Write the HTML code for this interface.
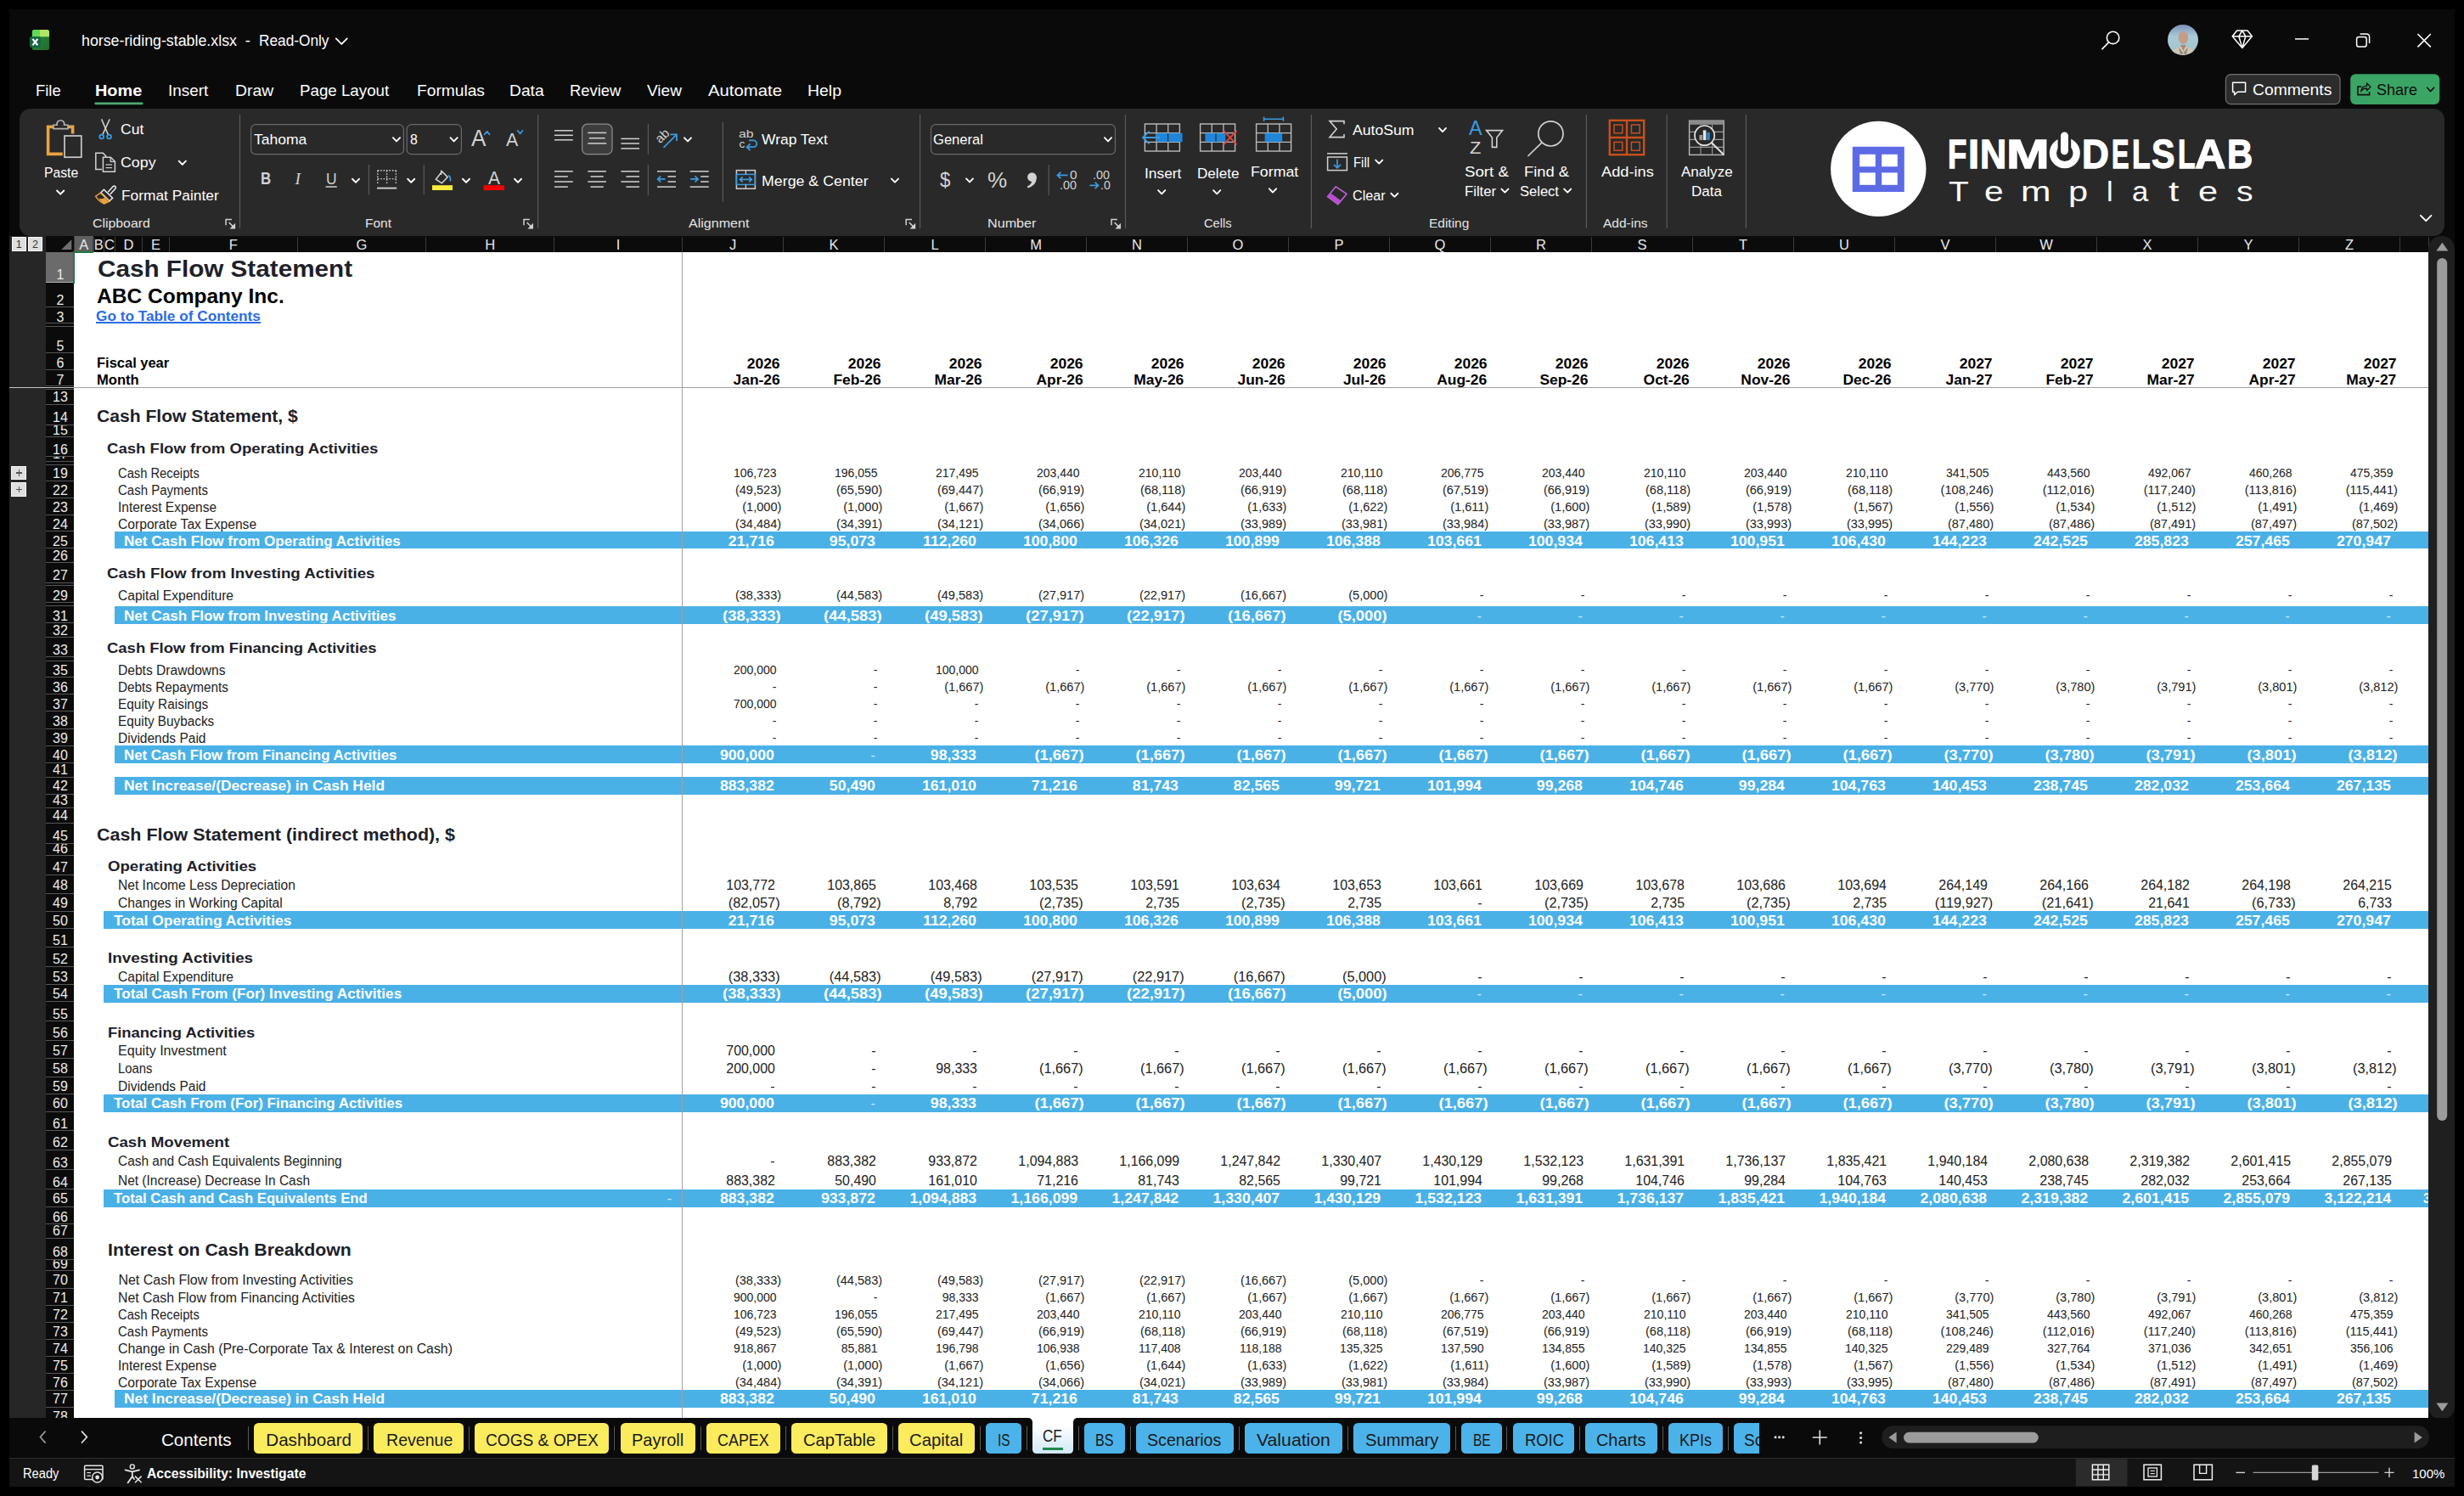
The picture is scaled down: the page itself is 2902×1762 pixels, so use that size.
<!DOCTYPE html>
<html><head><meta charset="utf-8"><title>horse-riding-stable.xlsx</title>
<style>
html,body{margin:0;padding:0;background:#000;}
body{width:2902px;height:1762px;position:relative;overflow:hidden;font-family:"Liberation Sans",sans-serif;}
div,span.t,svg{position:absolute;}
span.t{white-space:nowrap;display:block;}
.rh{left:54px;width:33.3px;overflow:hidden;}
</style></head><body>
<div style="left:11px;top:10.5px;width:2880px;height:1740.5px;background:#0a0a0a;"></div>
<div style="left:22.7px;top:128.2px;width:2856.3px;height:149.7px;background:#292929;border-radius:13px;"></div>
<svg style="left:0;top:0" width="2902" height="290" viewBox="0 0 2902 290"><defs><linearGradient id="xg" x1="0" y1="0" x2="1" y2="1"><stop offset="0" stop-color="#2f8d3c"/><stop offset="1" stop-color="#1f6e2d"/></linearGradient></defs><rect x="37.9" y="35" width="20.1" height="24" fill="url(#xg)" rx="2.6"/><path d="M37.9 37.6a2.6 2.6 0 0 1 2.6-2.6H47V43.2H37.9Z" fill="#62d857" /><path d="M47 35H55.4a2.6 2.6 0 0 1 2.6 2.6V43.2H47Z" fill="#b3e666" /><rect x="34.8" y="43" width="13.2" height="13.2" fill="#14683e" rx="3.2"/><path d="M38.4 45.9L44.4 53.3M44.4 45.9L38.4 53.3" fill="none" stroke="#fff" stroke-width="2.2" /><path d="M395.8 45.35L402.3 51.85L408.8 45.35" fill="none" stroke="#fff" stroke-width="1.8" stroke-linecap="round" stroke-linejoin="round"/><rect x="111.3" y="120.4" width="57.3" height="2.9" fill="#4fa874" rx="1.4"/><path d="M63 149.4H56.6V181.4H73.8" fill="none" stroke="#e9a33e" stroke-width="3.6" /><path d="M80 149.4H85.6V157.6" fill="none" stroke="#e9a33e" stroke-width="3.6" /><path d="M63 151.6V147.2H67.2C66.6 143.6 68.8 141.8 71.4 141.8C74 141.8 76.2 143.6 75.6 147.2H80V151.6Z" fill="#292929" stroke="#b4b4b4" stroke-width="1.6" /><rect x="76" y="160" width="19.8" height="25.2" fill="#292929" stroke="#c9c9c9" stroke-width="1.7"/><path d="M67.1 224.5L71.2 228.7L75.3 224.5" fill="none" stroke="#fff" stroke-width="1.9" stroke-linecap="round" stroke-linejoin="round"/><path d="M119.6 140.4L127.4 158.6" stroke="#d2d2d2" stroke-width="1.5" stroke-linecap="butt" fill="none"/><path d="M129.2 140.4L120.8 158.6" stroke="#d2d2d2" stroke-width="1.5" stroke-linecap="butt" fill="none"/><circle cx="119.7" cy="161" r="2.4" fill="none" stroke="#3b9be0" stroke-width="1.8"/><circle cx="128.5" cy="161" r="2.4" fill="none" stroke="#3b9be0" stroke-width="1.8"/><path d="M120 199.5H112.8V180.2H121.2L124.6 183.6V185" fill="none" stroke="#d2d2d2" stroke-width="1.5" /><path d="M121.4 185.2H130.4L135.4 190.2V202.2H121.4Z" fill="none" stroke="#d2d2d2" stroke-width="1.5" /><path d="M130.2 185.4V190.4H135.2" fill="none" stroke="#d2d2d2" stroke-width="1.3" /><path d="M124.5 194L132 194" stroke="#d2d2d2" stroke-width="1.2" stroke-linecap="butt" fill="none"/><path d="M124.5 197.6L132 197.6" stroke="#d2d2d2" stroke-width="1.2" stroke-linecap="butt" fill="none"/><path d="M210.7 189.7L214.8 193.9L218.9 189.7" fill="none" stroke="#fff" stroke-width="1.9" stroke-linecap="round" stroke-linejoin="round"/><path d="M127.2 226.2L133.2 219.6a1.8 1.8 0 0 1 2.6 2.6L129.8 228.8" fill="none" stroke="#f0f0f0" stroke-width="1.5" /><path d="M122.4 223.2L132.6 233.2L129 236.8L118.8 226.8Z" fill="#292929" stroke="#f0f0f0" stroke-width="1.5" /><path d="M118.4 227.2L128.6 237.2L122.8 240C118.8 238.4 115.2 235.4 112.6 231.2Z" fill="#292929" stroke="#e9a33e" stroke-width="1.5" /><path d="M116.4 233.2C119 234.6 121.4 234.4 123.2 233L127.6 237.4L122.8 239.8C120 238.6 118 236.6 116.4 233.2Z" fill="#e9a33e" /><path d="M266.1 265.2V258.4H272.9" fill="none" stroke="#d2d2d2" stroke-width="1.5" /><path d="M269.7 262L275.3 267.6" fill="none" stroke="#d2d2d2" stroke-width="1.5" /><path d="M277.1 262.8V269.4H270.5Z" fill="#d2d2d2" /><path d="M282.5 135L282.5 269" stroke="#5a5a5a" stroke-width="1.2" stroke-linecap="butt" fill="none"/><rect x="295.6" y="146.7" width="179.8" height="35" fill="none" stroke="#6a6a6a" stroke-width="1.2" rx="5.5"/><rect x="479.2" y="146.7" width="64.2" height="35" fill="none" stroke="#6a6a6a" stroke-width="1.2" rx="5.5"/><path d="M462.9 162.2L467 166.4L471.1 162.2" fill="none" stroke="#fff" stroke-width="1.9" stroke-linecap="round" stroke-linejoin="round"/><path d="M530.5 162.2L534.6 166.4L538.7 162.2" fill="none" stroke="#fff" stroke-width="1.9" stroke-linecap="round" stroke-linejoin="round"/><path d="M570.6 158.4L573.6 154.8L576.6 158.4" fill="none" stroke="#3b9be0" stroke-width="1.7" stroke-linecap="round" stroke-linejoin="round"/><path d="M609.6 153.8L612.6 157.4L615.6 153.8" fill="none" stroke="#3b9be0" stroke-width="1.7" stroke-linecap="round" stroke-linejoin="round"/><path d="M383.6 220L396.8 220" stroke="#d2d2d2" stroke-width="1.5" stroke-linecap="butt" fill="none"/><path d="M415 210.75L419 214.85L423 210.75" fill="none" stroke="#fff" stroke-width="1.9" stroke-linecap="round" stroke-linejoin="round"/><path d="M434.5 194L434.5 229.5" stroke="#5a5a5a" stroke-width="1.2" stroke-linecap="butt" fill="none"/><path d="M444.8 200.8H466.4M444.8 200.8V216M466.4 200.8V216M455.6 200.8V216M444.8 210.6H466.4" fill="none" stroke="#d2d2d2" stroke-width="1.4" stroke-dasharray="1.6 1.8"/><path d="M444 221.6L467.2 221.6" stroke="#d2d2d2" stroke-width="1.9" stroke-linecap="butt" fill="none"/><path d="M480.2 210.75L484.2 214.85L488.2 210.75" fill="none" stroke="#fff" stroke-width="1.9" stroke-linecap="round" stroke-linejoin="round"/><path d="M499.3 194L499.3 229.5" stroke="#5a5a5a" stroke-width="1.2" stroke-linecap="butt" fill="none"/><path d="M513.4 211.2L520.6 202L527.2 208.6L520.4 215.8Z" fill="none" stroke="#d2d2d2" stroke-width="1.5" /><path d="M519.6 200.6V206" fill="none" stroke="#d2d2d2" stroke-width="1.4" /><path d="M528 206.5C530.5 208 530.8 211 530.2 213.4" fill="none" stroke="#3b9be0" stroke-width="1.8" /><rect x="509" y="218.2" width="24" height="5.8" fill="#ffeb3b"/><path d="M545 210.75L549 214.85L553 210.75" fill="none" stroke="#fff" stroke-width="1.9" stroke-linecap="round" stroke-linejoin="round"/><rect x="569.6" y="218.2" width="24.4" height="5.8" fill="#f40000"/><path d="M606 210.75L610 214.85L614 210.75" fill="none" stroke="#fff" stroke-width="1.9" stroke-linecap="round" stroke-linejoin="round"/><path d="M617 265.2V258.4H623.8" fill="none" stroke="#d2d2d2" stroke-width="1.5" /><path d="M620.6 262L626.2 267.6" fill="none" stroke="#d2d2d2" stroke-width="1.5" /><path d="M628 262.8V269.4H621.4Z" fill="#d2d2d2" /><path d="M633.6 135L633.6 269" stroke="#5a5a5a" stroke-width="1.2" stroke-linecap="butt" fill="none"/><path d="M653 153.8L674.8 153.8" stroke="#d2d2d2" stroke-width="1.5" stroke-linecap="butt" fill="none"/><path d="M653 159.3L674.8 159.3" stroke="#d2d2d2" stroke-width="1.5" stroke-linecap="butt" fill="none"/><path d="M653 164.8L674.8 164.8" stroke="#d2d2d2" stroke-width="1.5" stroke-linecap="butt" fill="none"/><rect x="685.6" y="146.2" width="35.4" height="35.4" fill="#3d3d3d" stroke="#8f8f8f" stroke-width="1.2" rx="6"/><path d="M692.3 156.4L714.2 156.4" stroke="#d2d2d2" stroke-width="1.5" stroke-linecap="butt" fill="none"/><path d="M693.9 162.7L712.6 162.7" stroke="#d2d2d2" stroke-width="1.5" stroke-linecap="butt" fill="none"/><path d="M692.3 168.9L714.2 168.9" stroke="#d2d2d2" stroke-width="1.5" stroke-linecap="butt" fill="none"/><path d="M731.4 163.4L753 163.4" stroke="#d2d2d2" stroke-width="1.5" stroke-linecap="butt" fill="none"/><path d="M731.4 169L753 169" stroke="#d2d2d2" stroke-width="1.5" stroke-linecap="butt" fill="none"/><path d="M731.4 174.9L753 174.9" stroke="#d2d2d2" stroke-width="1.5" stroke-linecap="butt" fill="none"/><path d="M763.4 146L763.4 181.8" stroke="#5a5a5a" stroke-width="1.2" stroke-linecap="butt" fill="none"/><path d="M781.5 173.8L796.2 159.2" stroke="#3b9be0" stroke-width="1.8" stroke-linecap="butt" fill="none"/><path d="M789.4 158.4H797V166" fill="none" stroke="#3b9be0" stroke-width="1.8" /><path d="M806 162.35L810 166.45L814 162.35" fill="none" stroke="#fff" stroke-width="1.9" stroke-linecap="round" stroke-linejoin="round"/><path d="M851.4 144L851.4 237.7" stroke="#5a5a5a" stroke-width="1.2" stroke-linecap="butt" fill="none"/><path d="M882 165.4H887.4a3.5 3.5 0 0 1 0 7.8H880" fill="none" stroke="#3b9be0" stroke-width="1.8" /><path d="M883.6 169.4L879.6 173.2L883.6 177" fill="none" stroke="#3b9be0" stroke-width="1.8" /><path d="M653 201.8L674.8 201.8" stroke="#d2d2d2" stroke-width="1.5" stroke-linecap="butt" fill="none"/><path d="M653 207.9L668.8 207.9" stroke="#d2d2d2" stroke-width="1.5" stroke-linecap="butt" fill="none"/><path d="M653 214L674.8 214" stroke="#d2d2d2" stroke-width="1.5" stroke-linecap="butt" fill="none"/><path d="M653 220.1L668.8 220.1" stroke="#d2d2d2" stroke-width="1.5" stroke-linecap="butt" fill="none"/><path d="M692.3 201.8L714 201.8" stroke="#d2d2d2" stroke-width="1.5" stroke-linecap="butt" fill="none"/><path d="M695.5 207.9L710.8 207.9" stroke="#d2d2d2" stroke-width="1.5" stroke-linecap="butt" fill="none"/><path d="M692.3 214L714 214" stroke="#d2d2d2" stroke-width="1.5" stroke-linecap="butt" fill="none"/><path d="M695.5 220.1L710.8 220.1" stroke="#d2d2d2" stroke-width="1.5" stroke-linecap="butt" fill="none"/><path d="M731.4 201.8L753 201.8" stroke="#d2d2d2" stroke-width="1.5" stroke-linecap="butt" fill="none"/><path d="M737.4 207.9L753 207.9" stroke="#d2d2d2" stroke-width="1.5" stroke-linecap="butt" fill="none"/><path d="M731.4 214L753 214" stroke="#d2d2d2" stroke-width="1.5" stroke-linecap="butt" fill="none"/><path d="M737.4 220.1L753 220.1" stroke="#d2d2d2" stroke-width="1.5" stroke-linecap="butt" fill="none"/><path d="M763.4 193.9L763.4 230.2" stroke="#5a5a5a" stroke-width="1.2" stroke-linecap="butt" fill="none"/><path d="M774 201.8L796 201.8" stroke="#d2d2d2" stroke-width="1.5" stroke-linecap="butt" fill="none"/><path d="M774 220.1L796 220.1" stroke="#d2d2d2" stroke-width="1.5" stroke-linecap="butt" fill="none"/><path d="M786.5 207.9L796 207.9" stroke="#d2d2d2" stroke-width="1.5" stroke-linecap="butt" fill="none"/><path d="M786.5 214L796 214" stroke="#d2d2d2" stroke-width="1.5" stroke-linecap="butt" fill="none"/><path d="M783.5 210.9H774.6M778.2 207.4L774.6 210.9L778.2 214.4" fill="none" stroke="#3b9be0" stroke-width="1.7" /><path d="M812.7 201.8L834.7 201.8" stroke="#d2d2d2" stroke-width="1.5" stroke-linecap="butt" fill="none"/><path d="M812.7 220.1L834.7 220.1" stroke="#d2d2d2" stroke-width="1.5" stroke-linecap="butt" fill="none"/><path d="M825.2 207.9L834.7 207.9" stroke="#d2d2d2" stroke-width="1.5" stroke-linecap="butt" fill="none"/><path d="M825.2 214L834.7 214" stroke="#d2d2d2" stroke-width="1.5" stroke-linecap="butt" fill="none"/><path d="M813.1 210.9H822.1M818.5 207.4L822.1 210.9L818.5 214.4" fill="none" stroke="#3b9be0" stroke-width="1.7" /><rect x="867.4" y="200.6" width="22" height="21.6" fill="none" stroke="#d2d2d2" stroke-width="1.5"/><rect x="867.4" y="205.4" width="22" height="12" fill="none" stroke="#3b9be0" stroke-width="1.5"/><path d="M871.6 211.4H885.2M874.6 208.4L871.4 211.4L874.6 214.4M882.2 208.4L885.4 211.4L882.2 214.4" fill="none" stroke="#3b9be0" stroke-width="1.6" /><path d="M878.4 200.6L878.4 205" stroke="#d2d2d2" stroke-width="1.3" stroke-linecap="butt" fill="none"/><path d="M878.4 217.6L878.4 222" stroke="#d2d2d2" stroke-width="1.3" stroke-linecap="butt" fill="none"/><path d="M1050 210.55L1054 214.65L1058 210.55" fill="none" stroke="#fff" stroke-width="1.9" stroke-linecap="round" stroke-linejoin="round"/><path d="M1067.2 265.2V258.4H1074" fill="none" stroke="#d2d2d2" stroke-width="1.5" /><path d="M1070.8 262L1076.4 267.6" fill="none" stroke="#d2d2d2" stroke-width="1.5" /><path d="M1078.2 262.8V269.4H1071.6Z" fill="#d2d2d2" /><path d="M1083.6 135L1083.6 269" stroke="#5a5a5a" stroke-width="1.2" stroke-linecap="butt" fill="none"/><rect x="1096.5" y="146.7" width="217" height="35" fill="none" stroke="#6a6a6a" stroke-width="1.2" rx="5.5"/><path d="M1300.9 162.2L1305 166.4L1309.1 162.2" fill="none" stroke="#fff" stroke-width="1.9" stroke-linecap="round" stroke-linejoin="round"/><path d="M1138 210.35L1142 214.45L1146 210.35" fill="none" stroke="#fff" stroke-width="1.9" stroke-linecap="round" stroke-linejoin="round"/><path d="M1235.2 193.9L1235.2 230.2" stroke="#5a5a5a" stroke-width="1.2" stroke-linecap="butt" fill="none"/><path d="M1257.6 206.4H1245.6M1249.4 202.6L1245.4 206.4L1249.4 210.2" fill="none" stroke="#3b9be0" stroke-width="1.7" /><path d="M1283.4 218.4H1293.4M1289.6 214.6L1293.6 218.4L1289.6 222.2" fill="none" stroke="#3b9be0" stroke-width="1.7" /><circle cx="1215.4" cy="208.6" r="5.3" fill="#d2d2d2"/><path d="M1220.6 207.6C1221.6 214 1218 219.6 1210.6 221.4L1209.8 219.4C1214 217.8 1215.8 214.6 1215.4 211Z" fill="#d2d2d2" /><path d="M1309 265.2V258.4H1315.8" fill="none" stroke="#d2d2d2" stroke-width="1.5" /><path d="M1312.6 262L1318.2 267.6" fill="none" stroke="#d2d2d2" stroke-width="1.5" /><path d="M1320 262.8V269.4H1313.4Z" fill="#d2d2d2" /><path d="M1325.5 135L1325.5 269" stroke="#5a5a5a" stroke-width="1.2" stroke-linecap="butt" fill="none"/><rect x="1348.4" y="146" width="41" height="32" fill="none" stroke="#bdbdbd" stroke-width="1.4"/><path d="M1362.07 146L1362.07 178" stroke="#bdbdbd" stroke-width="1.3" stroke-linecap="butt" fill="none"/><path d="M1375.73 146L1375.73 178" stroke="#bdbdbd" stroke-width="1.3" stroke-linecap="butt" fill="none"/><path d="M1348.4 156.67L1389.4 156.67" stroke="#bdbdbd" stroke-width="1.3" stroke-linecap="butt" fill="none"/><path d="M1348.4 167.33L1389.4 167.33" stroke="#bdbdbd" stroke-width="1.3" stroke-linecap="butt" fill="none"/><rect x="1362" y="156.8" width="30.6" height="10.4" fill="#1f86d8"/><path d="M1375.6 157L1375.6 167" stroke="#292929" stroke-width="1.1" stroke-linecap="butt" fill="none"/><path d="M1366 162H1346.2M1353.6 154.6L1346 162L1353.6 169.4" fill="none" stroke="#3b9be0" stroke-width="1.9" /><path d="M1364.1 224.1L1368.2 228.3L1372.3 224.1" fill="none" stroke="#fff" stroke-width="1.9" stroke-linecap="round" stroke-linejoin="round"/><rect x="1413.6" y="146" width="41" height="32" fill="none" stroke="#bdbdbd" stroke-width="1.4"/><path d="M1427.27 146L1427.27 178" stroke="#bdbdbd" stroke-width="1.3" stroke-linecap="butt" fill="none"/><path d="M1440.93 146L1440.93 178" stroke="#bdbdbd" stroke-width="1.3" stroke-linecap="butt" fill="none"/><path d="M1413.6 156.67L1454.6 156.67" stroke="#bdbdbd" stroke-width="1.3" stroke-linecap="butt" fill="none"/><path d="M1413.6 167.33L1454.6 167.33" stroke="#bdbdbd" stroke-width="1.3" stroke-linecap="butt" fill="none"/><rect x="1419.4" y="156.8" width="24" height="10.4" fill="#1f86d8"/><path d="M1432 157L1432 167" stroke="#292929" stroke-width="1.1" stroke-linecap="butt" fill="none"/><path d="M1441 154L1456.6 170.4M1456.6 154L1441 170.4" fill="none" stroke="#e0453a" stroke-width="2" /><path d="M1429.1 224.1L1433.2 228.3L1437.3 224.1" fill="none" stroke="#fff" stroke-width="1.9" stroke-linecap="round" stroke-linejoin="round"/><rect x="1479.6" y="146" width="41" height="32" fill="none" stroke="#bdbdbd" stroke-width="1.4"/><path d="M1493.27 146L1493.27 178" stroke="#bdbdbd" stroke-width="1.3" stroke-linecap="butt" fill="none"/><path d="M1506.93 146L1506.93 178" stroke="#bdbdbd" stroke-width="1.3" stroke-linecap="butt" fill="none"/><path d="M1479.6 156.67L1520.6 156.67" stroke="#bdbdbd" stroke-width="1.3" stroke-linecap="butt" fill="none"/><path d="M1479.6 167.33L1520.6 167.33" stroke="#bdbdbd" stroke-width="1.3" stroke-linecap="butt" fill="none"/><rect x="1489.6" y="156.8" width="20.6" height="10.4" fill="#1f86d8"/><path d="M1488.6 140.2H1511.4M1488.6 137.6V142.8M1511.4 137.6V142.8" fill="none" stroke="#3b9be0" stroke-width="1.6" /><path d="M1494.9 222.3L1499 226.5L1503.1 222.3" fill="none" stroke="#fff" stroke-width="1.9" stroke-linecap="round" stroke-linejoin="round"/><path d="M1544.4 135L1544.4 269" stroke="#5a5a5a" stroke-width="1.2" stroke-linecap="butt" fill="none"/><path d="M1583 146.2V142.6H1566L1574.2 152L1566 161.6H1583V158" fill="none" stroke="#d2d2d2" stroke-width="1.6" /><path d="M1695 150.95L1699 155.05L1703 150.95" fill="none" stroke="#fff" stroke-width="1.9" stroke-linecap="round" stroke-linejoin="round"/><rect x="1563.6" y="185" width="22.8" height="15.6" fill="none" stroke="#d2d2d2" stroke-width="1.5"/><path d="M1563 180.8L1587 180.8" stroke="#d2d2d2" stroke-width="1.5" stroke-linecap="butt" fill="none"/><path d="M1575 187.6V197.6M1571 193.8L1575 197.8L1579 193.8" fill="none" stroke="#3b9be0" stroke-width="1.7" /><path d="M1620.2 188.55L1624.2 192.65L1628.2 188.55" fill="none" stroke="#fff" stroke-width="1.9" stroke-linecap="round" stroke-linejoin="round"/><path d="M1573.2 219.8L1586 228.4L1575.8 240.6L1563.6 231.6Z" fill="none" stroke="#c265d8" stroke-width="1.6" /><path d="M1567.2 227.4L1578.6 235.8L1575.8 240.2L1564 231.6Z" fill="#b44fce" /><path d="M1638.4 227.75L1642.4 231.85L1646.4 227.75" fill="none" stroke="#fff" stroke-width="1.9" stroke-linecap="round" stroke-linejoin="round"/><path d="M1750.6 153.6H1769.6L1762.8 162V173.4H1757.4V162Z" fill="none" stroke="#d2d2d2" stroke-width="1.6" /><path d="M1768.4 222.55L1772.4 226.65L1776.4 222.55" fill="none" stroke="#fff" stroke-width="1.9" stroke-linecap="round" stroke-linejoin="round"/><circle cx="1826.4" cy="157.4" r="14.6" fill="none" stroke="#d2d2d2" stroke-width="1.7"/><path d="M1816 167.8L1799.4 184" stroke="#d2d2d2" stroke-width="1.7" stroke-linecap="butt" fill="none"/><path d="M1842.2 222.55L1846.2 226.65L1850.2 222.55" fill="none" stroke="#fff" stroke-width="1.9" stroke-linecap="round" stroke-linejoin="round"/><path d="M1868.4 135L1868.4 269" stroke="#5a5a5a" stroke-width="1.2" stroke-linecap="butt" fill="none"/><rect x="1895.8" y="141.8" width="40.4" height="40.4" fill="none" stroke="#c9501c" stroke-width="2.4"/><path d="M1916 141.8V182.2M1895.8 162H1936.2" fill="none" stroke="#c9501c" stroke-width="2.4" /><rect x="1901" y="147" width="9.8" height="9.8" fill="none" stroke="#c9501c" stroke-width="1.5"/><rect x="1921.4" y="147" width="9.8" height="9.8" fill="none" stroke="#c9501c" stroke-width="1.5"/><rect x="1901" y="167.4" width="9.8" height="9.8" fill="none" stroke="#c9501c" stroke-width="1.5"/><rect x="1921.4" y="167.4" width="9.8" height="9.8" fill="none" stroke="#c9501c" stroke-width="1.5"/><path d="M1963.2 135L1963.2 269" stroke="#5a5a5a" stroke-width="1.2" stroke-linecap="butt" fill="none"/><rect x="1989.6" y="142.2" width="40.6" height="40.2" fill="none" stroke="#bdbdbd" stroke-width="1.4"/><rect x="1989.6" y="142.2" width="40.6" height="4.6" fill="#8a8a8a"/><path d="M1989.6 155.4L2030.2 155.4" stroke="#9a9a9a" stroke-width="1.1" stroke-linecap="butt" fill="none"/><path d="M1989.6 164.4L2030.2 164.4" stroke="#9a9a9a" stroke-width="1.1" stroke-linecap="butt" fill="none"/><path d="M1989.6 173.4L2030.2 173.4" stroke="#9a9a9a" stroke-width="1.1" stroke-linecap="butt" fill="none"/><path d="M2003 146.8L2003 182.4" stroke="#9a9a9a" stroke-width="1.1" stroke-linecap="butt" fill="none"/><path d="M2016.6 146.8L2016.6 182.4" stroke="#9a9a9a" stroke-width="1.1" stroke-linecap="butt" fill="none"/><circle cx="2007.6" cy="159.6" r="11.6" fill="#292929" stroke="#e6e6e6" stroke-width="1.7"/><path d="M2015.8 168L2030 182" stroke="#e6e6e6" stroke-width="1.9" stroke-linecap="butt" fill="none"/><rect x="2001.4" y="159" width="3.6" height="6" fill="#9a9a9a"/><rect x="2005.8" y="153.4" width="3.6" height="11.6" fill="#e6e6e6"/><rect x="2010.2" y="156" width="3.6" height="9" fill="#1f86d8"/><path d="M2056.4 135L2056.4 269" stroke="#5a5a5a" stroke-width="1.2" stroke-linecap="butt" fill="none"/><circle cx="2212.3" cy="198.9" r="56.2" fill="#fff"/><rect x="2181.8" y="172.8" width="61" height="53.2" fill="#5c6ae6"/><rect x="2190.2" y="181.8" width="18.6" height="14.4" fill="#fff"/><rect x="2216.2" y="181.8" width="18.6" height="14.4" fill="#fff"/><rect x="2190.2" y="203.4" width="18.6" height="14.4" fill="#fff"/><rect x="2216.2" y="203.4" width="18.6" height="14.4" fill="#fff"/><path d="M2850.95 253.8L2857.2 260.2L2863.45 253.8" fill="none" stroke="#fff" stroke-width="1.8" stroke-linecap="round" stroke-linejoin="round"/><circle cx="2488.6" cy="44.4" r="7.2" fill="none" stroke="#fff" stroke-width="1.6"/><path d="M2483.6 49.8L2476 57.6" stroke="#fff" stroke-width="1.7" stroke-linecap="round" fill="none"/><defs><clipPath id="av"><circle cx="2571" cy="46.9" r="18"/></clipPath><linearGradient id="sky" x1="0" y1="0" x2="0" y2="1"><stop offset="0" stop-color="#7d92b8"/><stop offset="0.4" stop-color="#a9cbd9"/><stop offset="1" stop-color="#9ec3c6"/></linearGradient></defs><g clip-path="url(#av)"><rect x="2553" y="28.9" width="36" height="36" fill="url(#sky)"/><ellipse cx="2571.4" cy="44.6" rx="5.8" ry="7.4" fill="#c79c86"/><path d="M2556 66C2558 57.5 2564 55 2571.4 55C2579 55 2585 57.5 2587 66Z" fill="#cfc5b6"/><path d="M2568.2 53L2571.4 60L2574.6 53Z" fill="#b08570"/><path d="M2566 55.6L2571.4 63L2568 64Z M2576.8 55.6L2571.4 63L2574.8 64Z" fill="#8d8478"/></g><path d="M2634.6 36H2647L2652.4 42.8L2640.8 56.4L2629.2 42.8ZM2629.2 42.8H2652.4M2636.8 42.8L2640.8 36L2644.8 42.8L2640.8 56.4Z" fill="none" stroke="#fff" stroke-width="1.5" stroke-linejoin="round"/><path d="M2703 45.9L2719 45.9" stroke="#fff" stroke-width="1.5" stroke-linecap="butt" fill="none"/><rect x="2775.6" y="43.4" width="11.6" height="11.6" fill="none" stroke="#fff" stroke-width="1.5" rx="2.6"/><path d="M2779.6 40H2787.4a3.2 3.2 0 0 1 3.2 3.2V51" fill="none" stroke="#fff" stroke-width="1.5" /><path d="M2847.4 40L2862.8 55.4M2862.8 40L2847.4 55.4" fill="none" stroke="#fff" stroke-width="1.6" /><rect x="2621.4" y="87.6" width="134.6" height="35" fill="#2c2c2c" stroke="#707070" stroke-width="1.2" rx="6"/><path d="M2629.6 97.2H2644.6V108.2H2635.4L2631.6 111.8V108.2H2629.6Z" fill="none" stroke="#fff" stroke-width="1.5" stroke-linejoin="round"/><rect x="2768.2" y="87.2" width="105" height="35.8" fill="#3ba565" rx="6"/><path d="M2781.4 102H2777V111.6H2790.6V108" fill="none" stroke="#111" stroke-width="1.6" /><path d="M2780.6 107.6C2781.4 103.4 2784 101.2 2787.6 101.2V98L2792 102.4L2787.6 106.8V104C2784.6 104 2782.4 105 2780.6 107.6Z" fill="none" stroke="#111" stroke-width="1.3" stroke-linejoin="round"/><path d="M2858.6 103.2L2862.6 107.6L2866.6 103.2" fill="none" stroke="#111" stroke-width="1.6" stroke-linecap="round" stroke-linejoin="round"/></svg>
<span class="t" style="top:39px;font-size:18.6px;line-height:18.6px;color:#fff;left:95.6px;transform:scaleX(0.9569);transform-origin:0 0;">horse-riding-stable.xlsx</span>
<span class="t" style="top:39px;font-size:18.6px;line-height:18.6px;color:#fff;left:288.8px;">-</span>
<span class="t" style="top:39px;font-size:18.6px;line-height:18.6px;color:#fff;left:305.2px;transform:scaleX(0.9279);transform-origin:0 0;">Read-Only</span>
<span class="t" style="top:98px;font-size:18.6px;line-height:18.6px;color:#fff;left:42.4px;transform:scaleX(0.9876);transform-origin:0 0;">File</span>
<span class="t" style="top:98px;font-size:18.6px;line-height:18.6px;color:#fff;font-weight:bold;left:111.6px;transform:scaleX(1.0682);transform-origin:0 0;">Home</span>
<span class="t" style="top:98px;font-size:18.6px;line-height:18.6px;color:#fff;left:198.4px;transform:scaleX(1.0146);transform-origin:0 0;">Insert</span>
<span class="t" style="top:98px;font-size:18.6px;line-height:18.6px;color:#fff;left:277.4px;transform:scaleX(1.0414);transform-origin:0 0;">Draw</span>
<span class="t" style="top:98px;font-size:18.6px;line-height:18.6px;color:#fff;left:353.4px;transform:scaleX(1.0071);transform-origin:0 0;">Page Layout</span>
<span class="t" style="top:98px;font-size:18.6px;line-height:18.6px;color:#fff;left:491.2px;transform:scaleX(1.0320);transform-origin:0 0;">Formulas</span>
<span class="t" style="top:98px;font-size:18.6px;line-height:18.6px;color:#fff;left:600px;transform:scaleX(1.0334);transform-origin:0 0;">Data</span>
<span class="t" style="top:98px;font-size:18.6px;line-height:18.6px;color:#fff;left:671.2px;transform:scaleX(0.9904);transform-origin:0 0;">Review</span>
<span class="t" style="top:98px;font-size:18.6px;line-height:18.6px;color:#fff;left:762px;transform:scaleX(1.0255);transform-origin:0 0;">View</span>
<span class="t" style="top:98px;font-size:18.6px;line-height:18.6px;color:#fff;left:834px;transform:scaleX(1.0928);transform-origin:0 0;">Automate</span>
<span class="t" style="top:98px;font-size:18.6px;line-height:18.6px;color:#fff;left:951px;transform:scaleX(1.0456);transform-origin:0 0;">Help</span>
<span class="t" style="top:196px;font-size:16.8px;line-height:16.8px;color:#fff;left:51.8px;transform:scaleX(0.9357);transform-origin:0 0;">Paste</span>
<span class="t" style="top:145px;font-size:16.8px;line-height:16.8px;color:#fff;left:142px;transform:scaleX(1.0442);transform-origin:0 0;">Cut</span>
<span class="t" style="top:184px;font-size:16.8px;line-height:16.8px;color:#fff;left:142px;transform:scaleX(1.0607);transform-origin:0 0;">Copy</span>
<span class="t" style="top:223px;font-size:16.8px;line-height:16.8px;color:#fff;left:142.7px;transform:scaleX(1.0332);transform-origin:0 0;">Format Painter</span>
<span class="t" style="top:157px;font-size:16.8px;line-height:16.8px;color:#fff;left:299px;transform:scaleX(1.0440);transform-origin:0 0;">Tahoma</span>
<span class="t" style="top:157px;font-size:16.8px;line-height:16.8px;color:#fff;left:483.2px;transform:scaleX(0.9418);transform-origin:0 0;">8</span>
<span class="t" style="top:157px;font-size:16.8px;line-height:16.8px;color:#fff;left:897.3px;transform:scaleX(1.0385);transform-origin:0 0;">Wrap Text</span>
<span class="t" style="top:206px;font-size:16.8px;line-height:16.8px;color:#fff;left:897.3px;transform:scaleX(1.0600);transform-origin:0 0;">Merge &amp; Center</span>
<span class="t" style="top:157px;font-size:16.8px;line-height:16.8px;color:#fff;left:1099.2px;transform:scaleX(0.9871);transform-origin:0 0;">General</span>
<span class="t" style="top:197px;font-size:16.8px;line-height:16.8px;color:#fff;left:1347.5px;transform:scaleX(1.0353);transform-origin:0 0;">Insert</span>
<span class="t" style="top:197px;font-size:16.8px;line-height:16.8px;color:#fff;left:1409.5px;transform:scaleX(1.0193);transform-origin:0 0;">Delete</span>
<span class="t" style="top:195px;font-size:16.8px;line-height:16.8px;color:#fff;left:1472.7px;transform:scaleX(1.0581);transform-origin:0 0;">Format</span>
<span class="t" style="top:146px;font-size:16.8px;line-height:16.8px;color:#fff;left:1593.4px;transform:scaleX(1.0506);transform-origin:0 0;">AutoSum</span>
<span class="t" style="top:184px;font-size:16.8px;line-height:16.8px;color:#fff;left:1594.2px;transform:scaleX(0.8853);transform-origin:0 0;">Fill</span>
<span class="t" style="top:223px;font-size:16.8px;line-height:16.8px;color:#fff;left:1593.4px;transform:scaleX(0.9614);transform-origin:0 0;">Clear</span>
<span class="t" style="top:195px;font-size:16.8px;line-height:16.8px;color:#fff;left:1725px;transform:scaleX(1.1138);transform-origin:0 0;">Sort &amp;</span>
<span class="t" style="top:218px;font-size:16.8px;line-height:16.8px;color:#fff;left:1724.5px;transform:scaleX(0.9937);transform-origin:0 0;">Filter</span>
<span class="t" style="top:195px;font-size:16.8px;line-height:16.8px;color:#fff;left:1795px;transform:scaleX(1.0915);transform-origin:0 0;">Find &amp;</span>
<span class="t" style="top:218px;font-size:16.8px;line-height:16.8px;color:#fff;left:1790px;transform:scaleX(0.9851);transform-origin:0 0;">Select</span>
<span class="t" style="top:195px;font-size:16.8px;line-height:16.8px;color:#fff;left:1885.5px;transform:scaleX(1.0849);transform-origin:0 0;">Add-ins</span>
<span class="t" style="top:195px;font-size:16.8px;line-height:16.8px;color:#fff;left:1980px;transform:scaleX(1.0156);transform-origin:0 0;">Analyze</span>
<span class="t" style="top:218px;font-size:16.8px;line-height:16.8px;color:#fff;left:1992px;transform:scaleX(1.0144);transform-origin:0 0;">Data</span>
<span class="t" style="top:255px;font-size:15.4px;line-height:15.4px;color:#e4e4e4;left:109px;transform:scaleX(1.0285);transform-origin:0 0;">Clipboard</span>
<span class="t" style="top:255px;font-size:15.4px;line-height:15.4px;color:#e4e4e4;left:430px;transform:scaleX(1.0060);transform-origin:0 0;">Font</span>
<span class="t" style="top:255px;font-size:15.4px;line-height:15.4px;color:#e4e4e4;left:810.5px;transform:scaleX(1.0441);transform-origin:0 0;">Alignment</span>
<span class="t" style="top:255px;font-size:15.4px;line-height:15.4px;color:#e4e4e4;left:1163px;transform:scaleX(1.0498);transform-origin:0 0;">Number</span>
<span class="t" style="top:255px;font-size:15.4px;line-height:15.4px;color:#e4e4e4;left:1418px;transform:scaleX(0.9495);transform-origin:0 0;">Cells</span>
<span class="t" style="top:255px;font-size:15.4px;line-height:15.4px;color:#e4e4e4;left:1682.5px;transform:scaleX(1.0045);transform-origin:0 0;">Editing</span>
<span class="t" style="top:255px;font-size:15.4px;line-height:15.4px;color:#e4e4e4;left:1888.4px;transform:scaleX(1.0073);transform-origin:0 0;">Add-ins</span>
<span class="t" style="top:150px;font-size:27px;line-height:27px;color:#d2d2d2;left:554.6px;transform:scaleX(0.9661);transform-origin:0 0;">A</span>
<span class="t" style="top:154px;font-size:22.5px;line-height:22.5px;color:#d2d2d2;left:595.6px;transform:scaleX(0.9461);transform-origin:0 0;">A</span>
<span class="t" style="top:201px;font-size:19.5px;line-height:19.5px;color:#d2d2d2;font-weight:bold;left:307.4px;transform:scaleX(0.8663);transform-origin:0 0;">B</span>
<span class="t" style="top:201px;font-size:19.5px;line-height:19.5px;color:#d2d2d2;font-style:italic;left:347.6px;font-family:'Liberation Serif',serif;">I</span>
<span class="t" style="top:202px;font-size:18.4px;line-height:18.4px;color:#d2d2d2;left:384px;transform:scaleX(0.9482);transform-origin:0 0;">U</span>
<span class="t" style="top:199px;font-size:21.6px;line-height:21.6px;color:#d2d2d2;left:575.2px;transform:scaleX(0.9717);transform-origin:0 0;">A</span>
<span class="t" style="top:156px;font-size:15px;line-height:15px;color:#d2d2d2;left:778.6px;transform:rotate(-45deg);transform-origin:0 100%;">ab</span>
<span class="t" style="top:151px;font-size:13.6px;line-height:13.6px;color:#d2d2d2;left:870.4px;transform:scaleX(1.1634);transform-origin:0 0;">ab</span>
<span class="t" style="top:163px;font-size:13.6px;line-height:13.6px;color:#d2d2d2;left:870.6px;">c</span>
<span class="t" style="top:201px;font-size:23px;line-height:23px;color:#d2d2d2;left:1106.8px;transform:scaleX(0.9694);transform-origin:0 0;">$</span>
<span class="t" style="top:199px;font-size:26.5px;line-height:26.5px;color:#d2d2d2;left:1163.4px;transform:scaleX(0.9846);transform-origin:0 0;">%</span>
<span class="t" style="top:199px;font-size:14.6px;line-height:14.6px;color:#d2d2d2;left:1259.6px;transform:scaleX(1.0591);transform-origin:0 0;">0</span>
<span class="t" style="top:211px;font-size:14.6px;line-height:14.6px;color:#d2d2d2;left:1248.2px;transform:scaleX(0.9854);transform-origin:0 0;">.00</span>
<span class="t" style="top:199px;font-size:14.6px;line-height:14.6px;color:#d2d2d2;left:1287.3px;transform:scaleX(0.9854);transform-origin:0 0;">.00</span>
<span class="t" style="top:211px;font-size:14.6px;line-height:14.6px;color:#d2d2d2;left:1295.5px;transform:scaleX(0.9691);transform-origin:0 0;">.0</span>
<span class="t" style="top:140px;font-size:23px;line-height:23px;color:#3b9be0;left:1730px;transform:scaleX(1.0168);transform-origin:0 0;">A</span>
<span class="t" style="top:163px;font-size:21px;line-height:21px;color:#d2d2d2;left:1730.6px;transform:scaleX(1.0446);transform-origin:0 0;">Z</span>
<span class="t" style="top:97px;font-size:18.8px;line-height:18.8px;color:#fff;left:2652.6px;transform:scaleX(1.0276);transform-origin:0 0;">Comments</span>
<span class="t" style="top:97px;font-size:18.8px;line-height:18.8px;color:#0c0c0c;left:2799.2px;transform:scaleX(0.9568);transform-origin:0 0;">Share</span>
<span class="t" style="left:2293.69px;top:157px;font-size:48.8px;line-height:48.8px;color:#fff;transform:scaleX(0.7501);transform-origin:0 0;font-weight:bold;-webkit-text-stroke:1.3px #fff;">F</span>
<span class="t" style="left:2318.18px;top:157px;font-size:48.8px;line-height:48.8px;color:#fff;transform:scaleX(0.9634);transform-origin:0 0;font-weight:bold;-webkit-text-stroke:1.3px #fff;">I</span>
<span class="t" style="left:2332.23px;top:157px;font-size:48.8px;line-height:48.8px;color:#fff;transform:scaleX(0.8852);transform-origin:0 0;font-weight:bold;-webkit-text-stroke:1.3px #fff;">N</span>
<span class="t" style="left:2362.74px;top:157px;font-size:48.8px;line-height:48.8px;color:#fff;transform:scaleX(1.2451);transform-origin:0 0;font-weight:bold;-webkit-text-stroke:1.3px #fff;">M</span>
<span class="t" style="left:2452.3px;top:157px;font-size:48.8px;line-height:48.8px;color:#fff;transform:scaleX(0.9033);transform-origin:0 0;font-weight:bold;-webkit-text-stroke:1.3px #fff;">D</span>
<span class="t" style="left:2487.26px;top:157px;font-size:48.8px;line-height:48.8px;color:#fff;transform:scaleX(0.6299);transform-origin:0 0;font-weight:bold;-webkit-text-stroke:1.3px #fff;">E</span>
<span class="t" style="left:2511.31px;top:157px;font-size:48.8px;line-height:48.8px;color:#fff;transform:scaleX(0.7234);transform-origin:0 0;font-weight:bold;-webkit-text-stroke:1.3px #fff;">L</span>
<span class="t" style="left:2534.29px;top:157px;font-size:48.8px;line-height:48.8px;color:#fff;transform:scaleX(0.8427);transform-origin:0 0;font-weight:bold;-webkit-text-stroke:1.3px #fff;">S</span>
<span class="t" style="left:2564.98px;top:157px;font-size:48.8px;line-height:48.8px;color:#fff;transform:scaleX(0.6911);transform-origin:0 0;font-weight:bold;-webkit-text-stroke:1.3px #fff;">L</span>
<span class="t" style="left:2584.59px;top:157px;font-size:48.8px;line-height:48.8px;color:#fff;transform:scaleX(1.0277);transform-origin:0 0;font-weight:bold;-webkit-text-stroke:1.3px #fff;">A</span>
<span class="t" style="left:2622.9px;top:157px;font-size:48.8px;line-height:48.8px;color:#fff;transform:scaleX(0.8561);transform-origin:0 0;font-weight:bold;-webkit-text-stroke:1.3px #fff;">B</span>
<svg style="left:2400px;top:140px" width="70" height="70" viewBox="2400 140 70 70"><circle cx="2431.8" cy="180.2" r="13.9" fill="none" stroke="#fff" stroke-width="8.2"/><rect x="2423.6" y="150" width="15.6" height="35.4" rx="7.8" fill="#292929"/><rect x="2427" y="155.4" width="8.9" height="26.8" rx="4.4" fill="#fff"/></svg>
<span class="t" style="left:2294.64px;top:208px;font-size:34px;line-height:34px;color:#fff;transform:scaleX(1.1476);transform-origin:0 0;">T</span>
<span class="t" style="left:2336.81px;top:208px;font-size:34px;line-height:34px;color:#fff;transform:scaleX(1.1987);transform-origin:0 0;">e</span>
<span class="t" style="left:2379.5px;top:208px;font-size:34px;line-height:34px;color:#fff;transform:scaleX(1.2529);transform-origin:0 0;">m</span>
<span class="t" style="left:2435.58px;top:208px;font-size:34px;line-height:34px;color:#fff;transform:scaleX(1.2202);transform-origin:0 0;">p</span>
<span class="t" style="left:2481.18px;top:208px;font-size:34px;line-height:34px;color:#fff;transform:scaleX(1.0080);transform-origin:0 0;">l</span>
<span class="t" style="left:2510.76px;top:208px;font-size:34px;line-height:34px;color:#fff;transform:scaleX(1.0198);transform-origin:0 0;">a</span>
<span class="t" style="left:2553.68px;top:208px;font-size:34px;line-height:34px;color:#fff;transform:scaleX(1.3107);transform-origin:0 0;">t</span>
<span class="t" style="left:2589.22px;top:208px;font-size:34px;line-height:34px;color:#fff;transform:scaleX(1.2191);transform-origin:0 0;">e</span>
<span class="t" style="left:2633.53px;top:208px;font-size:34px;line-height:34px;color:#fff;transform:scaleX(1.1525);transform-origin:0 0;">s</span>
<div style="left:87.3px;top:297px;width:2773.1px;height:1373.2px;background:#fff;"></div>
<div style="left:11px;top:278px;width:43px;height:1392.2px;background:#262626;"></div>
<div style="left:54px;top:278px;width:2806.4px;height:19px;background:#0b0b0b;"></div>
<div style="left:54px;top:297px;width:33.3px;height:1373.2px;background:#0b0b0b;"></div>
<div style="left:87.3px;top:278px;width:22.7px;height:19px;background:#5f5f5f;"></div>
<div style="left:109.4px;top:279px;width:1.2px;height:18px;background:#3c3c3c;"></div>
<span class="t" style="top:280px;font-size:16.5px;line-height:16.5px;color:#e9e9e9;left:93.15px;">A</span>
<div style="left:121.9px;top:279px;width:1.2px;height:18px;background:#3c3c3c;"></div>
<span class="t" style="top:280px;font-size:16.5px;line-height:16.5px;color:#e9e9e9;left:110.75px;">B</span>
<div style="left:134.6px;top:279px;width:1.2px;height:18px;background:#3c3c3c;"></div>
<span class="t" style="top:280px;font-size:16.5px;line-height:16.5px;color:#e9e9e9;left:122.89px;">C</span>
<div style="left:166.9px;top:279px;width:1.2px;height:18px;background:#3c3c3c;"></div>
<span class="t" style="top:280px;font-size:16.5px;line-height:16.5px;color:#e9e9e9;left:145.39px;">D</span>
<div style="left:198.8px;top:279px;width:1.2px;height:18px;background:#3c3c3c;"></div>
<span class="t" style="top:280px;font-size:16.5px;line-height:16.5px;color:#e9e9e9;left:177.95px;">E</span>
<div style="left:349.7px;top:279px;width:1.2px;height:18px;background:#3c3c3c;"></div>
<span class="t" style="top:280px;font-size:16.5px;line-height:16.5px;color:#e9e9e9;left:269.81px;">F</span>
<div style="left:501px;top:279px;width:1.2px;height:18px;background:#3c3c3c;"></div>
<span class="t" style="top:280px;font-size:16.5px;line-height:16.5px;color:#e9e9e9;left:419.53px;">G</span>
<div style="left:652px;top:279px;width:1.2px;height:18px;background:#3c3c3c;"></div>
<span class="t" style="top:280px;font-size:16.5px;line-height:16.5px;color:#e9e9e9;left:571.14px;">H</span>
<div style="left:802.9px;top:279px;width:1.2px;height:18px;background:#3c3c3c;"></div>
<span class="t" style="top:280px;font-size:16.5px;line-height:16.5px;color:#e9e9e9;left:725.76px;">I</span>
<div style="left:921.9px;top:279px;width:1.2px;height:18px;background:#3c3c3c;"></div>
<span class="t" style="top:280px;font-size:16.5px;line-height:16.5px;color:#e9e9e9;left:858.88px;">J</span>
<div style="left:1040.9px;top:279px;width:1.2px;height:18px;background:#3c3c3c;"></div>
<span class="t" style="top:280px;font-size:16.5px;line-height:16.5px;color:#e9e9e9;left:976.5px;">K</span>
<div style="left:1159.9px;top:279px;width:1.2px;height:18px;background:#3c3c3c;"></div>
<span class="t" style="top:280px;font-size:16.5px;line-height:16.5px;color:#e9e9e9;left:1096.41px;">L</span>
<div style="left:1278.9px;top:279px;width:1.2px;height:18px;background:#3c3c3c;"></div>
<span class="t" style="top:280px;font-size:16.5px;line-height:16.5px;color:#e9e9e9;left:1213.13px;">M</span>
<div style="left:1397.9px;top:279px;width:1.2px;height:18px;background:#3c3c3c;"></div>
<span class="t" style="top:280px;font-size:16.5px;line-height:16.5px;color:#e9e9e9;left:1333.04px;">N</span>
<div style="left:1516.9px;top:279px;width:1.2px;height:18px;background:#3c3c3c;"></div>
<span class="t" style="top:280px;font-size:16.5px;line-height:16.5px;color:#e9e9e9;left:1451.58px;">O</span>
<div style="left:1635.9px;top:279px;width:1.2px;height:18px;background:#3c3c3c;"></div>
<span class="t" style="top:280px;font-size:16.5px;line-height:16.5px;color:#e9e9e9;left:1571.5px;">P</span>
<div style="left:1754.9px;top:279px;width:1.2px;height:18px;background:#3c3c3c;"></div>
<span class="t" style="top:280px;font-size:16.5px;line-height:16.5px;color:#e9e9e9;left:1689.58px;">Q</span>
<div style="left:1873.9px;top:279px;width:1.2px;height:18px;background:#3c3c3c;"></div>
<span class="t" style="top:280px;font-size:16.5px;line-height:16.5px;color:#e9e9e9;left:1809.04px;">R</span>
<div style="left:1992.9px;top:279px;width:1.2px;height:18px;background:#3c3c3c;"></div>
<span class="t" style="top:280px;font-size:16.5px;line-height:16.5px;color:#e9e9e9;left:1928.5px;">S</span>
<div style="left:2111.9px;top:279px;width:1.2px;height:18px;background:#3c3c3c;"></div>
<span class="t" style="top:280px;font-size:16.5px;line-height:16.5px;color:#e9e9e9;left:2047.96px;">T</span>
<div style="left:2230.9px;top:279px;width:1.2px;height:18px;background:#3c3c3c;"></div>
<span class="t" style="top:280px;font-size:16.5px;line-height:16.5px;color:#e9e9e9;left:2166.04px;">U</span>
<div style="left:2349.9px;top:279px;width:1.2px;height:18px;background:#3c3c3c;"></div>
<span class="t" style="top:280px;font-size:16.5px;line-height:16.5px;color:#e9e9e9;left:2285.5px;">V</span>
<div style="left:2468.9px;top:279px;width:1.2px;height:18px;background:#3c3c3c;"></div>
<span class="t" style="top:280px;font-size:16.5px;line-height:16.5px;color:#e9e9e9;left:2402.21px;">W</span>
<div style="left:2587.9px;top:279px;width:1.2px;height:18px;background:#3c3c3c;"></div>
<span class="t" style="top:280px;font-size:16.5px;line-height:16.5px;color:#e9e9e9;left:2523.5px;">X</span>
<div style="left:2706.9px;top:279px;width:1.2px;height:18px;background:#3c3c3c;"></div>
<span class="t" style="top:280px;font-size:16.5px;line-height:16.5px;color:#e9e9e9;left:2642.5px;">Y</span>
<div style="left:2825.9px;top:279px;width:1.2px;height:18px;background:#3c3c3c;"></div>
<span class="t" style="top:280px;font-size:16.5px;line-height:16.5px;color:#e9e9e9;left:2761.96px;">Z</span>
<div style="left:2859.8px;top:279px;width:1.2px;height:18px;background:#3c3c3c;"></div>
<div style="left:86.7px;top:279px;width:1.2px;height:18px;background:#3c3c3c;"></div>
<svg style="left:71px;top:281px" width="14" height="14"><path d="M13.3 1.2V12.9H1.2Z" fill="#6e6e6e"/></svg>
<div style="left:13.5px;top:278.7px;width:17.4px;height:17.4px;background:#dedede;border:1.3px solid #fafafa;box-sizing:border-box;"></div>
<span class="t" style="top:282px;font-size:12.5px;line-height:12.5px;color:#333;left:18.72px;">1</span>
<div style="left:32.8px;top:278.7px;width:17.4px;height:17.4px;background:#dedede;border:1.3px solid #fafafa;box-sizing:border-box;"></div>
<span class="t" style="top:282px;font-size:12.5px;line-height:12.5px;color:#333;left:38.02px;">2</span>
<div class="rh" style="top:297px;height:35.9px;background:#6b6b6b;">
<span class="t" style="left:12.5px;top:19px;font-size:16px;line-height:16px;color:#ececec">1</span>
</div>
<div style="left:54px;top:332px;width:33.3px;height:1px;background:#b0b0b0;"></div>
<div class="rh" style="top:332.9px;height:29.4px;">
<span class="t" style="left:12.5px;top:13.1px;font-size:16px;line-height:16px;color:#ececec">2</span>
</div>
<div style="left:54px;top:361px;width:33.3px;height:1px;background:#555;"></div>
<div class="rh" style="top:362.3px;height:18.3px;">
<span class="t" style="left:12.5px;top:3.7px;font-size:16px;line-height:16px;color:#ececec">3</span>
</div>
<div style="left:54px;top:380px;width:33.3px;height:1px;background:#555;"></div>
<div class="rh" style="top:380.6px;height:4px;">
</div>
<div style="left:54px;top:384px;width:33.3px;height:1px;background:#555;"></div>
<div class="rh" style="top:384.6px;height:31.5px;">
<span class="t" style="left:12.5px;top:15.4px;font-size:16px;line-height:16px;color:#ececec">5</span>
</div>
<div style="left:54px;top:415px;width:33.3px;height:1px;background:#555;"></div>
<div class="rh" style="top:416.1px;height:20.3px;">
<span class="t" style="left:12.5px;top:3.9px;font-size:16px;line-height:16px;color:#ececec">6</span>
</div>
<div style="left:54px;top:435px;width:33.3px;height:1px;background:#555;"></div>
<div class="rh" style="top:436.4px;height:18.6px;">
<span class="t" style="left:12.5px;top:3.6px;font-size:16px;line-height:16px;color:#ececec">7</span>
</div>
<div style="left:54px;top:454px;width:33.3px;height:1px;background:#555;"></div>
<div class="rh" style="top:456.8px;height:19.8px;">
<span class="t" style="left:8.05px;top:3.2px;font-size:16px;line-height:16px;color:#ececec">13</span>
</div>
<div style="left:54px;top:476px;width:33.3px;height:1px;background:#555;"></div>
<div class="rh" style="top:476.6px;height:24.7px;">
<span class="t" style="left:8.05px;top:7.4px;font-size:16px;line-height:16px;color:#ececec">14</span>
</div>
<div style="left:54px;top:500px;width:33.3px;height:1px;background:#555;"></div>
<div class="rh" style="top:501.3px;height:13.8px;">
<span class="t" style="left:8.05px;top:-2.3px;font-size:16px;line-height:16px;color:#ececec">15</span>
</div>
<div style="left:54px;top:514px;width:33.3px;height:1px;background:#555;"></div>
<div class="rh" style="top:515.1px;height:23.2px;">
<span class="t" style="left:8.05px;top:6.9px;font-size:16px;line-height:16px;color:#ececec">16</span>
</div>
<div style="left:54px;top:537px;width:33.3px;height:1px;background:#555;"></div>
<div class="rh" style="top:538.3px;height:5.6px;">
<span class="t" style="left:8.05px;top:-11.3px;font-size:16px;line-height:16px;color:#ececec">17</span>
</div>
<div style="left:54px;top:543px;width:33.3px;height:1px;background:#555;"></div>
<div class="rh" style="top:543.9px;height:4.4px;">
</div>
<div style="left:54px;top:547px;width:33.3px;height:1px;background:#555;"></div>
<div class="rh" style="top:548.3px;height:19px;">
<span class="t" style="left:8.05px;top:1.7px;font-size:16px;line-height:16px;color:#ececec">19</span>
</div>
<div style="left:54px;top:566px;width:33.3px;height:1px;background:#555;"></div>
<div class="rh" style="top:567.3px;height:19.5px;">
<span class="t" style="left:8.05px;top:2.7px;font-size:16px;line-height:16px;color:#ececec">22</span>
</div>
<div style="left:54px;top:586px;width:33.3px;height:1px;background:#555;"></div>
<div class="rh" style="top:586.8px;height:19.9px;">
<span class="t" style="left:8.05px;top:3.2px;font-size:16px;line-height:16px;color:#ececec">23</span>
</div>
<div style="left:54px;top:606px;width:33.3px;height:1px;background:#555;"></div>
<div class="rh" style="top:606.7px;height:19.7px;">
<span class="t" style="left:8.05px;top:3.3px;font-size:16px;line-height:16px;color:#ececec">24</span>
</div>
<div style="left:54px;top:625px;width:33.3px;height:1px;background:#555;"></div>
<div class="rh" style="top:626.4px;height:19.7px;">
<span class="t" style="left:8.05px;top:3.6px;font-size:16px;line-height:16px;color:#ececec">25</span>
</div>
<div style="left:54px;top:645px;width:33.3px;height:1px;background:#555;"></div>
<div class="rh" style="top:646.1px;height:16.8px;">
<span class="t" style="left:8.05px;top:0.9px;font-size:16px;line-height:16px;color:#ececec">26</span>
</div>
<div style="left:54px;top:662px;width:33.3px;height:1px;background:#555;"></div>
<div class="rh" style="top:662.9px;height:23.8px;">
<span class="t" style="left:8.05px;top:7.1px;font-size:16px;line-height:16px;color:#ececec">27</span>
</div>
<div style="left:54px;top:686px;width:33.3px;height:1px;background:#555;"></div>
<div class="rh" style="top:686.7px;height:3.6px;">
</div>
<div style="left:54px;top:689px;width:33.3px;height:1px;background:#555;"></div>
<div class="rh" style="top:690.3px;height:19.9px;">
<span class="t" style="left:8.05px;top:3.7px;font-size:16px;line-height:16px;color:#ececec">29</span>
</div>
<div style="left:54px;top:709px;width:33.3px;height:1px;background:#555;"></div>
<div class="rh" style="top:710.2px;height:4.1px;">
</div>
<div style="left:54px;top:713px;width:33.3px;height:1px;background:#555;"></div>
<div class="rh" style="top:714.3px;height:20.2px;">
<span class="t" style="left:8.05px;top:3.7px;font-size:16px;line-height:16px;color:#ececec">31</span>
</div>
<div style="left:54px;top:733px;width:33.3px;height:1px;background:#555;"></div>
<div class="rh" style="top:734.5px;height:16.7px;">
<span class="t" style="left:8.05px;top:0.5px;font-size:16px;line-height:16px;color:#ececec">32</span>
</div>
<div style="left:54px;top:750px;width:33.3px;height:1px;background:#555;"></div>
<div class="rh" style="top:751.2px;height:23.3px;">
<span class="t" style="left:8.05px;top:6.8px;font-size:16px;line-height:16px;color:#ececec">33</span>
</div>
<div style="left:54px;top:773px;width:33.3px;height:1px;background:#555;"></div>
<div class="rh" style="top:774.5px;height:4.1px;">
</div>
<div style="left:54px;top:778px;width:33.3px;height:1px;background:#555;"></div>
<div class="rh" style="top:778.6px;height:19.7px;">
<span class="t" style="left:8.05px;top:3.4px;font-size:16px;line-height:16px;color:#ececec">35</span>
</div>
<div style="left:54px;top:797px;width:33.3px;height:1px;background:#555;"></div>
<div class="rh" style="top:798.3px;height:19.8px;">
<span class="t" style="left:8.05px;top:3.7px;font-size:16px;line-height:16px;color:#ececec">36</span>
</div>
<div style="left:54px;top:817px;width:33.3px;height:1px;background:#555;"></div>
<div class="rh" style="top:818.1px;height:20.4px;">
<span class="t" style="left:8.05px;top:3.9px;font-size:16px;line-height:16px;color:#ececec">37</span>
</div>
<div style="left:54px;top:837px;width:33.3px;height:1px;background:#555;"></div>
<div class="rh" style="top:838.5px;height:20.2px;">
<span class="t" style="left:8.05px;top:3.5px;font-size:16px;line-height:16px;color:#ececec">38</span>
</div>
<div style="left:54px;top:858px;width:33.3px;height:1px;background:#555;"></div>
<div class="rh" style="top:858.7px;height:20px;">
<span class="t" style="left:8.05px;top:3.3px;font-size:16px;line-height:16px;color:#ececec">39</span>
</div>
<div style="left:54px;top:878px;width:33.3px;height:1px;background:#555;"></div>
<div class="rh" style="top:878.7px;height:19.9px;">
<span class="t" style="left:8.05px;top:3.3px;font-size:16px;line-height:16px;color:#ececec">40</span>
</div>
<div style="left:54px;top:898px;width:33.3px;height:1px;background:#555;"></div>
<div class="rh" style="top:898.6px;height:17.3px;">
<span class="t" style="left:8.05px;top:0.4px;font-size:16px;line-height:16px;color:#ececec">41</span>
</div>
<div style="left:54px;top:915px;width:33.3px;height:1px;background:#555;"></div>
<div class="rh" style="top:915.9px;height:20px;">
<span class="t" style="left:8.05px;top:2.1px;font-size:16px;line-height:16px;color:#ececec">42</span>
</div>
<div style="left:54px;top:935px;width:33.3px;height:1px;background:#555;"></div>
<div class="rh" style="top:935.9px;height:16.5px;">
<span class="t" style="left:8.05px;top:-0.9px;font-size:16px;line-height:16px;color:#ececec">43</span>
</div>
<div style="left:54px;top:951px;width:33.3px;height:1px;background:#555;"></div>
<div class="rh" style="top:952.4px;height:17.1px;">
<span class="t" style="left:8.05px;top:0.6px;font-size:16px;line-height:16px;color:#ececec">44</span>
</div>
<div style="left:54px;top:969px;width:33.3px;height:1px;background:#555;"></div>
<div class="rh" style="top:969.5px;height:24.8px;">
<span class="t" style="left:8.05px;top:7.5px;font-size:16px;line-height:16px;color:#ececec">45</span>
</div>
<div style="left:54px;top:993px;width:33.3px;height:1px;background:#555;"></div>
<div class="rh" style="top:994.3px;height:14.2px;">
<span class="t" style="left:8.05px;top:-2.3px;font-size:16px;line-height:16px;color:#ececec">46</span>
</div>
<div style="left:54px;top:1007px;width:33.3px;height:1px;background:#555;"></div>
<div class="rh" style="top:1008.5px;height:22.6px;">
<span class="t" style="left:8.05px;top:5.5px;font-size:16px;line-height:16px;color:#ececec">47</span>
</div>
<div style="left:54px;top:1030px;width:33.3px;height:1px;background:#555;"></div>
<div class="rh" style="top:1031.1px;height:21.7px;">
<span class="t" style="left:8.05px;top:3.9px;font-size:16px;line-height:16px;color:#ececec">48</span>
</div>
<div style="left:54px;top:1052px;width:33.3px;height:1px;background:#555;"></div>
<div class="rh" style="top:1052.8px;height:20.7px;">
<span class="t" style="left:8.05px;top:3.2px;font-size:16px;line-height:16px;color:#ececec">49</span>
</div>
<div style="left:54px;top:1073px;width:33.3px;height:1px;background:#555;"></div>
<div class="rh" style="top:1073.5px;height:20.2px;">
<span class="t" style="left:8.05px;top:3.5px;font-size:16px;line-height:16px;color:#ececec">50</span>
</div>
<div style="left:54px;top:1093px;width:33.3px;height:1px;background:#555;"></div>
<div class="rh" style="top:1093.7px;height:22.6px;">
<span class="t" style="left:8.05px;top:6.3px;font-size:16px;line-height:16px;color:#ececec">51</span>
</div>
<div style="left:54px;top:1115px;width:33.3px;height:1px;background:#555;"></div>
<div class="rh" style="top:1116.3px;height:22.9px;">
<span class="t" style="left:8.05px;top:5.7px;font-size:16px;line-height:16px;color:#ececec">52</span>
</div>
<div style="left:54px;top:1138px;width:33.3px;height:1px;background:#555;"></div>
<div class="rh" style="top:1139.2px;height:20.7px;">
<span class="t" style="left:8.05px;top:3.8px;font-size:16px;line-height:16px;color:#ececec">53</span>
</div>
<div style="left:54px;top:1159px;width:33.3px;height:1px;background:#555;"></div>
<div class="rh" style="top:1159.9px;height:20.5px;">
<span class="t" style="left:8.05px;top:3.1px;font-size:16px;line-height:16px;color:#ececec">54</span>
</div>
<div style="left:54px;top:1179px;width:33.3px;height:1px;background:#555;"></div>
<div class="rh" style="top:1180.4px;height:22.7px;">
<span class="t" style="left:8.05px;top:6.6px;font-size:16px;line-height:16px;color:#ececec">55</span>
</div>
<div style="left:54px;top:1202px;width:33.3px;height:1px;background:#555;"></div>
<div class="rh" style="top:1203.1px;height:22.9px;">
<span class="t" style="left:8.05px;top:5.9px;font-size:16px;line-height:16px;color:#ececec">56</span>
</div>
<div style="left:54px;top:1225px;width:33.3px;height:1px;background:#555;"></div>
<div class="rh" style="top:1226px;height:21.4px;">
<span class="t" style="left:8.05px;top:4px;font-size:16px;line-height:16px;color:#ececec">57</span>
</div>
<div style="left:54px;top:1246px;width:33.3px;height:1px;background:#555;"></div>
<div class="rh" style="top:1247.4px;height:21.2px;">
<span class="t" style="left:8.05px;top:3.6px;font-size:16px;line-height:16px;color:#ececec">58</span>
</div>
<div style="left:54px;top:1268px;width:33.3px;height:1px;background:#555;"></div>
<div class="rh" style="top:1268.6px;height:20.7px;">
<span class="t" style="left:8.05px;top:3.4px;font-size:16px;line-height:16px;color:#ececec">59</span>
</div>
<div style="left:54px;top:1288px;width:33.3px;height:1px;background:#555;"></div>
<div class="rh" style="top:1289.3px;height:20.4px;">
<span class="t" style="left:8.05px;top:2.7px;font-size:16px;line-height:16px;color:#ececec">60</span>
</div>
<div style="left:54px;top:1309px;width:33.3px;height:1px;background:#555;"></div>
<div class="rh" style="top:1309.7px;height:22.4px;">
<span class="t" style="left:8.05px;top:6.3px;font-size:16px;line-height:16px;color:#ececec">61</span>
</div>
<div style="left:54px;top:1331px;width:33.3px;height:1px;background:#555;"></div>
<div class="rh" style="top:1332.1px;height:23.2px;">
<span class="t" style="left:8.05px;top:5.9px;font-size:16px;line-height:16px;color:#ececec">62</span>
</div>
<div style="left:54px;top:1354px;width:33.3px;height:1px;background:#555;"></div>
<div class="rh" style="top:1355.3px;height:23.1px;">
<span class="t" style="left:8.05px;top:6.7px;font-size:16px;line-height:16px;color:#ececec">63</span>
</div>
<div style="left:54px;top:1377px;width:33.3px;height:1px;background:#555;"></div>
<div class="rh" style="top:1378.4px;height:22.7px;">
<span class="t" style="left:8.05px;top:6.6px;font-size:16px;line-height:16px;color:#ececec">64</span>
</div>
<div style="left:54px;top:1400px;width:33.3px;height:1px;background:#555;"></div>
<div class="rh" style="top:1401.1px;height:20.4px;">
<span class="t" style="left:8.05px;top:2.9px;font-size:16px;line-height:16px;color:#ececec">65</span>
</div>
<div style="left:54px;top:1421px;width:33.3px;height:1px;background:#555;"></div>
<div class="rh" style="top:1421.5px;height:20.7px;">
<span class="t" style="left:8.05px;top:4.5px;font-size:16px;line-height:16px;color:#ececec">66</span>
</div>
<div style="left:54px;top:1441px;width:33.3px;height:1px;background:#555;"></div>
<div class="rh" style="top:1442.2px;height:17px;">
<span class="t" style="left:8.05px;top:-0.2px;font-size:16px;line-height:16px;color:#ececec">67</span>
</div>
<div style="left:54px;top:1458px;width:33.3px;height:1px;background:#555;"></div>
<div class="rh" style="top:1459.2px;height:24.9px;">
<span class="t" style="left:8.05px;top:7.8px;font-size:16px;line-height:16px;color:#ececec">68</span>
</div>
<div style="left:54px;top:1483px;width:33.3px;height:1px;background:#555;"></div>
<div class="rh" style="top:1484.1px;height:13.2px;">
<span class="t" style="left:8.05px;top:-3.1px;font-size:16px;line-height:16px;color:#ececec">69</span>
</div>
<div style="left:54px;top:1496px;width:33.3px;height:1px;background:#555;"></div>
<div class="rh" style="top:1497.3px;height:20.4px;">
<span class="t" style="left:8.05px;top:2.7px;font-size:16px;line-height:16px;color:#ececec">70</span>
</div>
<div style="left:54px;top:1517px;width:33.3px;height:1px;background:#555;"></div>
<div class="rh" style="top:1517.7px;height:20px;">
<span class="t" style="left:8.05px;top:3.3px;font-size:16px;line-height:16px;color:#ececec">71</span>
</div>
<div style="left:54px;top:1537px;width:33.3px;height:1px;background:#555;"></div>
<div class="rh" style="top:1537.7px;height:20.2px;">
<span class="t" style="left:8.05px;top:3.3px;font-size:16px;line-height:16px;color:#ececec">72</span>
</div>
<div style="left:54px;top:1557px;width:33.3px;height:1px;background:#555;"></div>
<div class="rh" style="top:1557.9px;height:20px;">
<span class="t" style="left:8.05px;top:3.1px;font-size:16px;line-height:16px;color:#ececec">73</span>
</div>
<div style="left:54px;top:1577px;width:33.3px;height:1px;background:#555;"></div>
<div class="rh" style="top:1577.9px;height:19.7px;">
<span class="t" style="left:8.05px;top:3.1px;font-size:16px;line-height:16px;color:#ececec">74</span>
</div>
<div style="left:54px;top:1597px;width:33.3px;height:1px;background:#555;"></div>
<div class="rh" style="top:1597.6px;height:20px;">
<span class="t" style="left:8.05px;top:3.4px;font-size:16px;line-height:16px;color:#ececec">75</span>
</div>
<div style="left:54px;top:1617px;width:33.3px;height:1px;background:#555;"></div>
<div class="rh" style="top:1617.6px;height:20.2px;">
<span class="t" style="left:8.05px;top:3.4px;font-size:16px;line-height:16px;color:#ececec">76</span>
</div>
<div style="left:54px;top:1637px;width:33.3px;height:1px;background:#555;"></div>
<div class="rh" style="top:1637.8px;height:20px;">
<span class="t" style="left:8.05px;top:2.2px;font-size:16px;line-height:16px;color:#ececec">77</span>
</div>
<div style="left:54px;top:1657px;width:33.3px;height:1px;background:#555;"></div>
<div class="rh" style="top:1657.8px;height:12.4px;">
<span class="t" style="left:8.05px;top:3.2px;font-size:16px;line-height:16px;color:#ececec">78</span>
</div>
<div style="left:11px;top:456px;width:76.3px;height:1px;background:#c4c4c4;"></div>
<div style="left:54px;top:458px;width:33.3px;height:1px;background:#555;"></div>
<div style="left:86.3px;top:296px;width:24.2px;height:1.7px;background:#1e7a45;"></div>
<div style="left:86.1px;top:296px;width:1.7px;height:37.5px;background:#1e7a45;"></div>
<div style="left:13.3px;top:548.6px;width:18.2px;height:16.4px;background:#dedede;border:1.3px solid #fafafa;box-sizing:border-box;"></div>
<div style="left:18.6px;top:556px;width:7.6px;height:1.6px;background:#555;"></div>
<div style="left:21.6px;top:553px;width:1.6px;height:7.6px;background:#555;"></div>
<div style="left:13.3px;top:568px;width:18.2px;height:17.4px;background:#dedede;border:1.3px solid #fafafa;box-sizing:border-box;"></div>
<div style="left:18.6px;top:575.9px;width:7.6px;height:1.6px;background:#555;"></div>
<div style="left:21.6px;top:572.9px;width:1.6px;height:7.6px;background:#555;"></div>
<div style="left:135px;top:626px;width:2725.4px;height:20.3px;background:#4ab1e7;"></div>
<div style="left:135px;top:713.9px;width:2725.4px;height:20.8px;background:#4ab1e7;"></div>
<div style="left:135px;top:878.3px;width:2725.4px;height:20.5px;background:#4ab1e7;"></div>
<div style="left:135px;top:915.2px;width:2725.4px;height:20.9px;background:#4ab1e7;"></div>
<div style="left:122px;top:1073.1px;width:2738.4px;height:20.8px;background:#4ab1e7;"></div>
<div style="left:122px;top:1159.5px;width:2738.4px;height:21.1px;background:#4ab1e7;"></div>
<div style="left:122px;top:1288.9px;width:2738.4px;height:21px;background:#4ab1e7;"></div>
<div style="left:122px;top:1400.7px;width:2738.4px;height:21px;background:#4ab1e7;"></div>
<div style="left:135px;top:1637.4px;width:2725.4px;height:20.6px;background:#4ab1e7;"></div>
<div style="left:87.3px;top:456px;width:2773.1px;height:1px;background:#a0a0a0;"></div>
<div style="left:803px;top:297px;width:1px;height:1373.2px;background:#a0a0a0;"></div>
<span class="t" style="top:303px;font-size:28px;line-height:28px;color:#1d2129;font-weight:bold;left:114.6px;transform:scaleX(1.0595);transform-origin:0 0;">Cash Flow Statement</span>
<span class="t" style="top:337px;font-size:24px;line-height:24px;color:#000;font-weight:bold;left:114px;transform:scaleX(1.0221);transform-origin:0 0;">ABC Company Inc.</span>
<span class="t" style="top:365px;font-size:16px;line-height:16px;color:#2b6be4;font-weight:bold;left:113.2px;transform:scaleX(1.0758);transform-origin:0 0;">Go to Table of Contents</span>
<div style="left:113.2px;top:379px;width:193.8px;height:1.6px;background:#2b6be4;"></div>
<span class="t" style="top:420px;font-size:16px;line-height:16px;color:#000;font-weight:bold;left:113.5px;transform:scaleX(1.0299);transform-origin:0 0;">Fiscal year</span>
<span class="t" style="top:440px;font-size:16px;line-height:16px;color:#000;font-weight:bold;left:113.5px;transform:scaleX(1.0359);transform-origin:0 0;">Month</span>
<span class="t" style="top:480px;font-size:20px;line-height:20px;color:#1d2129;font-weight:bold;left:114.4px;transform:scaleX(1.0548);transform-origin:0 0;">Cash Flow Statement, $</span>
<span class="t" style="top:520px;font-size:17.4px;line-height:17.4px;color:#1d2129;font-weight:bold;left:126.2px;transform:scaleX(1.0686);transform-origin:0 0;">Cash Flow from Operating Activities</span>
<span class="t" style="top:667px;font-size:17.4px;line-height:17.4px;color:#1d2129;font-weight:bold;left:126.2px;transform:scaleX(1.0764);transform-origin:0 0;">Cash Flow from Investing Activities</span>
<span class="t" style="top:755px;font-size:17.4px;line-height:17.4px;color:#1d2129;font-weight:bold;left:126.2px;transform:scaleX(1.0626);transform-origin:0 0;">Cash Flow from Financing Activities</span>
<span class="t" style="top:973px;font-size:20px;line-height:20px;color:#1d2129;font-weight:bold;left:114.4px;transform:scaleX(1.0727);transform-origin:0 0;">Cash Flow Statement (indirect method), $</span>
<span class="t" style="top:1012px;font-size:17.4px;line-height:17.4px;color:#1d2129;font-weight:bold;left:126.5px;transform:scaleX(1.0707);transform-origin:0 0;">Operating Activities</span>
<span class="t" style="top:1120px;font-size:17.4px;line-height:17.4px;color:#1d2129;font-weight:bold;left:126.5px;transform:scaleX(1.0840);transform-origin:0 0;">Investing Activities</span>
<span class="t" style="top:1208px;font-size:17.4px;line-height:17.4px;color:#1d2129;font-weight:bold;left:126.5px;transform:scaleX(1.0591);transform-origin:0 0;">Financing Activities</span>
<span class="t" style="top:1337px;font-size:17.4px;line-height:17.4px;color:#1d2129;font-weight:bold;left:126.5px;transform:scaleX(1.0732);transform-origin:0 0;">Cash Movement</span>
<span class="t" style="top:1462px;font-size:20px;line-height:20px;color:#1d2129;font-weight:bold;left:127px;transform:scaleX(1.0620);transform-origin:0 0;">Interest on Cash Breakdown</span>
<span class="t" style="top:550px;font-size:16px;line-height:16px;color:#222;left:139.4px;transform:scaleX(0.9207);transform-origin:0 0;">Cash Receipts</span>
<span class="t" style="top:570px;font-size:16px;line-height:16px;color:#222;left:139.4px;transform:scaleX(0.9377);transform-origin:0 0;">Cash Payments</span>
<span class="t" style="top:590px;font-size:16px;line-height:16px;color:#222;left:139.4px;transform:scaleX(0.9661);transform-origin:0 0;">Interest Expense</span>
<span class="t" style="top:610px;font-size:16px;line-height:16px;color:#222;left:139.4px;transform:scaleX(0.9771);transform-origin:0 0;">Corporate Tax Expense</span>
<span class="t" style="top:694px;font-size:16px;line-height:16px;color:#222;left:139.4px;transform:scaleX(0.9739);transform-origin:0 0;">Capital Expenditure</span>
<span class="t" style="top:782px;font-size:16px;line-height:16px;color:#222;left:139.4px;transform:scaleX(0.9751);transform-origin:0 0;">Debts Drawdowns</span>
<span class="t" style="top:802px;font-size:16px;line-height:16px;color:#222;left:139.4px;transform:scaleX(0.9547);transform-origin:0 0;">Debts Repayments</span>
<span class="t" style="top:822px;font-size:16px;line-height:16px;color:#222;left:139.4px;transform:scaleX(0.9630);transform-origin:0 0;">Equity Raisings</span>
<span class="t" style="top:842px;font-size:16px;line-height:16px;color:#222;left:139.4px;transform:scaleX(0.9570);transform-origin:0 0;">Equity Buybacks</span>
<span class="t" style="top:862px;font-size:16px;line-height:16px;color:#222;left:139.4px;transform:scaleX(0.9697);transform-origin:0 0;">Dividends Paid</span>
<span class="t" style="top:1035px;font-size:16px;line-height:16px;color:#222;left:139.4px;transform:scaleX(0.9747);transform-origin:0 0;">Net Income Less Depreciation</span>
<span class="t" style="top:1056px;font-size:16px;line-height:16px;color:#222;left:139.4px;transform:scaleX(0.9786);transform-origin:0 0;">Changes in Working Capital</span>
<span class="t" style="top:1143px;font-size:16px;line-height:16px;color:#222;left:139.4px;transform:scaleX(0.9739);transform-origin:0 0;">Capital Expenditure</span>
<span class="t" style="top:1230px;font-size:16px;line-height:16px;color:#222;left:139.4px;transform:scaleX(1.0049);transform-origin:0 0;">Equity Investment</span>
<span class="t" style="top:1251px;font-size:16px;line-height:16px;color:#222;left:139.4px;transform:scaleX(0.9267);transform-origin:0 0;">Loans</span>
<span class="t" style="top:1272px;font-size:16px;line-height:16px;color:#222;left:139.4px;transform:scaleX(0.9697);transform-origin:0 0;">Dividends Paid</span>
<span class="t" style="top:1360px;font-size:16px;line-height:16px;color:#222;left:139.4px;transform:scaleX(0.9657);transform-origin:0 0;">Cash and Cash Equivalents Beginning</span>
<span class="t" style="top:1383px;font-size:16px;line-height:16px;color:#222;left:139.4px;transform:scaleX(0.9663);transform-origin:0 0;">Net (Increase) Decrease In Cash</span>
<span class="t" style="top:1500px;font-size:16px;line-height:16px;color:#222;left:139.4px;">Net Cash Flow from Investing Activities</span>
<span class="t" style="top:1521px;font-size:16px;line-height:16px;color:#222;left:139.4px;transform:scaleX(0.9898);transform-origin:0 0;">Net Cash Flow from Financing Activities</span>
<span class="t" style="top:1541px;font-size:16px;line-height:16px;color:#222;left:139.4px;transform:scaleX(0.9207);transform-origin:0 0;">Cash Receipts</span>
<span class="t" style="top:1561px;font-size:16px;line-height:16px;color:#222;left:139.4px;transform:scaleX(0.9377);transform-origin:0 0;">Cash Payments</span>
<span class="t" style="top:1581px;font-size:16px;line-height:16px;color:#222;left:139.4px;transform:scaleX(0.9918);transform-origin:0 0;">Change in Cash (Pre-Corporate Tax &amp; Interest on Cash)</span>
<span class="t" style="top:1601px;font-size:16px;line-height:16px;color:#222;left:139.4px;transform:scaleX(0.9661);transform-origin:0 0;">Interest Expense</span>
<span class="t" style="top:1621px;font-size:16px;line-height:16px;color:#222;left:139.4px;transform:scaleX(0.9771);transform-origin:0 0;">Corporate Tax Expense</span>
<span class="t" style="top:630px;font-size:16px;line-height:16px;color:#fff;font-weight:bold;left:146.4px;transform:scaleX(1.0670);transform-origin:0 0;">Net Cash Flow from Operating Activities</span>
<span class="t" style="top:718px;font-size:16px;line-height:16px;color:#fff;font-weight:bold;left:146.4px;transform:scaleX(1.0690);transform-origin:0 0;">Net Cash Flow from Investing Activities</span>
<span class="t" style="top:882px;font-size:16px;line-height:16px;color:#fff;font-weight:bold;left:146.4px;transform:scaleX(1.0530);transform-origin:0 0;">Net Cash Flow from Financing Activities</span>
<span class="t" style="top:918px;font-size:16px;line-height:16px;color:#fff;font-weight:bold;left:146.4px;transform:scaleX(1.0856);transform-origin:0 0;">Net Increase/(Decrease) in Cash Held</span>
<span class="t" style="top:1077px;font-size:16px;line-height:16px;color:#fff;font-weight:bold;left:134px;transform:scaleX(1.0904);transform-origin:0 0;">Total Operating Activities</span>
<span class="t" style="top:1163px;font-size:16px;line-height:16px;color:#fff;font-weight:bold;left:134px;transform:scaleX(1.0748);transform-origin:0 0;">Total Cash From (For) Investing Activities</span>
<span class="t" style="top:1292px;font-size:16px;line-height:16px;color:#fff;font-weight:bold;left:134px;transform:scaleX(1.0601);transform-origin:0 0;">Total Cash From (For) Financing Activities</span>
<span class="t" style="top:1404px;font-size:16px;line-height:16px;color:#fff;font-weight:bold;left:134px;transform:scaleX(1.0448);transform-origin:0 0;">Total Cash and Cash Equivalents End</span>
<span class="t" style="top:1640px;font-size:16px;line-height:16px;color:#fff;font-weight:bold;left:146.4px;transform:scaleX(1.0856);transform-origin:0 0;">Net Increase/(Decrease) in Cash Held</span>
<span class="t" style="top:421px;font-size:16px;line-height:16px;color:#000;font-weight:bold;right:1983.4px;transform:scaleX(1.0930);transform-origin:100% 0;">2026</span>
<span class="t" style="top:440px;font-size:16px;line-height:16px;color:#000;font-weight:bold;right:1983.4px;transform:scaleX(1.0880);transform-origin:100% 0;">Jan-26</span>
<span class="t" style="top:421px;font-size:16px;line-height:16px;color:#000;font-weight:bold;right:1864.4px;transform:scaleX(1.0930);transform-origin:100% 0;">2026</span>
<span class="t" style="top:440px;font-size:16px;line-height:16px;color:#000;font-weight:bold;right:1864.4px;transform:scaleX(1.0880);transform-origin:100% 0;">Feb-26</span>
<span class="t" style="top:421px;font-size:16px;line-height:16px;color:#000;font-weight:bold;right:1745.4px;transform:scaleX(1.0930);transform-origin:100% 0;">2026</span>
<span class="t" style="top:440px;font-size:16px;line-height:16px;color:#000;font-weight:bold;right:1745.4px;transform:scaleX(1.0880);transform-origin:100% 0;">Mar-26</span>
<span class="t" style="top:421px;font-size:16px;line-height:16px;color:#000;font-weight:bold;right:1626.4px;transform:scaleX(1.0930);transform-origin:100% 0;">2026</span>
<span class="t" style="top:440px;font-size:16px;line-height:16px;color:#000;font-weight:bold;right:1626.4px;transform:scaleX(1.0880);transform-origin:100% 0;">Apr-26</span>
<span class="t" style="top:421px;font-size:16px;line-height:16px;color:#000;font-weight:bold;right:1507.4px;transform:scaleX(1.0930);transform-origin:100% 0;">2026</span>
<span class="t" style="top:440px;font-size:16px;line-height:16px;color:#000;font-weight:bold;right:1507.4px;transform:scaleX(1.0880);transform-origin:100% 0;">May-26</span>
<span class="t" style="top:421px;font-size:16px;line-height:16px;color:#000;font-weight:bold;right:1388.4px;transform:scaleX(1.0930);transform-origin:100% 0;">2026</span>
<span class="t" style="top:440px;font-size:16px;line-height:16px;color:#000;font-weight:bold;right:1388.4px;transform:scaleX(1.0880);transform-origin:100% 0;">Jun-26</span>
<span class="t" style="top:421px;font-size:16px;line-height:16px;color:#000;font-weight:bold;right:1269.4px;transform:scaleX(1.0930);transform-origin:100% 0;">2026</span>
<span class="t" style="top:440px;font-size:16px;line-height:16px;color:#000;font-weight:bold;right:1269.4px;transform:scaleX(1.0880);transform-origin:100% 0;">Jul-26</span>
<span class="t" style="top:421px;font-size:16px;line-height:16px;color:#000;font-weight:bold;right:1150.4px;transform:scaleX(1.0930);transform-origin:100% 0;">2026</span>
<span class="t" style="top:440px;font-size:16px;line-height:16px;color:#000;font-weight:bold;right:1150.4px;transform:scaleX(1.0880);transform-origin:100% 0;">Aug-26</span>
<span class="t" style="top:421px;font-size:16px;line-height:16px;color:#000;font-weight:bold;right:1031.4px;transform:scaleX(1.0930);transform-origin:100% 0;">2026</span>
<span class="t" style="top:440px;font-size:16px;line-height:16px;color:#000;font-weight:bold;right:1031.4px;transform:scaleX(1.0880);transform-origin:100% 0;">Sep-26</span>
<span class="t" style="top:421px;font-size:16px;line-height:16px;color:#000;font-weight:bold;right:912.4px;transform:scaleX(1.0930);transform-origin:100% 0;">2026</span>
<span class="t" style="top:440px;font-size:16px;line-height:16px;color:#000;font-weight:bold;right:912.4px;transform:scaleX(1.0880);transform-origin:100% 0;">Oct-26</span>
<span class="t" style="top:421px;font-size:16px;line-height:16px;color:#000;font-weight:bold;right:793.4px;transform:scaleX(1.0930);transform-origin:100% 0;">2026</span>
<span class="t" style="top:440px;font-size:16px;line-height:16px;color:#000;font-weight:bold;right:793.4px;transform:scaleX(1.0880);transform-origin:100% 0;">Nov-26</span>
<span class="t" style="top:421px;font-size:16px;line-height:16px;color:#000;font-weight:bold;right:674.4px;transform:scaleX(1.0930);transform-origin:100% 0;">2026</span>
<span class="t" style="top:440px;font-size:16px;line-height:16px;color:#000;font-weight:bold;right:674.4px;transform:scaleX(1.0880);transform-origin:100% 0;">Dec-26</span>
<span class="t" style="top:421px;font-size:16px;line-height:16px;color:#000;font-weight:bold;right:555.4px;transform:scaleX(1.0930);transform-origin:100% 0;">2027</span>
<span class="t" style="top:440px;font-size:16px;line-height:16px;color:#000;font-weight:bold;right:555.4px;transform:scaleX(1.0880);transform-origin:100% 0;">Jan-27</span>
<span class="t" style="top:421px;font-size:16px;line-height:16px;color:#000;font-weight:bold;right:436.4px;transform:scaleX(1.0930);transform-origin:100% 0;">2027</span>
<span class="t" style="top:440px;font-size:16px;line-height:16px;color:#000;font-weight:bold;right:436.4px;transform:scaleX(1.0880);transform-origin:100% 0;">Feb-27</span>
<span class="t" style="top:421px;font-size:16px;line-height:16px;color:#000;font-weight:bold;right:317.4px;transform:scaleX(1.0930);transform-origin:100% 0;">2027</span>
<span class="t" style="top:440px;font-size:16px;line-height:16px;color:#000;font-weight:bold;right:317.4px;transform:scaleX(1.0880);transform-origin:100% 0;">Mar-27</span>
<span class="t" style="top:421px;font-size:16px;line-height:16px;color:#000;font-weight:bold;right:198.4px;transform:scaleX(1.0930);transform-origin:100% 0;">2027</span>
<span class="t" style="top:440px;font-size:16px;line-height:16px;color:#000;font-weight:bold;right:198.4px;transform:scaleX(1.0880);transform-origin:100% 0;">Apr-27</span>
<span class="t" style="top:421px;font-size:16px;line-height:16px;color:#000;font-weight:bold;right:79.4px;transform:scaleX(1.0930);transform-origin:100% 0;">2027</span>
<span class="t" style="top:440px;font-size:16px;line-height:16px;color:#000;font-weight:bold;right:79.4px;transform:scaleX(1.0880);transform-origin:100% 0;">May-27</span>
<span class="t" style="top:550px;font-size:14px;line-height:14px;color:#222;right:1987.4px;">106,723</span>
<span class="t" style="top:550px;font-size:14px;line-height:14px;color:#222;right:1868.4px;">196,055</span>
<span class="t" style="top:550px;font-size:14px;line-height:14px;color:#222;right:1749.4px;">217,495</span>
<span class="t" style="top:550px;font-size:14px;line-height:14px;color:#222;right:1630.4px;">203,440</span>
<span class="t" style="top:550px;font-size:14px;line-height:14px;color:#222;right:1511.4px;">210,110</span>
<span class="t" style="top:550px;font-size:14px;line-height:14px;color:#222;right:1392.4px;">203,440</span>
<span class="t" style="top:550px;font-size:14px;line-height:14px;color:#222;right:1273.4px;">210,110</span>
<span class="t" style="top:550px;font-size:14px;line-height:14px;color:#222;right:1154.4px;">206,775</span>
<span class="t" style="top:550px;font-size:14px;line-height:14px;color:#222;right:1035.4px;">203,440</span>
<span class="t" style="top:550px;font-size:14px;line-height:14px;color:#222;right:916.4px;">210,110</span>
<span class="t" style="top:550px;font-size:14px;line-height:14px;color:#222;right:797.4px;">203,440</span>
<span class="t" style="top:550px;font-size:14px;line-height:14px;color:#222;right:678.4px;">210,110</span>
<span class="t" style="top:550px;font-size:14px;line-height:14px;color:#222;right:559.4px;">341,505</span>
<span class="t" style="top:550px;font-size:14px;line-height:14px;color:#222;right:440.4px;">443,560</span>
<span class="t" style="top:550px;font-size:14px;line-height:14px;color:#222;right:321.4px;">492,067</span>
<span class="t" style="top:550px;font-size:14px;line-height:14px;color:#222;right:202.4px;">460,268</span>
<span class="t" style="top:550px;font-size:14px;line-height:14px;color:#222;right:83.4px;">475,359</span>
<span class="t" style="top:570px;font-size:14px;line-height:14px;color:#222;right:1981.9px;transform:scaleX(1.0400);transform-origin:100% 0;">(49,523)</span>
<span class="t" style="top:570px;font-size:14px;line-height:14px;color:#222;right:1862.9px;transform:scaleX(1.0400);transform-origin:100% 0;">(65,590)</span>
<span class="t" style="top:570px;font-size:14px;line-height:14px;color:#222;right:1743.9px;transform:scaleX(1.0400);transform-origin:100% 0;">(69,447)</span>
<span class="t" style="top:570px;font-size:14px;line-height:14px;color:#222;right:1624.9px;transform:scaleX(1.0400);transform-origin:100% 0;">(66,919)</span>
<span class="t" style="top:570px;font-size:14px;line-height:14px;color:#222;right:1505.9px;transform:scaleX(1.0400);transform-origin:100% 0;">(68,118)</span>
<span class="t" style="top:570px;font-size:14px;line-height:14px;color:#222;right:1386.9px;transform:scaleX(1.0400);transform-origin:100% 0;">(66,919)</span>
<span class="t" style="top:570px;font-size:14px;line-height:14px;color:#222;right:1267.9px;transform:scaleX(1.0400);transform-origin:100% 0;">(68,118)</span>
<span class="t" style="top:570px;font-size:14px;line-height:14px;color:#222;right:1148.9px;transform:scaleX(1.0400);transform-origin:100% 0;">(67,519)</span>
<span class="t" style="top:570px;font-size:14px;line-height:14px;color:#222;right:1029.9px;transform:scaleX(1.0400);transform-origin:100% 0;">(66,919)</span>
<span class="t" style="top:570px;font-size:14px;line-height:14px;color:#222;right:910.9px;transform:scaleX(1.0400);transform-origin:100% 0;">(68,118)</span>
<span class="t" style="top:570px;font-size:14px;line-height:14px;color:#222;right:791.9px;transform:scaleX(1.0400);transform-origin:100% 0;">(66,919)</span>
<span class="t" style="top:570px;font-size:14px;line-height:14px;color:#222;right:672.9px;transform:scaleX(1.0400);transform-origin:100% 0;">(68,118)</span>
<span class="t" style="top:570px;font-size:14px;line-height:14px;color:#222;right:553.9px;transform:scaleX(1.0400);transform-origin:100% 0;">(108,246)</span>
<span class="t" style="top:570px;font-size:14px;line-height:14px;color:#222;right:434.9px;transform:scaleX(1.0400);transform-origin:100% 0;">(112,016)</span>
<span class="t" style="top:570px;font-size:14px;line-height:14px;color:#222;right:315.9px;transform:scaleX(1.0400);transform-origin:100% 0;">(117,240)</span>
<span class="t" style="top:570px;font-size:14px;line-height:14px;color:#222;right:196.9px;transform:scaleX(1.0400);transform-origin:100% 0;">(113,816)</span>
<span class="t" style="top:570px;font-size:14px;line-height:14px;color:#222;right:77.9px;transform:scaleX(1.0400);transform-origin:100% 0;">(115,441)</span>
<span class="t" style="top:590px;font-size:14px;line-height:14px;color:#222;right:1981.9px;transform:scaleX(1.0400);transform-origin:100% 0;">(1,000)</span>
<span class="t" style="top:590px;font-size:14px;line-height:14px;color:#222;right:1862.9px;transform:scaleX(1.0400);transform-origin:100% 0;">(1,000)</span>
<span class="t" style="top:590px;font-size:14px;line-height:14px;color:#222;right:1743.9px;transform:scaleX(1.0400);transform-origin:100% 0;">(1,667)</span>
<span class="t" style="top:590px;font-size:14px;line-height:14px;color:#222;right:1624.9px;transform:scaleX(1.0400);transform-origin:100% 0;">(1,656)</span>
<span class="t" style="top:590px;font-size:14px;line-height:14px;color:#222;right:1505.9px;transform:scaleX(1.0400);transform-origin:100% 0;">(1,644)</span>
<span class="t" style="top:590px;font-size:14px;line-height:14px;color:#222;right:1386.9px;transform:scaleX(1.0400);transform-origin:100% 0;">(1,633)</span>
<span class="t" style="top:590px;font-size:14px;line-height:14px;color:#222;right:1267.9px;transform:scaleX(1.0400);transform-origin:100% 0;">(1,622)</span>
<span class="t" style="top:590px;font-size:14px;line-height:14px;color:#222;right:1148.9px;transform:scaleX(1.0400);transform-origin:100% 0;">(1,611)</span>
<span class="t" style="top:590px;font-size:14px;line-height:14px;color:#222;right:1029.9px;transform:scaleX(1.0400);transform-origin:100% 0;">(1,600)</span>
<span class="t" style="top:590px;font-size:14px;line-height:14px;color:#222;right:910.9px;transform:scaleX(1.0400);transform-origin:100% 0;">(1,589)</span>
<span class="t" style="top:590px;font-size:14px;line-height:14px;color:#222;right:791.9px;transform:scaleX(1.0400);transform-origin:100% 0;">(1,578)</span>
<span class="t" style="top:590px;font-size:14px;line-height:14px;color:#222;right:672.9px;transform:scaleX(1.0400);transform-origin:100% 0;">(1,567)</span>
<span class="t" style="top:590px;font-size:14px;line-height:14px;color:#222;right:553.9px;transform:scaleX(1.0400);transform-origin:100% 0;">(1,556)</span>
<span class="t" style="top:590px;font-size:14px;line-height:14px;color:#222;right:434.9px;transform:scaleX(1.0400);transform-origin:100% 0;">(1,534)</span>
<span class="t" style="top:590px;font-size:14px;line-height:14px;color:#222;right:315.9px;transform:scaleX(1.0400);transform-origin:100% 0;">(1,512)</span>
<span class="t" style="top:590px;font-size:14px;line-height:14px;color:#222;right:196.9px;transform:scaleX(1.0400);transform-origin:100% 0;">(1,491)</span>
<span class="t" style="top:590px;font-size:14px;line-height:14px;color:#222;right:77.9px;transform:scaleX(1.0400);transform-origin:100% 0;">(1,469)</span>
<span class="t" style="top:610px;font-size:14px;line-height:14px;color:#222;right:1981.9px;transform:scaleX(1.0400);transform-origin:100% 0;">(34,484)</span>
<span class="t" style="top:610px;font-size:14px;line-height:14px;color:#222;right:1862.9px;transform:scaleX(1.0400);transform-origin:100% 0;">(34,391)</span>
<span class="t" style="top:610px;font-size:14px;line-height:14px;color:#222;right:1743.9px;transform:scaleX(1.0400);transform-origin:100% 0;">(34,121)</span>
<span class="t" style="top:610px;font-size:14px;line-height:14px;color:#222;right:1624.9px;transform:scaleX(1.0400);transform-origin:100% 0;">(34,066)</span>
<span class="t" style="top:610px;font-size:14px;line-height:14px;color:#222;right:1505.9px;transform:scaleX(1.0400);transform-origin:100% 0;">(34,021)</span>
<span class="t" style="top:610px;font-size:14px;line-height:14px;color:#222;right:1386.9px;transform:scaleX(1.0400);transform-origin:100% 0;">(33,989)</span>
<span class="t" style="top:610px;font-size:14px;line-height:14px;color:#222;right:1267.9px;transform:scaleX(1.0400);transform-origin:100% 0;">(33,981)</span>
<span class="t" style="top:610px;font-size:14px;line-height:14px;color:#222;right:1148.9px;transform:scaleX(1.0400);transform-origin:100% 0;">(33,984)</span>
<span class="t" style="top:610px;font-size:14px;line-height:14px;color:#222;right:1029.9px;transform:scaleX(1.0400);transform-origin:100% 0;">(33,987)</span>
<span class="t" style="top:610px;font-size:14px;line-height:14px;color:#222;right:910.9px;transform:scaleX(1.0400);transform-origin:100% 0;">(33,990)</span>
<span class="t" style="top:610px;font-size:14px;line-height:14px;color:#222;right:791.9px;transform:scaleX(1.0400);transform-origin:100% 0;">(33,993)</span>
<span class="t" style="top:610px;font-size:14px;line-height:14px;color:#222;right:672.9px;transform:scaleX(1.0400);transform-origin:100% 0;">(33,995)</span>
<span class="t" style="top:610px;font-size:14px;line-height:14px;color:#222;right:553.9px;transform:scaleX(1.0400);transform-origin:100% 0;">(87,480)</span>
<span class="t" style="top:610px;font-size:14px;line-height:14px;color:#222;right:434.9px;transform:scaleX(1.0400);transform-origin:100% 0;">(87,486)</span>
<span class="t" style="top:610px;font-size:14px;line-height:14px;color:#222;right:315.9px;transform:scaleX(1.0400);transform-origin:100% 0;">(87,491)</span>
<span class="t" style="top:610px;font-size:14px;line-height:14px;color:#222;right:196.9px;transform:scaleX(1.0400);transform-origin:100% 0;">(87,497)</span>
<span class="t" style="top:610px;font-size:14px;line-height:14px;color:#222;right:77.9px;transform:scaleX(1.0400);transform-origin:100% 0;">(87,502)</span>
<span class="t" style="top:630px;font-size:16px;line-height:16px;color:#fff;font-weight:bold;right:1989.9px;transform:scaleX(1.1050);transform-origin:100% 0;">21,716</span>
<span class="t" style="top:630px;font-size:16px;line-height:16px;color:#fff;font-weight:bold;right:1870.9px;transform:scaleX(1.1050);transform-origin:100% 0;">95,073</span>
<span class="t" style="top:630px;font-size:16px;line-height:16px;color:#fff;font-weight:bold;right:1751.9px;transform:scaleX(1.1050);transform-origin:100% 0;">112,260</span>
<span class="t" style="top:630px;font-size:16px;line-height:16px;color:#fff;font-weight:bold;right:1632.9px;transform:scaleX(1.1050);transform-origin:100% 0;">100,800</span>
<span class="t" style="top:630px;font-size:16px;line-height:16px;color:#fff;font-weight:bold;right:1513.9px;transform:scaleX(1.1050);transform-origin:100% 0;">106,326</span>
<span class="t" style="top:630px;font-size:16px;line-height:16px;color:#fff;font-weight:bold;right:1394.9px;transform:scaleX(1.1050);transform-origin:100% 0;">100,899</span>
<span class="t" style="top:630px;font-size:16px;line-height:16px;color:#fff;font-weight:bold;right:1275.9px;transform:scaleX(1.1050);transform-origin:100% 0;">106,388</span>
<span class="t" style="top:630px;font-size:16px;line-height:16px;color:#fff;font-weight:bold;right:1156.9px;transform:scaleX(1.1050);transform-origin:100% 0;">103,661</span>
<span class="t" style="top:630px;font-size:16px;line-height:16px;color:#fff;font-weight:bold;right:1037.9px;transform:scaleX(1.1050);transform-origin:100% 0;">100,934</span>
<span class="t" style="top:630px;font-size:16px;line-height:16px;color:#fff;font-weight:bold;right:918.9px;transform:scaleX(1.1050);transform-origin:100% 0;">106,413</span>
<span class="t" style="top:630px;font-size:16px;line-height:16px;color:#fff;font-weight:bold;right:799.9px;transform:scaleX(1.1050);transform-origin:100% 0;">100,951</span>
<span class="t" style="top:630px;font-size:16px;line-height:16px;color:#fff;font-weight:bold;right:680.9px;transform:scaleX(1.1050);transform-origin:100% 0;">106,430</span>
<span class="t" style="top:630px;font-size:16px;line-height:16px;color:#fff;font-weight:bold;right:561.9px;transform:scaleX(1.1050);transform-origin:100% 0;">144,223</span>
<span class="t" style="top:630px;font-size:16px;line-height:16px;color:#fff;font-weight:bold;right:442.9px;transform:scaleX(1.1050);transform-origin:100% 0;">242,525</span>
<span class="t" style="top:630px;font-size:16px;line-height:16px;color:#fff;font-weight:bold;right:323.9px;transform:scaleX(1.1050);transform-origin:100% 0;">285,823</span>
<span class="t" style="top:630px;font-size:16px;line-height:16px;color:#fff;font-weight:bold;right:204.9px;transform:scaleX(1.1050);transform-origin:100% 0;">257,465</span>
<span class="t" style="top:630px;font-size:16px;line-height:16px;color:#fff;font-weight:bold;right:85.9px;transform:scaleX(1.1050);transform-origin:100% 0;">270,947</span>
<span class="t" style="top:694px;font-size:14px;line-height:14px;color:#222;right:1981.9px;transform:scaleX(1.0400);transform-origin:100% 0;">(38,333)</span>
<span class="t" style="top:694px;font-size:14px;line-height:14px;color:#222;right:1862.9px;transform:scaleX(1.0400);transform-origin:100% 0;">(44,583)</span>
<span class="t" style="top:694px;font-size:14px;line-height:14px;color:#222;right:1743.9px;transform:scaleX(1.0400);transform-origin:100% 0;">(49,583)</span>
<span class="t" style="top:694px;font-size:14px;line-height:14px;color:#222;right:1624.9px;transform:scaleX(1.0400);transform-origin:100% 0;">(27,917)</span>
<span class="t" style="top:694px;font-size:14px;line-height:14px;color:#222;right:1505.9px;transform:scaleX(1.0400);transform-origin:100% 0;">(22,917)</span>
<span class="t" style="top:694px;font-size:14px;line-height:14px;color:#222;right:1386.9px;transform:scaleX(1.0400);transform-origin:100% 0;">(16,667)</span>
<span class="t" style="top:694px;font-size:14px;line-height:14px;color:#222;right:1267.9px;transform:scaleX(1.0400);transform-origin:100% 0;">(5,000)</span>
<span class="t" style="top:694px;font-size:14px;line-height:14px;color:#222;right:1154.7px;">-</span>
<span class="t" style="top:694px;font-size:14px;line-height:14px;color:#222;right:1035.7px;">-</span>
<span class="t" style="top:694px;font-size:14px;line-height:14px;color:#222;right:916.7px;">-</span>
<span class="t" style="top:694px;font-size:14px;line-height:14px;color:#222;right:797.7px;">-</span>
<span class="t" style="top:694px;font-size:14px;line-height:14px;color:#222;right:678.7px;">-</span>
<span class="t" style="top:694px;font-size:14px;line-height:14px;color:#222;right:559.7px;">-</span>
<span class="t" style="top:694px;font-size:14px;line-height:14px;color:#222;right:440.7px;">-</span>
<span class="t" style="top:694px;font-size:14px;line-height:14px;color:#222;right:321.7px;">-</span>
<span class="t" style="top:694px;font-size:14px;line-height:14px;color:#222;right:202.7px;">-</span>
<span class="t" style="top:694px;font-size:14px;line-height:14px;color:#222;right:83.7px;">-</span>
<span class="t" style="top:718px;font-size:16px;line-height:16px;color:#fff;font-weight:bold;right:1982.8px;transform:scaleX(1.1500);transform-origin:100% 0;">(38,333)</span>
<span class="t" style="top:718px;font-size:16px;line-height:16px;color:#fff;font-weight:bold;right:1863.8px;transform:scaleX(1.1500);transform-origin:100% 0;">(44,583)</span>
<span class="t" style="top:718px;font-size:16px;line-height:16px;color:#fff;font-weight:bold;right:1744.8px;transform:scaleX(1.1500);transform-origin:100% 0;">(49,583)</span>
<span class="t" style="top:718px;font-size:16px;line-height:16px;color:#fff;font-weight:bold;right:1625.8px;transform:scaleX(1.1500);transform-origin:100% 0;">(27,917)</span>
<span class="t" style="top:718px;font-size:16px;line-height:16px;color:#fff;font-weight:bold;right:1506.8px;transform:scaleX(1.1500);transform-origin:100% 0;">(22,917)</span>
<span class="t" style="top:718px;font-size:16px;line-height:16px;color:#fff;font-weight:bold;right:1387.8px;transform:scaleX(1.1500);transform-origin:100% 0;">(16,667)</span>
<span class="t" style="top:718px;font-size:16px;line-height:16px;color:#fff;font-weight:bold;right:1268.8px;transform:scaleX(1.1500);transform-origin:100% 0;">(5,000)</span>
<span class="t" style="top:718px;font-size:16px;line-height:16px;color:#cfeafa;right:1157.2px;">-</span>
<span class="t" style="top:718px;font-size:16px;line-height:16px;color:#cfeafa;right:1038.2px;">-</span>
<span class="t" style="top:718px;font-size:16px;line-height:16px;color:#cfeafa;right:919.2px;">-</span>
<span class="t" style="top:718px;font-size:16px;line-height:16px;color:#cfeafa;right:800.2px;">-</span>
<span class="t" style="top:718px;font-size:16px;line-height:16px;color:#cfeafa;right:681.2px;">-</span>
<span class="t" style="top:718px;font-size:16px;line-height:16px;color:#cfeafa;right:562.2px;">-</span>
<span class="t" style="top:718px;font-size:16px;line-height:16px;color:#cfeafa;right:443.2px;">-</span>
<span class="t" style="top:718px;font-size:16px;line-height:16px;color:#cfeafa;right:324.2px;">-</span>
<span class="t" style="top:718px;font-size:16px;line-height:16px;color:#cfeafa;right:205.2px;">-</span>
<span class="t" style="top:718px;font-size:16px;line-height:16px;color:#cfeafa;right:86.2px;">-</span>
<span class="t" style="top:782px;font-size:14px;line-height:14px;color:#222;right:1987.4px;">200,000</span>
<span class="t" style="top:782px;font-size:14px;line-height:14px;color:#222;right:1868.7px;">-</span>
<span class="t" style="top:782px;font-size:14px;line-height:14px;color:#222;right:1749.4px;">100,000</span>
<span class="t" style="top:782px;font-size:14px;line-height:14px;color:#222;right:1630.7px;">-</span>
<span class="t" style="top:782px;font-size:14px;line-height:14px;color:#222;right:1511.7px;">-</span>
<span class="t" style="top:782px;font-size:14px;line-height:14px;color:#222;right:1392.7px;">-</span>
<span class="t" style="top:782px;font-size:14px;line-height:14px;color:#222;right:1273.7px;">-</span>
<span class="t" style="top:782px;font-size:14px;line-height:14px;color:#222;right:1154.7px;">-</span>
<span class="t" style="top:782px;font-size:14px;line-height:14px;color:#222;right:1035.7px;">-</span>
<span class="t" style="top:782px;font-size:14px;line-height:14px;color:#222;right:916.7px;">-</span>
<span class="t" style="top:782px;font-size:14px;line-height:14px;color:#222;right:797.7px;">-</span>
<span class="t" style="top:782px;font-size:14px;line-height:14px;color:#222;right:678.7px;">-</span>
<span class="t" style="top:782px;font-size:14px;line-height:14px;color:#222;right:559.7px;">-</span>
<span class="t" style="top:782px;font-size:14px;line-height:14px;color:#222;right:440.7px;">-</span>
<span class="t" style="top:782px;font-size:14px;line-height:14px;color:#222;right:321.7px;">-</span>
<span class="t" style="top:782px;font-size:14px;line-height:14px;color:#222;right:202.7px;">-</span>
<span class="t" style="top:782px;font-size:14px;line-height:14px;color:#222;right:83.7px;">-</span>
<span class="t" style="top:802px;font-size:14px;line-height:14px;color:#222;right:1987.7px;">-</span>
<span class="t" style="top:802px;font-size:14px;line-height:14px;color:#222;right:1868.7px;">-</span>
<span class="t" style="top:802px;font-size:14px;line-height:14px;color:#222;right:1743.9px;transform:scaleX(1.0400);transform-origin:100% 0;">(1,667)</span>
<span class="t" style="top:802px;font-size:14px;line-height:14px;color:#222;right:1624.9px;transform:scaleX(1.0400);transform-origin:100% 0;">(1,667)</span>
<span class="t" style="top:802px;font-size:14px;line-height:14px;color:#222;right:1505.9px;transform:scaleX(1.0400);transform-origin:100% 0;">(1,667)</span>
<span class="t" style="top:802px;font-size:14px;line-height:14px;color:#222;right:1386.9px;transform:scaleX(1.0400);transform-origin:100% 0;">(1,667)</span>
<span class="t" style="top:802px;font-size:14px;line-height:14px;color:#222;right:1267.9px;transform:scaleX(1.0400);transform-origin:100% 0;">(1,667)</span>
<span class="t" style="top:802px;font-size:14px;line-height:14px;color:#222;right:1148.9px;transform:scaleX(1.0400);transform-origin:100% 0;">(1,667)</span>
<span class="t" style="top:802px;font-size:14px;line-height:14px;color:#222;right:1029.9px;transform:scaleX(1.0400);transform-origin:100% 0;">(1,667)</span>
<span class="t" style="top:802px;font-size:14px;line-height:14px;color:#222;right:910.9px;transform:scaleX(1.0400);transform-origin:100% 0;">(1,667)</span>
<span class="t" style="top:802px;font-size:14px;line-height:14px;color:#222;right:791.9px;transform:scaleX(1.0400);transform-origin:100% 0;">(1,667)</span>
<span class="t" style="top:802px;font-size:14px;line-height:14px;color:#222;right:672.9px;transform:scaleX(1.0400);transform-origin:100% 0;">(1,667)</span>
<span class="t" style="top:802px;font-size:14px;line-height:14px;color:#222;right:553.9px;transform:scaleX(1.0400);transform-origin:100% 0;">(3,770)</span>
<span class="t" style="top:802px;font-size:14px;line-height:14px;color:#222;right:434.9px;transform:scaleX(1.0400);transform-origin:100% 0;">(3,780)</span>
<span class="t" style="top:802px;font-size:14px;line-height:14px;color:#222;right:315.9px;transform:scaleX(1.0400);transform-origin:100% 0;">(3,791)</span>
<span class="t" style="top:802px;font-size:14px;line-height:14px;color:#222;right:196.9px;transform:scaleX(1.0400);transform-origin:100% 0;">(3,801)</span>
<span class="t" style="top:802px;font-size:14px;line-height:14px;color:#222;right:77.9px;transform:scaleX(1.0400);transform-origin:100% 0;">(3,812)</span>
<span class="t" style="top:822px;font-size:14px;line-height:14px;color:#222;right:1987.4px;">700,000</span>
<span class="t" style="top:822px;font-size:14px;line-height:14px;color:#222;right:1868.7px;">-</span>
<span class="t" style="top:822px;font-size:14px;line-height:14px;color:#222;right:1749.7px;">-</span>
<span class="t" style="top:822px;font-size:14px;line-height:14px;color:#222;right:1630.7px;">-</span>
<span class="t" style="top:822px;font-size:14px;line-height:14px;color:#222;right:1511.7px;">-</span>
<span class="t" style="top:822px;font-size:14px;line-height:14px;color:#222;right:1392.7px;">-</span>
<span class="t" style="top:822px;font-size:14px;line-height:14px;color:#222;right:1273.7px;">-</span>
<span class="t" style="top:822px;font-size:14px;line-height:14px;color:#222;right:1154.7px;">-</span>
<span class="t" style="top:822px;font-size:14px;line-height:14px;color:#222;right:1035.7px;">-</span>
<span class="t" style="top:822px;font-size:14px;line-height:14px;color:#222;right:916.7px;">-</span>
<span class="t" style="top:822px;font-size:14px;line-height:14px;color:#222;right:797.7px;">-</span>
<span class="t" style="top:822px;font-size:14px;line-height:14px;color:#222;right:678.7px;">-</span>
<span class="t" style="top:822px;font-size:14px;line-height:14px;color:#222;right:559.7px;">-</span>
<span class="t" style="top:822px;font-size:14px;line-height:14px;color:#222;right:440.7px;">-</span>
<span class="t" style="top:822px;font-size:14px;line-height:14px;color:#222;right:321.7px;">-</span>
<span class="t" style="top:822px;font-size:14px;line-height:14px;color:#222;right:202.7px;">-</span>
<span class="t" style="top:822px;font-size:14px;line-height:14px;color:#222;right:83.7px;">-</span>
<span class="t" style="top:842px;font-size:14px;line-height:14px;color:#222;right:1987.7px;">-</span>
<span class="t" style="top:842px;font-size:14px;line-height:14px;color:#222;right:1868.7px;">-</span>
<span class="t" style="top:842px;font-size:14px;line-height:14px;color:#222;right:1749.7px;">-</span>
<span class="t" style="top:842px;font-size:14px;line-height:14px;color:#222;right:1630.7px;">-</span>
<span class="t" style="top:842px;font-size:14px;line-height:14px;color:#222;right:1511.7px;">-</span>
<span class="t" style="top:842px;font-size:14px;line-height:14px;color:#222;right:1392.7px;">-</span>
<span class="t" style="top:842px;font-size:14px;line-height:14px;color:#222;right:1273.7px;">-</span>
<span class="t" style="top:842px;font-size:14px;line-height:14px;color:#222;right:1154.7px;">-</span>
<span class="t" style="top:842px;font-size:14px;line-height:14px;color:#222;right:1035.7px;">-</span>
<span class="t" style="top:842px;font-size:14px;line-height:14px;color:#222;right:916.7px;">-</span>
<span class="t" style="top:842px;font-size:14px;line-height:14px;color:#222;right:797.7px;">-</span>
<span class="t" style="top:842px;font-size:14px;line-height:14px;color:#222;right:678.7px;">-</span>
<span class="t" style="top:842px;font-size:14px;line-height:14px;color:#222;right:559.7px;">-</span>
<span class="t" style="top:842px;font-size:14px;line-height:14px;color:#222;right:440.7px;">-</span>
<span class="t" style="top:842px;font-size:14px;line-height:14px;color:#222;right:321.7px;">-</span>
<span class="t" style="top:842px;font-size:14px;line-height:14px;color:#222;right:202.7px;">-</span>
<span class="t" style="top:842px;font-size:14px;line-height:14px;color:#222;right:83.7px;">-</span>
<span class="t" style="top:862px;font-size:14px;line-height:14px;color:#222;right:1987.7px;">-</span>
<span class="t" style="top:862px;font-size:14px;line-height:14px;color:#222;right:1868.7px;">-</span>
<span class="t" style="top:862px;font-size:14px;line-height:14px;color:#222;right:1749.7px;">-</span>
<span class="t" style="top:862px;font-size:14px;line-height:14px;color:#222;right:1630.7px;">-</span>
<span class="t" style="top:862px;font-size:14px;line-height:14px;color:#222;right:1511.7px;">-</span>
<span class="t" style="top:862px;font-size:14px;line-height:14px;color:#222;right:1392.7px;">-</span>
<span class="t" style="top:862px;font-size:14px;line-height:14px;color:#222;right:1273.7px;">-</span>
<span class="t" style="top:862px;font-size:14px;line-height:14px;color:#222;right:1154.7px;">-</span>
<span class="t" style="top:862px;font-size:14px;line-height:14px;color:#222;right:1035.7px;">-</span>
<span class="t" style="top:862px;font-size:14px;line-height:14px;color:#222;right:916.7px;">-</span>
<span class="t" style="top:862px;font-size:14px;line-height:14px;color:#222;right:797.7px;">-</span>
<span class="t" style="top:862px;font-size:14px;line-height:14px;color:#222;right:678.7px;">-</span>
<span class="t" style="top:862px;font-size:14px;line-height:14px;color:#222;right:559.7px;">-</span>
<span class="t" style="top:862px;font-size:14px;line-height:14px;color:#222;right:440.7px;">-</span>
<span class="t" style="top:862px;font-size:14px;line-height:14px;color:#222;right:321.7px;">-</span>
<span class="t" style="top:862px;font-size:14px;line-height:14px;color:#222;right:202.7px;">-</span>
<span class="t" style="top:862px;font-size:14px;line-height:14px;color:#222;right:83.7px;">-</span>
<span class="t" style="top:882px;font-size:16px;line-height:16px;color:#fff;font-weight:bold;right:1989.9px;transform:scaleX(1.1050);transform-origin:100% 0;">900,000</span>
<span class="t" style="top:882px;font-size:16px;line-height:16px;color:#cfeafa;right:1871.2px;">-</span>
<span class="t" style="top:882px;font-size:16px;line-height:16px;color:#fff;font-weight:bold;right:1751.9px;transform:scaleX(1.1050);transform-origin:100% 0;">98,333</span>
<span class="t" style="top:882px;font-size:16px;line-height:16px;color:#fff;font-weight:bold;right:1625.8px;transform:scaleX(1.1500);transform-origin:100% 0;">(1,667)</span>
<span class="t" style="top:882px;font-size:16px;line-height:16px;color:#fff;font-weight:bold;right:1506.8px;transform:scaleX(1.1500);transform-origin:100% 0;">(1,667)</span>
<span class="t" style="top:882px;font-size:16px;line-height:16px;color:#fff;font-weight:bold;right:1387.8px;transform:scaleX(1.1500);transform-origin:100% 0;">(1,667)</span>
<span class="t" style="top:882px;font-size:16px;line-height:16px;color:#fff;font-weight:bold;right:1268.8px;transform:scaleX(1.1500);transform-origin:100% 0;">(1,667)</span>
<span class="t" style="top:882px;font-size:16px;line-height:16px;color:#fff;font-weight:bold;right:1149.8px;transform:scaleX(1.1500);transform-origin:100% 0;">(1,667)</span>
<span class="t" style="top:882px;font-size:16px;line-height:16px;color:#fff;font-weight:bold;right:1030.8px;transform:scaleX(1.1500);transform-origin:100% 0;">(1,667)</span>
<span class="t" style="top:882px;font-size:16px;line-height:16px;color:#fff;font-weight:bold;right:911.8px;transform:scaleX(1.1500);transform-origin:100% 0;">(1,667)</span>
<span class="t" style="top:882px;font-size:16px;line-height:16px;color:#fff;font-weight:bold;right:792.8px;transform:scaleX(1.1500);transform-origin:100% 0;">(1,667)</span>
<span class="t" style="top:882px;font-size:16px;line-height:16px;color:#fff;font-weight:bold;right:673.8px;transform:scaleX(1.1500);transform-origin:100% 0;">(1,667)</span>
<span class="t" style="top:882px;font-size:16px;line-height:16px;color:#fff;font-weight:bold;right:554.8px;transform:scaleX(1.1500);transform-origin:100% 0;">(3,770)</span>
<span class="t" style="top:882px;font-size:16px;line-height:16px;color:#fff;font-weight:bold;right:435.8px;transform:scaleX(1.1500);transform-origin:100% 0;">(3,780)</span>
<span class="t" style="top:882px;font-size:16px;line-height:16px;color:#fff;font-weight:bold;right:316.8px;transform:scaleX(1.1500);transform-origin:100% 0;">(3,791)</span>
<span class="t" style="top:882px;font-size:16px;line-height:16px;color:#fff;font-weight:bold;right:197.8px;transform:scaleX(1.1500);transform-origin:100% 0;">(3,801)</span>
<span class="t" style="top:882px;font-size:16px;line-height:16px;color:#fff;font-weight:bold;right:78.8px;transform:scaleX(1.1500);transform-origin:100% 0;">(3,812)</span>
<span class="t" style="top:918px;font-size:16px;line-height:16px;color:#fff;font-weight:bold;right:1989.9px;transform:scaleX(1.1050);transform-origin:100% 0;">883,382</span>
<span class="t" style="top:918px;font-size:16px;line-height:16px;color:#fff;font-weight:bold;right:1870.9px;transform:scaleX(1.1050);transform-origin:100% 0;">50,490</span>
<span class="t" style="top:918px;font-size:16px;line-height:16px;color:#fff;font-weight:bold;right:1751.9px;transform:scaleX(1.1050);transform-origin:100% 0;">161,010</span>
<span class="t" style="top:918px;font-size:16px;line-height:16px;color:#fff;font-weight:bold;right:1632.9px;transform:scaleX(1.1050);transform-origin:100% 0;">71,216</span>
<span class="t" style="top:918px;font-size:16px;line-height:16px;color:#fff;font-weight:bold;right:1513.9px;transform:scaleX(1.1050);transform-origin:100% 0;">81,743</span>
<span class="t" style="top:918px;font-size:16px;line-height:16px;color:#fff;font-weight:bold;right:1394.9px;transform:scaleX(1.1050);transform-origin:100% 0;">82,565</span>
<span class="t" style="top:918px;font-size:16px;line-height:16px;color:#fff;font-weight:bold;right:1275.9px;transform:scaleX(1.1050);transform-origin:100% 0;">99,721</span>
<span class="t" style="top:918px;font-size:16px;line-height:16px;color:#fff;font-weight:bold;right:1156.9px;transform:scaleX(1.1050);transform-origin:100% 0;">101,994</span>
<span class="t" style="top:918px;font-size:16px;line-height:16px;color:#fff;font-weight:bold;right:1037.9px;transform:scaleX(1.1050);transform-origin:100% 0;">99,268</span>
<span class="t" style="top:918px;font-size:16px;line-height:16px;color:#fff;font-weight:bold;right:918.9px;transform:scaleX(1.1050);transform-origin:100% 0;">104,746</span>
<span class="t" style="top:918px;font-size:16px;line-height:16px;color:#fff;font-weight:bold;right:799.9px;transform:scaleX(1.1050);transform-origin:100% 0;">99,284</span>
<span class="t" style="top:918px;font-size:16px;line-height:16px;color:#fff;font-weight:bold;right:680.9px;transform:scaleX(1.1050);transform-origin:100% 0;">104,763</span>
<span class="t" style="top:918px;font-size:16px;line-height:16px;color:#fff;font-weight:bold;right:561.9px;transform:scaleX(1.1050);transform-origin:100% 0;">140,453</span>
<span class="t" style="top:918px;font-size:16px;line-height:16px;color:#fff;font-weight:bold;right:442.9px;transform:scaleX(1.1050);transform-origin:100% 0;">238,745</span>
<span class="t" style="top:918px;font-size:16px;line-height:16px;color:#fff;font-weight:bold;right:323.9px;transform:scaleX(1.1050);transform-origin:100% 0;">282,032</span>
<span class="t" style="top:918px;font-size:16px;line-height:16px;color:#fff;font-weight:bold;right:204.9px;transform:scaleX(1.1050);transform-origin:100% 0;">253,664</span>
<span class="t" style="top:918px;font-size:16px;line-height:16px;color:#fff;font-weight:bold;right:85.9px;transform:scaleX(1.1050);transform-origin:100% 0;">267,135</span>
<span class="t" style="top:1035px;font-size:16px;line-height:16px;color:#222;right:1989.2px;transform:scaleX(0.9950);transform-origin:100% 0;">103,772</span>
<span class="t" style="top:1035px;font-size:16px;line-height:16px;color:#222;right:1870.2px;transform:scaleX(0.9950);transform-origin:100% 0;">103,865</span>
<span class="t" style="top:1035px;font-size:16px;line-height:16px;color:#222;right:1751.2px;transform:scaleX(0.9950);transform-origin:100% 0;">103,468</span>
<span class="t" style="top:1035px;font-size:16px;line-height:16px;color:#222;right:1632.2px;transform:scaleX(0.9950);transform-origin:100% 0;">103,535</span>
<span class="t" style="top:1035px;font-size:16px;line-height:16px;color:#222;right:1513.2px;transform:scaleX(0.9950);transform-origin:100% 0;">103,591</span>
<span class="t" style="top:1035px;font-size:16px;line-height:16px;color:#222;right:1394.2px;transform:scaleX(0.9950);transform-origin:100% 0;">103,634</span>
<span class="t" style="top:1035px;font-size:16px;line-height:16px;color:#222;right:1275.2px;transform:scaleX(0.9950);transform-origin:100% 0;">103,653</span>
<span class="t" style="top:1035px;font-size:16px;line-height:16px;color:#222;right:1156.2px;transform:scaleX(0.9950);transform-origin:100% 0;">103,661</span>
<span class="t" style="top:1035px;font-size:16px;line-height:16px;color:#222;right:1037.2px;transform:scaleX(0.9950);transform-origin:100% 0;">103,669</span>
<span class="t" style="top:1035px;font-size:16px;line-height:16px;color:#222;right:918.2px;transform:scaleX(0.9950);transform-origin:100% 0;">103,678</span>
<span class="t" style="top:1035px;font-size:16px;line-height:16px;color:#222;right:799.2px;transform:scaleX(0.9950);transform-origin:100% 0;">103,686</span>
<span class="t" style="top:1035px;font-size:16px;line-height:16px;color:#222;right:680.2px;transform:scaleX(0.9950);transform-origin:100% 0;">103,694</span>
<span class="t" style="top:1035px;font-size:16px;line-height:16px;color:#222;right:561.2px;transform:scaleX(0.9950);transform-origin:100% 0;">264,149</span>
<span class="t" style="top:1035px;font-size:16px;line-height:16px;color:#222;right:442.2px;transform:scaleX(0.9950);transform-origin:100% 0;">264,166</span>
<span class="t" style="top:1035px;font-size:16px;line-height:16px;color:#222;right:323.2px;transform:scaleX(0.9950);transform-origin:100% 0;">264,182</span>
<span class="t" style="top:1035px;font-size:16px;line-height:16px;color:#222;right:204.2px;transform:scaleX(0.9950);transform-origin:100% 0;">264,198</span>
<span class="t" style="top:1035px;font-size:16px;line-height:16px;color:#222;right:85.2px;transform:scaleX(0.9950);transform-origin:100% 0;">264,215</span>
<span class="t" style="top:1056px;font-size:16px;line-height:16px;color:#222;right:1983px;transform:scaleX(1.0200);transform-origin:100% 0;">(82,057)</span>
<span class="t" style="top:1056px;font-size:16px;line-height:16px;color:#222;right:1864px;transform:scaleX(1.0200);transform-origin:100% 0;">(8,792)</span>
<span class="t" style="top:1056px;font-size:16px;line-height:16px;color:#222;right:1751.2px;transform:scaleX(0.9950);transform-origin:100% 0;">8,792</span>
<span class="t" style="top:1056px;font-size:16px;line-height:16px;color:#222;right:1626px;transform:scaleX(1.0200);transform-origin:100% 0;">(2,735)</span>
<span class="t" style="top:1056px;font-size:16px;line-height:16px;color:#222;right:1513.2px;transform:scaleX(0.9950);transform-origin:100% 0;">2,735</span>
<span class="t" style="top:1056px;font-size:16px;line-height:16px;color:#222;right:1388px;transform:scaleX(1.0200);transform-origin:100% 0;">(2,735)</span>
<span class="t" style="top:1056px;font-size:16px;line-height:16px;color:#222;right:1275.2px;transform:scaleX(0.9950);transform-origin:100% 0;">2,735</span>
<span class="t" style="top:1056px;font-size:16px;line-height:16px;color:#222;right:1156.5px;">-</span>
<span class="t" style="top:1056px;font-size:16px;line-height:16px;color:#222;right:1031px;transform:scaleX(1.0200);transform-origin:100% 0;">(2,735)</span>
<span class="t" style="top:1056px;font-size:16px;line-height:16px;color:#222;right:918.2px;transform:scaleX(0.9950);transform-origin:100% 0;">2,735</span>
<span class="t" style="top:1056px;font-size:16px;line-height:16px;color:#222;right:793px;transform:scaleX(1.0200);transform-origin:100% 0;">(2,735)</span>
<span class="t" style="top:1056px;font-size:16px;line-height:16px;color:#222;right:680.2px;transform:scaleX(0.9950);transform-origin:100% 0;">2,735</span>
<span class="t" style="top:1056px;font-size:16px;line-height:16px;color:#222;right:555px;transform:scaleX(1.0200);transform-origin:100% 0;">(119,927)</span>
<span class="t" style="top:1056px;font-size:16px;line-height:16px;color:#222;right:436px;transform:scaleX(1.0200);transform-origin:100% 0;">(21,641)</span>
<span class="t" style="top:1056px;font-size:16px;line-height:16px;color:#222;right:323.2px;transform:scaleX(0.9950);transform-origin:100% 0;">21,641</span>
<span class="t" style="top:1056px;font-size:16px;line-height:16px;color:#222;right:198px;transform:scaleX(1.0200);transform-origin:100% 0;">(6,733)</span>
<span class="t" style="top:1056px;font-size:16px;line-height:16px;color:#222;right:85.2px;transform:scaleX(0.9950);transform-origin:100% 0;">6,733</span>
<span class="t" style="top:1077px;font-size:16px;line-height:16px;color:#fff;font-weight:bold;right:1989.9px;transform:scaleX(1.1050);transform-origin:100% 0;">21,716</span>
<span class="t" style="top:1077px;font-size:16px;line-height:16px;color:#fff;font-weight:bold;right:1870.9px;transform:scaleX(1.1050);transform-origin:100% 0;">95,073</span>
<span class="t" style="top:1077px;font-size:16px;line-height:16px;color:#fff;font-weight:bold;right:1751.9px;transform:scaleX(1.1050);transform-origin:100% 0;">112,260</span>
<span class="t" style="top:1077px;font-size:16px;line-height:16px;color:#fff;font-weight:bold;right:1632.9px;transform:scaleX(1.1050);transform-origin:100% 0;">100,800</span>
<span class="t" style="top:1077px;font-size:16px;line-height:16px;color:#fff;font-weight:bold;right:1513.9px;transform:scaleX(1.1050);transform-origin:100% 0;">106,326</span>
<span class="t" style="top:1077px;font-size:16px;line-height:16px;color:#fff;font-weight:bold;right:1394.9px;transform:scaleX(1.1050);transform-origin:100% 0;">100,899</span>
<span class="t" style="top:1077px;font-size:16px;line-height:16px;color:#fff;font-weight:bold;right:1275.9px;transform:scaleX(1.1050);transform-origin:100% 0;">106,388</span>
<span class="t" style="top:1077px;font-size:16px;line-height:16px;color:#fff;font-weight:bold;right:1156.9px;transform:scaleX(1.1050);transform-origin:100% 0;">103,661</span>
<span class="t" style="top:1077px;font-size:16px;line-height:16px;color:#fff;font-weight:bold;right:1037.9px;transform:scaleX(1.1050);transform-origin:100% 0;">100,934</span>
<span class="t" style="top:1077px;font-size:16px;line-height:16px;color:#fff;font-weight:bold;right:918.9px;transform:scaleX(1.1050);transform-origin:100% 0;">106,413</span>
<span class="t" style="top:1077px;font-size:16px;line-height:16px;color:#fff;font-weight:bold;right:799.9px;transform:scaleX(1.1050);transform-origin:100% 0;">100,951</span>
<span class="t" style="top:1077px;font-size:16px;line-height:16px;color:#fff;font-weight:bold;right:680.9px;transform:scaleX(1.1050);transform-origin:100% 0;">106,430</span>
<span class="t" style="top:1077px;font-size:16px;line-height:16px;color:#fff;font-weight:bold;right:561.9px;transform:scaleX(1.1050);transform-origin:100% 0;">144,223</span>
<span class="t" style="top:1077px;font-size:16px;line-height:16px;color:#fff;font-weight:bold;right:442.9px;transform:scaleX(1.1050);transform-origin:100% 0;">242,525</span>
<span class="t" style="top:1077px;font-size:16px;line-height:16px;color:#fff;font-weight:bold;right:323.9px;transform:scaleX(1.1050);transform-origin:100% 0;">285,823</span>
<span class="t" style="top:1077px;font-size:16px;line-height:16px;color:#fff;font-weight:bold;right:204.9px;transform:scaleX(1.1050);transform-origin:100% 0;">257,465</span>
<span class="t" style="top:1077px;font-size:16px;line-height:16px;color:#fff;font-weight:bold;right:85.9px;transform:scaleX(1.1050);transform-origin:100% 0;">270,947</span>
<span class="t" style="top:1143px;font-size:16px;line-height:16px;color:#222;right:1983px;transform:scaleX(1.0200);transform-origin:100% 0;">(38,333)</span>
<span class="t" style="top:1143px;font-size:16px;line-height:16px;color:#222;right:1864px;transform:scaleX(1.0200);transform-origin:100% 0;">(44,583)</span>
<span class="t" style="top:1143px;font-size:16px;line-height:16px;color:#222;right:1745px;transform:scaleX(1.0200);transform-origin:100% 0;">(49,583)</span>
<span class="t" style="top:1143px;font-size:16px;line-height:16px;color:#222;right:1626px;transform:scaleX(1.0200);transform-origin:100% 0;">(27,917)</span>
<span class="t" style="top:1143px;font-size:16px;line-height:16px;color:#222;right:1507px;transform:scaleX(1.0200);transform-origin:100% 0;">(22,917)</span>
<span class="t" style="top:1143px;font-size:16px;line-height:16px;color:#222;right:1388px;transform:scaleX(1.0200);transform-origin:100% 0;">(16,667)</span>
<span class="t" style="top:1143px;font-size:16px;line-height:16px;color:#222;right:1269px;transform:scaleX(1.0200);transform-origin:100% 0;">(5,000)</span>
<span class="t" style="top:1143px;font-size:16px;line-height:16px;color:#222;right:1156.5px;">-</span>
<span class="t" style="top:1143px;font-size:16px;line-height:16px;color:#222;right:1037.5px;">-</span>
<span class="t" style="top:1143px;font-size:16px;line-height:16px;color:#222;right:918.5px;">-</span>
<span class="t" style="top:1143px;font-size:16px;line-height:16px;color:#222;right:799.5px;">-</span>
<span class="t" style="top:1143px;font-size:16px;line-height:16px;color:#222;right:680.5px;">-</span>
<span class="t" style="top:1143px;font-size:16px;line-height:16px;color:#222;right:561.5px;">-</span>
<span class="t" style="top:1143px;font-size:16px;line-height:16px;color:#222;right:442.5px;">-</span>
<span class="t" style="top:1143px;font-size:16px;line-height:16px;color:#222;right:323.5px;">-</span>
<span class="t" style="top:1143px;font-size:16px;line-height:16px;color:#222;right:204.5px;">-</span>
<span class="t" style="top:1143px;font-size:16px;line-height:16px;color:#222;right:85.5px;">-</span>
<span class="t" style="top:1163px;font-size:16px;line-height:16px;color:#fff;font-weight:bold;right:1982.8px;transform:scaleX(1.1500);transform-origin:100% 0;">(38,333)</span>
<span class="t" style="top:1163px;font-size:16px;line-height:16px;color:#fff;font-weight:bold;right:1863.8px;transform:scaleX(1.1500);transform-origin:100% 0;">(44,583)</span>
<span class="t" style="top:1163px;font-size:16px;line-height:16px;color:#fff;font-weight:bold;right:1744.8px;transform:scaleX(1.1500);transform-origin:100% 0;">(49,583)</span>
<span class="t" style="top:1163px;font-size:16px;line-height:16px;color:#fff;font-weight:bold;right:1625.8px;transform:scaleX(1.1500);transform-origin:100% 0;">(27,917)</span>
<span class="t" style="top:1163px;font-size:16px;line-height:16px;color:#fff;font-weight:bold;right:1506.8px;transform:scaleX(1.1500);transform-origin:100% 0;">(22,917)</span>
<span class="t" style="top:1163px;font-size:16px;line-height:16px;color:#fff;font-weight:bold;right:1387.8px;transform:scaleX(1.1500);transform-origin:100% 0;">(16,667)</span>
<span class="t" style="top:1163px;font-size:16px;line-height:16px;color:#fff;font-weight:bold;right:1268.8px;transform:scaleX(1.1500);transform-origin:100% 0;">(5,000)</span>
<span class="t" style="top:1163px;font-size:16px;line-height:16px;color:#cfeafa;right:1157.2px;">-</span>
<span class="t" style="top:1163px;font-size:16px;line-height:16px;color:#cfeafa;right:1038.2px;">-</span>
<span class="t" style="top:1163px;font-size:16px;line-height:16px;color:#cfeafa;right:919.2px;">-</span>
<span class="t" style="top:1163px;font-size:16px;line-height:16px;color:#cfeafa;right:800.2px;">-</span>
<span class="t" style="top:1163px;font-size:16px;line-height:16px;color:#cfeafa;right:681.2px;">-</span>
<span class="t" style="top:1163px;font-size:16px;line-height:16px;color:#cfeafa;right:562.2px;">-</span>
<span class="t" style="top:1163px;font-size:16px;line-height:16px;color:#cfeafa;right:443.2px;">-</span>
<span class="t" style="top:1163px;font-size:16px;line-height:16px;color:#cfeafa;right:324.2px;">-</span>
<span class="t" style="top:1163px;font-size:16px;line-height:16px;color:#cfeafa;right:205.2px;">-</span>
<span class="t" style="top:1163px;font-size:16px;line-height:16px;color:#cfeafa;right:86.2px;">-</span>
<span class="t" style="top:1230px;font-size:16px;line-height:16px;color:#222;right:1989.2px;transform:scaleX(0.9950);transform-origin:100% 0;">700,000</span>
<span class="t" style="top:1230px;font-size:16px;line-height:16px;color:#222;right:1870.5px;">-</span>
<span class="t" style="top:1230px;font-size:16px;line-height:16px;color:#222;right:1751.5px;">-</span>
<span class="t" style="top:1230px;font-size:16px;line-height:16px;color:#222;right:1632.5px;">-</span>
<span class="t" style="top:1230px;font-size:16px;line-height:16px;color:#222;right:1513.5px;">-</span>
<span class="t" style="top:1230px;font-size:16px;line-height:16px;color:#222;right:1394.5px;">-</span>
<span class="t" style="top:1230px;font-size:16px;line-height:16px;color:#222;right:1275.5px;">-</span>
<span class="t" style="top:1230px;font-size:16px;line-height:16px;color:#222;right:1156.5px;">-</span>
<span class="t" style="top:1230px;font-size:16px;line-height:16px;color:#222;right:1037.5px;">-</span>
<span class="t" style="top:1230px;font-size:16px;line-height:16px;color:#222;right:918.5px;">-</span>
<span class="t" style="top:1230px;font-size:16px;line-height:16px;color:#222;right:799.5px;">-</span>
<span class="t" style="top:1230px;font-size:16px;line-height:16px;color:#222;right:680.5px;">-</span>
<span class="t" style="top:1230px;font-size:16px;line-height:16px;color:#222;right:561.5px;">-</span>
<span class="t" style="top:1230px;font-size:16px;line-height:16px;color:#222;right:442.5px;">-</span>
<span class="t" style="top:1230px;font-size:16px;line-height:16px;color:#222;right:323.5px;">-</span>
<span class="t" style="top:1230px;font-size:16px;line-height:16px;color:#222;right:204.5px;">-</span>
<span class="t" style="top:1230px;font-size:16px;line-height:16px;color:#222;right:85.5px;">-</span>
<span class="t" style="top:1251px;font-size:16px;line-height:16px;color:#222;right:1989.2px;transform:scaleX(0.9950);transform-origin:100% 0;">200,000</span>
<span class="t" style="top:1251px;font-size:16px;line-height:16px;color:#222;right:1870.5px;">-</span>
<span class="t" style="top:1251px;font-size:16px;line-height:16px;color:#222;right:1751.2px;transform:scaleX(0.9950);transform-origin:100% 0;">98,333</span>
<span class="t" style="top:1251px;font-size:16px;line-height:16px;color:#222;right:1626px;transform:scaleX(1.0200);transform-origin:100% 0;">(1,667)</span>
<span class="t" style="top:1251px;font-size:16px;line-height:16px;color:#222;right:1507px;transform:scaleX(1.0200);transform-origin:100% 0;">(1,667)</span>
<span class="t" style="top:1251px;font-size:16px;line-height:16px;color:#222;right:1388px;transform:scaleX(1.0200);transform-origin:100% 0;">(1,667)</span>
<span class="t" style="top:1251px;font-size:16px;line-height:16px;color:#222;right:1269px;transform:scaleX(1.0200);transform-origin:100% 0;">(1,667)</span>
<span class="t" style="top:1251px;font-size:16px;line-height:16px;color:#222;right:1150px;transform:scaleX(1.0200);transform-origin:100% 0;">(1,667)</span>
<span class="t" style="top:1251px;font-size:16px;line-height:16px;color:#222;right:1031px;transform:scaleX(1.0200);transform-origin:100% 0;">(1,667)</span>
<span class="t" style="top:1251px;font-size:16px;line-height:16px;color:#222;right:912px;transform:scaleX(1.0200);transform-origin:100% 0;">(1,667)</span>
<span class="t" style="top:1251px;font-size:16px;line-height:16px;color:#222;right:793px;transform:scaleX(1.0200);transform-origin:100% 0;">(1,667)</span>
<span class="t" style="top:1251px;font-size:16px;line-height:16px;color:#222;right:674px;transform:scaleX(1.0200);transform-origin:100% 0;">(1,667)</span>
<span class="t" style="top:1251px;font-size:16px;line-height:16px;color:#222;right:555px;transform:scaleX(1.0200);transform-origin:100% 0;">(3,770)</span>
<span class="t" style="top:1251px;font-size:16px;line-height:16px;color:#222;right:436px;transform:scaleX(1.0200);transform-origin:100% 0;">(3,780)</span>
<span class="t" style="top:1251px;font-size:16px;line-height:16px;color:#222;right:317px;transform:scaleX(1.0200);transform-origin:100% 0;">(3,791)</span>
<span class="t" style="top:1251px;font-size:16px;line-height:16px;color:#222;right:198px;transform:scaleX(1.0200);transform-origin:100% 0;">(3,801)</span>
<span class="t" style="top:1251px;font-size:16px;line-height:16px;color:#222;right:79px;transform:scaleX(1.0200);transform-origin:100% 0;">(3,812)</span>
<span class="t" style="top:1272px;font-size:16px;line-height:16px;color:#222;right:1989.5px;">-</span>
<span class="t" style="top:1272px;font-size:16px;line-height:16px;color:#222;right:1870.5px;">-</span>
<span class="t" style="top:1272px;font-size:16px;line-height:16px;color:#222;right:1751.5px;">-</span>
<span class="t" style="top:1272px;font-size:16px;line-height:16px;color:#222;right:1632.5px;">-</span>
<span class="t" style="top:1272px;font-size:16px;line-height:16px;color:#222;right:1513.5px;">-</span>
<span class="t" style="top:1272px;font-size:16px;line-height:16px;color:#222;right:1394.5px;">-</span>
<span class="t" style="top:1272px;font-size:16px;line-height:16px;color:#222;right:1275.5px;">-</span>
<span class="t" style="top:1272px;font-size:16px;line-height:16px;color:#222;right:1156.5px;">-</span>
<span class="t" style="top:1272px;font-size:16px;line-height:16px;color:#222;right:1037.5px;">-</span>
<span class="t" style="top:1272px;font-size:16px;line-height:16px;color:#222;right:918.5px;">-</span>
<span class="t" style="top:1272px;font-size:16px;line-height:16px;color:#222;right:799.5px;">-</span>
<span class="t" style="top:1272px;font-size:16px;line-height:16px;color:#222;right:680.5px;">-</span>
<span class="t" style="top:1272px;font-size:16px;line-height:16px;color:#222;right:561.5px;">-</span>
<span class="t" style="top:1272px;font-size:16px;line-height:16px;color:#222;right:442.5px;">-</span>
<span class="t" style="top:1272px;font-size:16px;line-height:16px;color:#222;right:323.5px;">-</span>
<span class="t" style="top:1272px;font-size:16px;line-height:16px;color:#222;right:204.5px;">-</span>
<span class="t" style="top:1272px;font-size:16px;line-height:16px;color:#222;right:85.5px;">-</span>
<span class="t" style="top:1292px;font-size:16px;line-height:16px;color:#fff;font-weight:bold;right:1989.9px;transform:scaleX(1.1050);transform-origin:100% 0;">900,000</span>
<span class="t" style="top:1292px;font-size:16px;line-height:16px;color:#cfeafa;right:1871.2px;">-</span>
<span class="t" style="top:1292px;font-size:16px;line-height:16px;color:#fff;font-weight:bold;right:1751.9px;transform:scaleX(1.1050);transform-origin:100% 0;">98,333</span>
<span class="t" style="top:1292px;font-size:16px;line-height:16px;color:#fff;font-weight:bold;right:1625.8px;transform:scaleX(1.1500);transform-origin:100% 0;">(1,667)</span>
<span class="t" style="top:1292px;font-size:16px;line-height:16px;color:#fff;font-weight:bold;right:1506.8px;transform:scaleX(1.1500);transform-origin:100% 0;">(1,667)</span>
<span class="t" style="top:1292px;font-size:16px;line-height:16px;color:#fff;font-weight:bold;right:1387.8px;transform:scaleX(1.1500);transform-origin:100% 0;">(1,667)</span>
<span class="t" style="top:1292px;font-size:16px;line-height:16px;color:#fff;font-weight:bold;right:1268.8px;transform:scaleX(1.1500);transform-origin:100% 0;">(1,667)</span>
<span class="t" style="top:1292px;font-size:16px;line-height:16px;color:#fff;font-weight:bold;right:1149.8px;transform:scaleX(1.1500);transform-origin:100% 0;">(1,667)</span>
<span class="t" style="top:1292px;font-size:16px;line-height:16px;color:#fff;font-weight:bold;right:1030.8px;transform:scaleX(1.1500);transform-origin:100% 0;">(1,667)</span>
<span class="t" style="top:1292px;font-size:16px;line-height:16px;color:#fff;font-weight:bold;right:911.8px;transform:scaleX(1.1500);transform-origin:100% 0;">(1,667)</span>
<span class="t" style="top:1292px;font-size:16px;line-height:16px;color:#fff;font-weight:bold;right:792.8px;transform:scaleX(1.1500);transform-origin:100% 0;">(1,667)</span>
<span class="t" style="top:1292px;font-size:16px;line-height:16px;color:#fff;font-weight:bold;right:673.8px;transform:scaleX(1.1500);transform-origin:100% 0;">(1,667)</span>
<span class="t" style="top:1292px;font-size:16px;line-height:16px;color:#fff;font-weight:bold;right:554.8px;transform:scaleX(1.1500);transform-origin:100% 0;">(3,770)</span>
<span class="t" style="top:1292px;font-size:16px;line-height:16px;color:#fff;font-weight:bold;right:435.8px;transform:scaleX(1.1500);transform-origin:100% 0;">(3,780)</span>
<span class="t" style="top:1292px;font-size:16px;line-height:16px;color:#fff;font-weight:bold;right:316.8px;transform:scaleX(1.1500);transform-origin:100% 0;">(3,791)</span>
<span class="t" style="top:1292px;font-size:16px;line-height:16px;color:#fff;font-weight:bold;right:197.8px;transform:scaleX(1.1500);transform-origin:100% 0;">(3,801)</span>
<span class="t" style="top:1292px;font-size:16px;line-height:16px;color:#fff;font-weight:bold;right:78.8px;transform:scaleX(1.1500);transform-origin:100% 0;">(3,812)</span>
<span class="t" style="top:1360px;font-size:16px;line-height:16px;color:#222;right:1989.5px;">-</span>
<span class="t" style="top:1360px;font-size:16px;line-height:16px;color:#222;right:1870.2px;transform:scaleX(0.9950);transform-origin:100% 0;">883,382</span>
<span class="t" style="top:1360px;font-size:16px;line-height:16px;color:#222;right:1751.2px;transform:scaleX(0.9950);transform-origin:100% 0;">933,872</span>
<span class="t" style="top:1360px;font-size:16px;line-height:16px;color:#222;right:1632.2px;transform:scaleX(0.9950);transform-origin:100% 0;">1,094,883</span>
<span class="t" style="top:1360px;font-size:16px;line-height:16px;color:#222;right:1513.2px;transform:scaleX(0.9950);transform-origin:100% 0;">1,166,099</span>
<span class="t" style="top:1360px;font-size:16px;line-height:16px;color:#222;right:1394.2px;transform:scaleX(0.9950);transform-origin:100% 0;">1,247,842</span>
<span class="t" style="top:1360px;font-size:16px;line-height:16px;color:#222;right:1275.2px;transform:scaleX(0.9950);transform-origin:100% 0;">1,330,407</span>
<span class="t" style="top:1360px;font-size:16px;line-height:16px;color:#222;right:1156.2px;transform:scaleX(0.9950);transform-origin:100% 0;">1,430,129</span>
<span class="t" style="top:1360px;font-size:16px;line-height:16px;color:#222;right:1037.2px;transform:scaleX(0.9950);transform-origin:100% 0;">1,532,123</span>
<span class="t" style="top:1360px;font-size:16px;line-height:16px;color:#222;right:918.2px;transform:scaleX(0.9950);transform-origin:100% 0;">1,631,391</span>
<span class="t" style="top:1360px;font-size:16px;line-height:16px;color:#222;right:799.2px;transform:scaleX(0.9950);transform-origin:100% 0;">1,736,137</span>
<span class="t" style="top:1360px;font-size:16px;line-height:16px;color:#222;right:680.2px;transform:scaleX(0.9950);transform-origin:100% 0;">1,835,421</span>
<span class="t" style="top:1360px;font-size:16px;line-height:16px;color:#222;right:561.2px;transform:scaleX(0.9950);transform-origin:100% 0;">1,940,184</span>
<span class="t" style="top:1360px;font-size:16px;line-height:16px;color:#222;right:442.2px;transform:scaleX(0.9950);transform-origin:100% 0;">2,080,638</span>
<span class="t" style="top:1360px;font-size:16px;line-height:16px;color:#222;right:323.2px;transform:scaleX(0.9950);transform-origin:100% 0;">2,319,382</span>
<span class="t" style="top:1360px;font-size:16px;line-height:16px;color:#222;right:204.2px;transform:scaleX(0.9950);transform-origin:100% 0;">2,601,415</span>
<span class="t" style="top:1360px;font-size:16px;line-height:16px;color:#222;right:85.2px;transform:scaleX(0.9950);transform-origin:100% 0;">2,855,079</span>
<span class="t" style="top:1383px;font-size:16px;line-height:16px;color:#222;right:1989.2px;transform:scaleX(0.9950);transform-origin:100% 0;">883,382</span>
<span class="t" style="top:1383px;font-size:16px;line-height:16px;color:#222;right:1870.2px;transform:scaleX(0.9950);transform-origin:100% 0;">50,490</span>
<span class="t" style="top:1383px;font-size:16px;line-height:16px;color:#222;right:1751.2px;transform:scaleX(0.9950);transform-origin:100% 0;">161,010</span>
<span class="t" style="top:1383px;font-size:16px;line-height:16px;color:#222;right:1632.2px;transform:scaleX(0.9950);transform-origin:100% 0;">71,216</span>
<span class="t" style="top:1383px;font-size:16px;line-height:16px;color:#222;right:1513.2px;transform:scaleX(0.9950);transform-origin:100% 0;">81,743</span>
<span class="t" style="top:1383px;font-size:16px;line-height:16px;color:#222;right:1394.2px;transform:scaleX(0.9950);transform-origin:100% 0;">82,565</span>
<span class="t" style="top:1383px;font-size:16px;line-height:16px;color:#222;right:1275.2px;transform:scaleX(0.9950);transform-origin:100% 0;">99,721</span>
<span class="t" style="top:1383px;font-size:16px;line-height:16px;color:#222;right:1156.2px;transform:scaleX(0.9950);transform-origin:100% 0;">101,994</span>
<span class="t" style="top:1383px;font-size:16px;line-height:16px;color:#222;right:1037.2px;transform:scaleX(0.9950);transform-origin:100% 0;">99,268</span>
<span class="t" style="top:1383px;font-size:16px;line-height:16px;color:#222;right:918.2px;transform:scaleX(0.9950);transform-origin:100% 0;">104,746</span>
<span class="t" style="top:1383px;font-size:16px;line-height:16px;color:#222;right:799.2px;transform:scaleX(0.9950);transform-origin:100% 0;">99,284</span>
<span class="t" style="top:1383px;font-size:16px;line-height:16px;color:#222;right:680.2px;transform:scaleX(0.9950);transform-origin:100% 0;">104,763</span>
<span class="t" style="top:1383px;font-size:16px;line-height:16px;color:#222;right:561.2px;transform:scaleX(0.9950);transform-origin:100% 0;">140,453</span>
<span class="t" style="top:1383px;font-size:16px;line-height:16px;color:#222;right:442.2px;transform:scaleX(0.9950);transform-origin:100% 0;">238,745</span>
<span class="t" style="top:1383px;font-size:16px;line-height:16px;color:#222;right:323.2px;transform:scaleX(0.9950);transform-origin:100% 0;">282,032</span>
<span class="t" style="top:1383px;font-size:16px;line-height:16px;color:#222;right:204.2px;transform:scaleX(0.9950);transform-origin:100% 0;">253,664</span>
<span class="t" style="top:1383px;font-size:16px;line-height:16px;color:#222;right:85.2px;transform:scaleX(0.9950);transform-origin:100% 0;">267,135</span>
<span class="t" style="top:1404px;font-size:16px;line-height:16px;color:#fff;font-weight:bold;right:1989.9px;transform:scaleX(1.1050);transform-origin:100% 0;">883,382</span>
<span class="t" style="top:1404px;font-size:16px;line-height:16px;color:#fff;font-weight:bold;right:1870.9px;transform:scaleX(1.1050);transform-origin:100% 0;">933,872</span>
<span class="t" style="top:1404px;font-size:16px;line-height:16px;color:#fff;font-weight:bold;right:1751.9px;transform:scaleX(1.1050);transform-origin:100% 0;">1,094,883</span>
<span class="t" style="top:1404px;font-size:16px;line-height:16px;color:#fff;font-weight:bold;right:1632.9px;transform:scaleX(1.1050);transform-origin:100% 0;">1,166,099</span>
<span class="t" style="top:1404px;font-size:16px;line-height:16px;color:#fff;font-weight:bold;right:1513.9px;transform:scaleX(1.1050);transform-origin:100% 0;">1,247,842</span>
<span class="t" style="top:1404px;font-size:16px;line-height:16px;color:#fff;font-weight:bold;right:1394.9px;transform:scaleX(1.1050);transform-origin:100% 0;">1,330,407</span>
<span class="t" style="top:1404px;font-size:16px;line-height:16px;color:#fff;font-weight:bold;right:1275.9px;transform:scaleX(1.1050);transform-origin:100% 0;">1,430,129</span>
<span class="t" style="top:1404px;font-size:16px;line-height:16px;color:#fff;font-weight:bold;right:1156.9px;transform:scaleX(1.1050);transform-origin:100% 0;">1,532,123</span>
<span class="t" style="top:1404px;font-size:16px;line-height:16px;color:#fff;font-weight:bold;right:1037.9px;transform:scaleX(1.1050);transform-origin:100% 0;">1,631,391</span>
<span class="t" style="top:1404px;font-size:16px;line-height:16px;color:#fff;font-weight:bold;right:918.9px;transform:scaleX(1.1050);transform-origin:100% 0;">1,736,137</span>
<span class="t" style="top:1404px;font-size:16px;line-height:16px;color:#fff;font-weight:bold;right:799.9px;transform:scaleX(1.1050);transform-origin:100% 0;">1,835,421</span>
<span class="t" style="top:1404px;font-size:16px;line-height:16px;color:#fff;font-weight:bold;right:680.9px;transform:scaleX(1.1050);transform-origin:100% 0;">1,940,184</span>
<span class="t" style="top:1404px;font-size:16px;line-height:16px;color:#fff;font-weight:bold;right:561.9px;transform:scaleX(1.1050);transform-origin:100% 0;">2,080,638</span>
<span class="t" style="top:1404px;font-size:16px;line-height:16px;color:#fff;font-weight:bold;right:442.9px;transform:scaleX(1.1050);transform-origin:100% 0;">2,319,382</span>
<span class="t" style="top:1404px;font-size:16px;line-height:16px;color:#fff;font-weight:bold;right:323.9px;transform:scaleX(1.1050);transform-origin:100% 0;">2,601,415</span>
<span class="t" style="top:1404px;font-size:16px;line-height:16px;color:#fff;font-weight:bold;right:204.9px;transform:scaleX(1.1050);transform-origin:100% 0;">2,855,079</span>
<span class="t" style="top:1404px;font-size:16px;line-height:16px;color:#fff;font-weight:bold;right:85.9px;transform:scaleX(1.1050);transform-origin:100% 0;">3,122,214</span>
<span class="t" style="top:1501px;font-size:14px;line-height:14px;color:#222;right:1981.9px;transform:scaleX(1.0400);transform-origin:100% 0;">(38,333)</span>
<span class="t" style="top:1501px;font-size:14px;line-height:14px;color:#222;right:1862.9px;transform:scaleX(1.0400);transform-origin:100% 0;">(44,583)</span>
<span class="t" style="top:1501px;font-size:14px;line-height:14px;color:#222;right:1743.9px;transform:scaleX(1.0400);transform-origin:100% 0;">(49,583)</span>
<span class="t" style="top:1501px;font-size:14px;line-height:14px;color:#222;right:1624.9px;transform:scaleX(1.0400);transform-origin:100% 0;">(27,917)</span>
<span class="t" style="top:1501px;font-size:14px;line-height:14px;color:#222;right:1505.9px;transform:scaleX(1.0400);transform-origin:100% 0;">(22,917)</span>
<span class="t" style="top:1501px;font-size:14px;line-height:14px;color:#222;right:1386.9px;transform:scaleX(1.0400);transform-origin:100% 0;">(16,667)</span>
<span class="t" style="top:1501px;font-size:14px;line-height:14px;color:#222;right:1267.9px;transform:scaleX(1.0400);transform-origin:100% 0;">(5,000)</span>
<span class="t" style="top:1501px;font-size:14px;line-height:14px;color:#222;right:1154.7px;">-</span>
<span class="t" style="top:1501px;font-size:14px;line-height:14px;color:#222;right:1035.7px;">-</span>
<span class="t" style="top:1501px;font-size:14px;line-height:14px;color:#222;right:916.7px;">-</span>
<span class="t" style="top:1501px;font-size:14px;line-height:14px;color:#222;right:797.7px;">-</span>
<span class="t" style="top:1501px;font-size:14px;line-height:14px;color:#222;right:678.7px;">-</span>
<span class="t" style="top:1501px;font-size:14px;line-height:14px;color:#222;right:559.7px;">-</span>
<span class="t" style="top:1501px;font-size:14px;line-height:14px;color:#222;right:440.7px;">-</span>
<span class="t" style="top:1501px;font-size:14px;line-height:14px;color:#222;right:321.7px;">-</span>
<span class="t" style="top:1501px;font-size:14px;line-height:14px;color:#222;right:202.7px;">-</span>
<span class="t" style="top:1501px;font-size:14px;line-height:14px;color:#222;right:83.7px;">-</span>
<span class="t" style="top:1521px;font-size:14px;line-height:14px;color:#222;right:1987.4px;">900,000</span>
<span class="t" style="top:1521px;font-size:14px;line-height:14px;color:#222;right:1868.7px;">-</span>
<span class="t" style="top:1521px;font-size:14px;line-height:14px;color:#222;right:1749.4px;">98,333</span>
<span class="t" style="top:1521px;font-size:14px;line-height:14px;color:#222;right:1624.9px;transform:scaleX(1.0400);transform-origin:100% 0;">(1,667)</span>
<span class="t" style="top:1521px;font-size:14px;line-height:14px;color:#222;right:1505.9px;transform:scaleX(1.0400);transform-origin:100% 0;">(1,667)</span>
<span class="t" style="top:1521px;font-size:14px;line-height:14px;color:#222;right:1386.9px;transform:scaleX(1.0400);transform-origin:100% 0;">(1,667)</span>
<span class="t" style="top:1521px;font-size:14px;line-height:14px;color:#222;right:1267.9px;transform:scaleX(1.0400);transform-origin:100% 0;">(1,667)</span>
<span class="t" style="top:1521px;font-size:14px;line-height:14px;color:#222;right:1148.9px;transform:scaleX(1.0400);transform-origin:100% 0;">(1,667)</span>
<span class="t" style="top:1521px;font-size:14px;line-height:14px;color:#222;right:1029.9px;transform:scaleX(1.0400);transform-origin:100% 0;">(1,667)</span>
<span class="t" style="top:1521px;font-size:14px;line-height:14px;color:#222;right:910.9px;transform:scaleX(1.0400);transform-origin:100% 0;">(1,667)</span>
<span class="t" style="top:1521px;font-size:14px;line-height:14px;color:#222;right:791.9px;transform:scaleX(1.0400);transform-origin:100% 0;">(1,667)</span>
<span class="t" style="top:1521px;font-size:14px;line-height:14px;color:#222;right:672.9px;transform:scaleX(1.0400);transform-origin:100% 0;">(1,667)</span>
<span class="t" style="top:1521px;font-size:14px;line-height:14px;color:#222;right:553.9px;transform:scaleX(1.0400);transform-origin:100% 0;">(3,770)</span>
<span class="t" style="top:1521px;font-size:14px;line-height:14px;color:#222;right:434.9px;transform:scaleX(1.0400);transform-origin:100% 0;">(3,780)</span>
<span class="t" style="top:1521px;font-size:14px;line-height:14px;color:#222;right:315.9px;transform:scaleX(1.0400);transform-origin:100% 0;">(3,791)</span>
<span class="t" style="top:1521px;font-size:14px;line-height:14px;color:#222;right:196.9px;transform:scaleX(1.0400);transform-origin:100% 0;">(3,801)</span>
<span class="t" style="top:1521px;font-size:14px;line-height:14px;color:#222;right:77.9px;transform:scaleX(1.0400);transform-origin:100% 0;">(3,812)</span>
<span class="t" style="top:1541px;font-size:14px;line-height:14px;color:#222;right:1987.4px;">106,723</span>
<span class="t" style="top:1541px;font-size:14px;line-height:14px;color:#222;right:1868.4px;">196,055</span>
<span class="t" style="top:1541px;font-size:14px;line-height:14px;color:#222;right:1749.4px;">217,495</span>
<span class="t" style="top:1541px;font-size:14px;line-height:14px;color:#222;right:1630.4px;">203,440</span>
<span class="t" style="top:1541px;font-size:14px;line-height:14px;color:#222;right:1511.4px;">210,110</span>
<span class="t" style="top:1541px;font-size:14px;line-height:14px;color:#222;right:1392.4px;">203,440</span>
<span class="t" style="top:1541px;font-size:14px;line-height:14px;color:#222;right:1273.4px;">210,110</span>
<span class="t" style="top:1541px;font-size:14px;line-height:14px;color:#222;right:1154.4px;">206,775</span>
<span class="t" style="top:1541px;font-size:14px;line-height:14px;color:#222;right:1035.4px;">203,440</span>
<span class="t" style="top:1541px;font-size:14px;line-height:14px;color:#222;right:916.4px;">210,110</span>
<span class="t" style="top:1541px;font-size:14px;line-height:14px;color:#222;right:797.4px;">203,440</span>
<span class="t" style="top:1541px;font-size:14px;line-height:14px;color:#222;right:678.4px;">210,110</span>
<span class="t" style="top:1541px;font-size:14px;line-height:14px;color:#222;right:559.4px;">341,505</span>
<span class="t" style="top:1541px;font-size:14px;line-height:14px;color:#222;right:440.4px;">443,560</span>
<span class="t" style="top:1541px;font-size:14px;line-height:14px;color:#222;right:321.4px;">492,067</span>
<span class="t" style="top:1541px;font-size:14px;line-height:14px;color:#222;right:202.4px;">460,268</span>
<span class="t" style="top:1541px;font-size:14px;line-height:14px;color:#222;right:83.4px;">475,359</span>
<span class="t" style="top:1561px;font-size:14px;line-height:14px;color:#222;right:1981.9px;transform:scaleX(1.0400);transform-origin:100% 0;">(49,523)</span>
<span class="t" style="top:1561px;font-size:14px;line-height:14px;color:#222;right:1862.9px;transform:scaleX(1.0400);transform-origin:100% 0;">(65,590)</span>
<span class="t" style="top:1561px;font-size:14px;line-height:14px;color:#222;right:1743.9px;transform:scaleX(1.0400);transform-origin:100% 0;">(69,447)</span>
<span class="t" style="top:1561px;font-size:14px;line-height:14px;color:#222;right:1624.9px;transform:scaleX(1.0400);transform-origin:100% 0;">(66,919)</span>
<span class="t" style="top:1561px;font-size:14px;line-height:14px;color:#222;right:1505.9px;transform:scaleX(1.0400);transform-origin:100% 0;">(68,118)</span>
<span class="t" style="top:1561px;font-size:14px;line-height:14px;color:#222;right:1386.9px;transform:scaleX(1.0400);transform-origin:100% 0;">(66,919)</span>
<span class="t" style="top:1561px;font-size:14px;line-height:14px;color:#222;right:1267.9px;transform:scaleX(1.0400);transform-origin:100% 0;">(68,118)</span>
<span class="t" style="top:1561px;font-size:14px;line-height:14px;color:#222;right:1148.9px;transform:scaleX(1.0400);transform-origin:100% 0;">(67,519)</span>
<span class="t" style="top:1561px;font-size:14px;line-height:14px;color:#222;right:1029.9px;transform:scaleX(1.0400);transform-origin:100% 0;">(66,919)</span>
<span class="t" style="top:1561px;font-size:14px;line-height:14px;color:#222;right:910.9px;transform:scaleX(1.0400);transform-origin:100% 0;">(68,118)</span>
<span class="t" style="top:1561px;font-size:14px;line-height:14px;color:#222;right:791.9px;transform:scaleX(1.0400);transform-origin:100% 0;">(66,919)</span>
<span class="t" style="top:1561px;font-size:14px;line-height:14px;color:#222;right:672.9px;transform:scaleX(1.0400);transform-origin:100% 0;">(68,118)</span>
<span class="t" style="top:1561px;font-size:14px;line-height:14px;color:#222;right:553.9px;transform:scaleX(1.0400);transform-origin:100% 0;">(108,246)</span>
<span class="t" style="top:1561px;font-size:14px;line-height:14px;color:#222;right:434.9px;transform:scaleX(1.0400);transform-origin:100% 0;">(112,016)</span>
<span class="t" style="top:1561px;font-size:14px;line-height:14px;color:#222;right:315.9px;transform:scaleX(1.0400);transform-origin:100% 0;">(117,240)</span>
<span class="t" style="top:1561px;font-size:14px;line-height:14px;color:#222;right:196.9px;transform:scaleX(1.0400);transform-origin:100% 0;">(113,816)</span>
<span class="t" style="top:1561px;font-size:14px;line-height:14px;color:#222;right:77.9px;transform:scaleX(1.0400);transform-origin:100% 0;">(115,441)</span>
<span class="t" style="top:1581px;font-size:14px;line-height:14px;color:#222;right:1987.4px;">918,867</span>
<span class="t" style="top:1581px;font-size:14px;line-height:14px;color:#222;right:1868.4px;">85,881</span>
<span class="t" style="top:1581px;font-size:14px;line-height:14px;color:#222;right:1749.4px;">196,798</span>
<span class="t" style="top:1581px;font-size:14px;line-height:14px;color:#222;right:1630.4px;">106,938</span>
<span class="t" style="top:1581px;font-size:14px;line-height:14px;color:#222;right:1511.4px;">117,408</span>
<span class="t" style="top:1581px;font-size:14px;line-height:14px;color:#222;right:1392.4px;">118,188</span>
<span class="t" style="top:1581px;font-size:14px;line-height:14px;color:#222;right:1273.4px;">135,325</span>
<span class="t" style="top:1581px;font-size:14px;line-height:14px;color:#222;right:1154.4px;">137,590</span>
<span class="t" style="top:1581px;font-size:14px;line-height:14px;color:#222;right:1035.4px;">134,855</span>
<span class="t" style="top:1581px;font-size:14px;line-height:14px;color:#222;right:916.4px;">140,325</span>
<span class="t" style="top:1581px;font-size:14px;line-height:14px;color:#222;right:797.4px;">134,855</span>
<span class="t" style="top:1581px;font-size:14px;line-height:14px;color:#222;right:678.4px;">140,325</span>
<span class="t" style="top:1581px;font-size:14px;line-height:14px;color:#222;right:559.4px;">229,489</span>
<span class="t" style="top:1581px;font-size:14px;line-height:14px;color:#222;right:440.4px;">327,764</span>
<span class="t" style="top:1581px;font-size:14px;line-height:14px;color:#222;right:321.4px;">371,036</span>
<span class="t" style="top:1581px;font-size:14px;line-height:14px;color:#222;right:202.4px;">342,651</span>
<span class="t" style="top:1581px;font-size:14px;line-height:14px;color:#222;right:83.4px;">356,106</span>
<span class="t" style="top:1601px;font-size:14px;line-height:14px;color:#222;right:1981.9px;transform:scaleX(1.0400);transform-origin:100% 0;">(1,000)</span>
<span class="t" style="top:1601px;font-size:14px;line-height:14px;color:#222;right:1862.9px;transform:scaleX(1.0400);transform-origin:100% 0;">(1,000)</span>
<span class="t" style="top:1601px;font-size:14px;line-height:14px;color:#222;right:1743.9px;transform:scaleX(1.0400);transform-origin:100% 0;">(1,667)</span>
<span class="t" style="top:1601px;font-size:14px;line-height:14px;color:#222;right:1624.9px;transform:scaleX(1.0400);transform-origin:100% 0;">(1,656)</span>
<span class="t" style="top:1601px;font-size:14px;line-height:14px;color:#222;right:1505.9px;transform:scaleX(1.0400);transform-origin:100% 0;">(1,644)</span>
<span class="t" style="top:1601px;font-size:14px;line-height:14px;color:#222;right:1386.9px;transform:scaleX(1.0400);transform-origin:100% 0;">(1,633)</span>
<span class="t" style="top:1601px;font-size:14px;line-height:14px;color:#222;right:1267.9px;transform:scaleX(1.0400);transform-origin:100% 0;">(1,622)</span>
<span class="t" style="top:1601px;font-size:14px;line-height:14px;color:#222;right:1148.9px;transform:scaleX(1.0400);transform-origin:100% 0;">(1,611)</span>
<span class="t" style="top:1601px;font-size:14px;line-height:14px;color:#222;right:1029.9px;transform:scaleX(1.0400);transform-origin:100% 0;">(1,600)</span>
<span class="t" style="top:1601px;font-size:14px;line-height:14px;color:#222;right:910.9px;transform:scaleX(1.0400);transform-origin:100% 0;">(1,589)</span>
<span class="t" style="top:1601px;font-size:14px;line-height:14px;color:#222;right:791.9px;transform:scaleX(1.0400);transform-origin:100% 0;">(1,578)</span>
<span class="t" style="top:1601px;font-size:14px;line-height:14px;color:#222;right:672.9px;transform:scaleX(1.0400);transform-origin:100% 0;">(1,567)</span>
<span class="t" style="top:1601px;font-size:14px;line-height:14px;color:#222;right:553.9px;transform:scaleX(1.0400);transform-origin:100% 0;">(1,556)</span>
<span class="t" style="top:1601px;font-size:14px;line-height:14px;color:#222;right:434.9px;transform:scaleX(1.0400);transform-origin:100% 0;">(1,534)</span>
<span class="t" style="top:1601px;font-size:14px;line-height:14px;color:#222;right:315.9px;transform:scaleX(1.0400);transform-origin:100% 0;">(1,512)</span>
<span class="t" style="top:1601px;font-size:14px;line-height:14px;color:#222;right:196.9px;transform:scaleX(1.0400);transform-origin:100% 0;">(1,491)</span>
<span class="t" style="top:1601px;font-size:14px;line-height:14px;color:#222;right:77.9px;transform:scaleX(1.0400);transform-origin:100% 0;">(1,469)</span>
<span class="t" style="top:1621px;font-size:14px;line-height:14px;color:#222;right:1981.9px;transform:scaleX(1.0400);transform-origin:100% 0;">(34,484)</span>
<span class="t" style="top:1621px;font-size:14px;line-height:14px;color:#222;right:1862.9px;transform:scaleX(1.0400);transform-origin:100% 0;">(34,391)</span>
<span class="t" style="top:1621px;font-size:14px;line-height:14px;color:#222;right:1743.9px;transform:scaleX(1.0400);transform-origin:100% 0;">(34,121)</span>
<span class="t" style="top:1621px;font-size:14px;line-height:14px;color:#222;right:1624.9px;transform:scaleX(1.0400);transform-origin:100% 0;">(34,066)</span>
<span class="t" style="top:1621px;font-size:14px;line-height:14px;color:#222;right:1505.9px;transform:scaleX(1.0400);transform-origin:100% 0;">(34,021)</span>
<span class="t" style="top:1621px;font-size:14px;line-height:14px;color:#222;right:1386.9px;transform:scaleX(1.0400);transform-origin:100% 0;">(33,989)</span>
<span class="t" style="top:1621px;font-size:14px;line-height:14px;color:#222;right:1267.9px;transform:scaleX(1.0400);transform-origin:100% 0;">(33,981)</span>
<span class="t" style="top:1621px;font-size:14px;line-height:14px;color:#222;right:1148.9px;transform:scaleX(1.0400);transform-origin:100% 0;">(33,984)</span>
<span class="t" style="top:1621px;font-size:14px;line-height:14px;color:#222;right:1029.9px;transform:scaleX(1.0400);transform-origin:100% 0;">(33,987)</span>
<span class="t" style="top:1621px;font-size:14px;line-height:14px;color:#222;right:910.9px;transform:scaleX(1.0400);transform-origin:100% 0;">(33,990)</span>
<span class="t" style="top:1621px;font-size:14px;line-height:14px;color:#222;right:791.9px;transform:scaleX(1.0400);transform-origin:100% 0;">(33,993)</span>
<span class="t" style="top:1621px;font-size:14px;line-height:14px;color:#222;right:672.9px;transform:scaleX(1.0400);transform-origin:100% 0;">(33,995)</span>
<span class="t" style="top:1621px;font-size:14px;line-height:14px;color:#222;right:553.9px;transform:scaleX(1.0400);transform-origin:100% 0;">(87,480)</span>
<span class="t" style="top:1621px;font-size:14px;line-height:14px;color:#222;right:434.9px;transform:scaleX(1.0400);transform-origin:100% 0;">(87,486)</span>
<span class="t" style="top:1621px;font-size:14px;line-height:14px;color:#222;right:315.9px;transform:scaleX(1.0400);transform-origin:100% 0;">(87,491)</span>
<span class="t" style="top:1621px;font-size:14px;line-height:14px;color:#222;right:196.9px;transform:scaleX(1.0400);transform-origin:100% 0;">(87,497)</span>
<span class="t" style="top:1621px;font-size:14px;line-height:14px;color:#222;right:77.9px;transform:scaleX(1.0400);transform-origin:100% 0;">(87,502)</span>
<span class="t" style="top:1640px;font-size:16px;line-height:16px;color:#fff;font-weight:bold;right:1989.9px;transform:scaleX(1.1050);transform-origin:100% 0;">883,382</span>
<span class="t" style="top:1640px;font-size:16px;line-height:16px;color:#fff;font-weight:bold;right:1870.9px;transform:scaleX(1.1050);transform-origin:100% 0;">50,490</span>
<span class="t" style="top:1640px;font-size:16px;line-height:16px;color:#fff;font-weight:bold;right:1751.9px;transform:scaleX(1.1050);transform-origin:100% 0;">161,010</span>
<span class="t" style="top:1640px;font-size:16px;line-height:16px;color:#fff;font-weight:bold;right:1632.9px;transform:scaleX(1.1050);transform-origin:100% 0;">71,216</span>
<span class="t" style="top:1640px;font-size:16px;line-height:16px;color:#fff;font-weight:bold;right:1513.9px;transform:scaleX(1.1050);transform-origin:100% 0;">81,743</span>
<span class="t" style="top:1640px;font-size:16px;line-height:16px;color:#fff;font-weight:bold;right:1394.9px;transform:scaleX(1.1050);transform-origin:100% 0;">82,565</span>
<span class="t" style="top:1640px;font-size:16px;line-height:16px;color:#fff;font-weight:bold;right:1275.9px;transform:scaleX(1.1050);transform-origin:100% 0;">99,721</span>
<span class="t" style="top:1640px;font-size:16px;line-height:16px;color:#fff;font-weight:bold;right:1156.9px;transform:scaleX(1.1050);transform-origin:100% 0;">101,994</span>
<span class="t" style="top:1640px;font-size:16px;line-height:16px;color:#fff;font-weight:bold;right:1037.9px;transform:scaleX(1.1050);transform-origin:100% 0;">99,268</span>
<span class="t" style="top:1640px;font-size:16px;line-height:16px;color:#fff;font-weight:bold;right:918.9px;transform:scaleX(1.1050);transform-origin:100% 0;">104,746</span>
<span class="t" style="top:1640px;font-size:16px;line-height:16px;color:#fff;font-weight:bold;right:799.9px;transform:scaleX(1.1050);transform-origin:100% 0;">99,284</span>
<span class="t" style="top:1640px;font-size:16px;line-height:16px;color:#fff;font-weight:bold;right:680.9px;transform:scaleX(1.1050);transform-origin:100% 0;">104,763</span>
<span class="t" style="top:1640px;font-size:16px;line-height:16px;color:#fff;font-weight:bold;right:561.9px;transform:scaleX(1.1050);transform-origin:100% 0;">140,453</span>
<span class="t" style="top:1640px;font-size:16px;line-height:16px;color:#fff;font-weight:bold;right:442.9px;transform:scaleX(1.1050);transform-origin:100% 0;">238,745</span>
<span class="t" style="top:1640px;font-size:16px;line-height:16px;color:#fff;font-weight:bold;right:323.9px;transform:scaleX(1.1050);transform-origin:100% 0;">282,032</span>
<span class="t" style="top:1640px;font-size:16px;line-height:16px;color:#fff;font-weight:bold;right:204.9px;transform:scaleX(1.1050);transform-origin:100% 0;">253,664</span>
<span class="t" style="top:1640px;font-size:16px;line-height:16px;color:#fff;font-weight:bold;right:85.9px;transform:scaleX(1.1050);transform-origin:100% 0;">267,135</span>
<span class="t" style="top:1404px;font-size:16px;line-height:16px;color:#cfeafa;right:2111px;">-</span>
<div style="left:2826.5px;top:1401px;width:33.9px;height:20px;overflow:hidden"><span class="t" style="left:27.5px;top:3px;font-size:16px;line-height:16px;color:#fff;font-weight:bold">3,000</span></div>
<div style="left:2860.4px;top:278.2px;width:30.6px;height:1393.6px;background:#1f1f1f;border-radius:15px;"></div>
<svg style="left:0;top:0" width="2902" height="1700" viewBox="0 0 2902 1700"><path d="M2869.4 295.4L2875.8 286.4Q2876.4 285.6 2877 286.4L2883.4 295.4Z" fill="#9c9c9c"/><rect x="2870.2" y="304" width="12" height="1016" rx="6" fill="#9c9c9c"/><path d="M2869.4 1652.6L2875.8 1661.6Q2876.4 1662.4 2877 1661.6L2883.4 1652.6Z" fill="#9c9c9c"/></svg>
<div style="left:1206px;top:1666px;width:68px;height:10px;background:#fff;"></div>
<div style="left:11px;top:1670.2px;width:1204.7px;height:47.8px;background:#0a0a0a;border-top-right-radius:5px;"></div>
<div style="left:1264.3px;top:1670.2px;width:1626.7px;height:47.8px;background:#0a0a0a;border-top-left-radius:5px;"></div>
<div style="left:1215.5px;top:1711.8px;width:49px;height:6.4px;background:#0a0a0a;"></div>
<div style="left:11px;top:1717.8px;width:2880px;height:33.2px;background:#141414;"></div>
<div style="left:11px;top:1717.4px;width:2880px;height:1.1px;background:#2e2e2e;"></div>
<div style="left:299px;top:1676.1px;width:128px;height:36px;background:#fbec5e;border-radius:5.5px;"></div>
<div style="left:440.4px;top:1676.1px;width:105.6px;height:36px;background:#fbec5e;border-radius:5.5px;"></div>
<div style="left:559.3px;top:1676.1px;width:157.9px;height:36px;background:#fbec5e;border-radius:5.5px;"></div>
<div style="left:730.5px;top:1676.1px;width:88.5px;height:36px;background:#fbec5e;border-radius:5.5px;"></div>
<div style="left:832px;top:1676.1px;width:86.6px;height:36px;background:#fbec5e;border-radius:5.5px;"></div>
<div style="left:931.7px;top:1676.1px;width:113.3px;height:36px;background:#fbec5e;border-radius:5.5px;"></div>
<div style="left:1058.3px;top:1676.1px;width:89.3px;height:36px;background:#fbec5e;border-radius:5.5px;"></div>
<div style="left:1161px;top:1676.1px;width:42.2px;height:36px;background:#4bb3ea;border-radius:5.5px;"></div>
<div style="left:1277px;top:1676.1px;width:48px;height:36px;background:#4bb3ea;border-radius:5.5px;"></div>
<div style="left:1338.3px;top:1676.1px;width:114.5px;height:36px;background:#4bb3ea;border-radius:5.5px;"></div>
<div style="left:1466px;top:1676.1px;width:114.6px;height:36px;background:#4bb3ea;border-radius:5.5px;"></div>
<div style="left:1594px;top:1676.1px;width:113.6px;height:36px;background:#4bb3ea;border-radius:5.5px;"></div>
<div style="left:1721px;top:1676.1px;width:47.5px;height:36px;background:#4bb3ea;border-radius:5.5px;"></div>
<div style="left:1781.9px;top:1676.1px;width:71.8px;height:36px;background:#4bb3ea;border-radius:5.5px;"></div>
<div style="left:1867px;top:1676.1px;width:84.6px;height:36px;background:#4bb3ea;border-radius:5.5px;"></div>
<div style="left:1965.3px;top:1676.1px;width:63.7px;height:36px;background:#4bb3ea;border-radius:5.5px;"></div>
<div style="left:2042px;top:1676.1px;width:30.4px;height:36px;background:#4bb3ea;border-radius:5.5px 0 0 5.5px;"></div>
<div style="left:1215.7px;top:1668px;width:48.6px;height:44.1px;background:linear-gradient(#fff 25%,#d0e8f8);border-radius:0 0 4.5px 4.5px;"></div>
<div style="left:1228px;top:1705px;width:23.8px;height:2.8px;background:#1f8a4c;"></div>
<div style="left:291.6px;top:1680.2px;width:1.2px;height:27.8px;background:#5a5a5a;"></div>
<div style="left:433.1px;top:1680.2px;width:1.2px;height:27.8px;background:#5a5a5a;"></div>
<div style="left:552.1px;top:1680.2px;width:1.2px;height:27.8px;background:#5a5a5a;"></div>
<div style="left:723.2px;top:1680.2px;width:1.2px;height:27.8px;background:#5a5a5a;"></div>
<div style="left:824.9px;top:1680.2px;width:1.2px;height:27.8px;background:#5a5a5a;"></div>
<div style="left:924.6px;top:1680.2px;width:1.2px;height:27.8px;background:#5a5a5a;"></div>
<div style="left:1051px;top:1680.2px;width:1.2px;height:27.8px;background:#5a5a5a;"></div>
<div style="left:1153.7px;top:1680.2px;width:1.2px;height:27.8px;background:#5a5a5a;"></div>
<div style="left:1208.8px;top:1680.2px;width:1.2px;height:27.8px;background:#5a5a5a;"></div>
<div style="left:1270.1px;top:1680.2px;width:1.2px;height:27.8px;background:#5a5a5a;"></div>
<div style="left:1331px;top:1680.2px;width:1.2px;height:27.8px;background:#5a5a5a;"></div>
<div style="left:1458.8px;top:1680.2px;width:1.2px;height:27.8px;background:#5a5a5a;"></div>
<div style="left:1586.7px;top:1680.2px;width:1.2px;height:27.8px;background:#5a5a5a;"></div>
<div style="left:1713.7px;top:1680.2px;width:1.2px;height:27.8px;background:#5a5a5a;"></div>
<div style="left:1774.3px;top:1680.2px;width:1.2px;height:27.8px;background:#5a5a5a;"></div>
<div style="left:1859.7px;top:1680.2px;width:1.2px;height:27.8px;background:#5a5a5a;"></div>
<div style="left:1957.8px;top:1680.2px;width:1.2px;height:27.8px;background:#5a5a5a;"></div>
<div style="left:2034.9px;top:1680.2px;width:1.2px;height:27.8px;background:#5a5a5a;"></div>
<span class="t" style="top:1686px;font-size:20.6px;line-height:20.6px;color:#1a1a1a;left:313.3px;">Dashboard</span>
<span class="t" style="top:1686px;font-size:20.6px;line-height:20.6px;color:#1a1a1a;left:454.5px;transform:scaleX(0.9507);transform-origin:0 0;">Revenue</span>
<span class="t" style="top:1686px;font-size:20.6px;line-height:20.6px;color:#1a1a1a;left:572.2px;transform:scaleX(0.9280);transform-origin:0 0;">COGS &amp; OPEX</span>
<span class="t" style="top:1686px;font-size:20.6px;line-height:20.6px;color:#1a1a1a;left:743.5px;transform:scaleX(0.9735);transform-origin:0 0;">Payroll</span>
<span class="t" style="top:1686px;font-size:20.6px;line-height:20.6px;color:#1a1a1a;left:845px;transform:scaleX(0.8706);transform-origin:0 0;">CAPEX</span>
<span class="t" style="top:1686px;font-size:20.6px;line-height:20.6px;color:#1a1a1a;left:945.5px;transform:scaleX(0.9789);transform-origin:0 0;">CapTable</span>
<span class="t" style="top:1686px;font-size:20.6px;line-height:20.6px;color:#1a1a1a;left:1071.3px;transform:scaleX(0.9871);transform-origin:0 0;">Capital</span>
<span class="t" style="top:1686px;font-size:20.6px;line-height:20.6px;color:#1a1a1a;left:1175.2px;transform:scaleX(0.7501);transform-origin:0 0;">IS</span>
<span class="t" style="top:1686px;font-size:20.6px;line-height:20.6px;color:#1a1a1a;left:1290.4px;transform:scaleX(0.7823);transform-origin:0 0;">BS</span>
<span class="t" style="top:1686px;font-size:20.6px;line-height:20.6px;color:#1a1a1a;left:1351.3px;transform:scaleX(0.9530);transform-origin:0 0;">Scenarios</span>
<span class="t" style="top:1686px;font-size:20.6px;line-height:20.6px;color:#1a1a1a;left:1479.5px;transform:scaleX(1.0299);transform-origin:0 0;">Valuation</span>
<span class="t" style="top:1686px;font-size:20.6px;line-height:20.6px;color:#1a1a1a;left:1608.2px;transform:scaleX(0.9803);transform-origin:0 0;">Summary</span>
<span class="t" style="top:1686px;font-size:20.6px;line-height:20.6px;color:#1a1a1a;left:1734.8px;transform:scaleX(0.7532);transform-origin:0 0;">BE</span>
<span class="t" style="top:1686px;font-size:20.6px;line-height:20.6px;color:#1a1a1a;left:1795.7px;transform:scaleX(0.8913);transform-origin:0 0;">ROIC</span>
<span class="t" style="top:1686px;font-size:20.6px;line-height:20.6px;color:#1a1a1a;left:1879.9px;transform:scaleX(0.9642);transform-origin:0 0;">Charts</span>
<span class="t" style="top:1686px;font-size:20.6px;line-height:20.6px;color:#1a1a1a;left:1978px;transform:scaleX(0.8735);transform-origin:0 0;">KPIs</span>
<span class="t" style="top:1686px;font-size:20.6px;line-height:20.6px;color:#fff;left:190px;">Contents</span>
<span class="t" style="top:1681px;font-size:20.6px;line-height:20.6px;color:#1a1a1a;left:1228.3px;transform:scaleX(0.8303);transform-origin:0 0;">CF</span>
<div style="left:2042px;top:1676px;width:30.4px;height:36px;overflow:hidden"><span class="t" style="left:12px;top:10px;font-size:20.6px;line-height:20.6px;color:#1a1a1a;transform:scaleX(0.92);transform-origin:0 0">Scen</span></div>
<span class="t" style="top:1728px;font-size:15.8px;line-height:15.8px;color:#fff;left:27.2px;transform:scaleX(0.9283);transform-origin:0 0;">Ready</span>
<span class="t" style="top:1728px;font-size:15.8px;line-height:15.8px;color:#fff;font-weight:bold;left:173px;transform:scaleX(0.9926);transform-origin:0 0;">Accessibility: Investigate</span>
<span class="t" style="top:1728px;font-size:15.4px;line-height:15.4px;color:#fff;left:2840.6px;transform:scaleX(0.9749);transform-origin:0 0;">100%</span>
<svg style="left:0;top:1660px" width="2902" height="102" viewBox="0 0 2902 102"><path d="M53.6 25.6L47.4 32.6L53.6 39.6" fill="none" stroke="#9a9a9a" stroke-width="1.6" /><path d="M96 25.6L102.4 32.6L96 39.6" fill="none" stroke="#e0e0e0" stroke-width="1.6" /><circle cx="2091" cy="32.8" r="1.5" fill="#e0e0e0"/><circle cx="2095.6" cy="32.8" r="1.5" fill="#e0e0e0"/><circle cx="2100.2" cy="32.8" r="1.5" fill="#e0e0e0"/><path d="M2134.8 33H2151.8M2143.3 24.5V41.5" fill="none" stroke="#e0e0e0" stroke-width="1.6" /><circle cx="2191.6" cy="27.8" r="1.5" fill="#e0e0e0"/><circle cx="2191.6" cy="33.4" r="1.5" fill="#e0e0e0"/><circle cx="2191.6" cy="39" r="1.5" fill="#e0e0e0"/><rect x="2216.4" y="19.2" width="644.6" height="26.8" fill="#1e1e1e" rx="13"/><path d="M2233.6 26.6L2224.4 33L2233.6 39.4Z" fill="#9c9c9c" /><path d="M2843.6 26.6L2852.8 33L2843.6 39.4Z" fill="#9c9c9c" /><rect x="2242" y="26.8" width="158.8" height="12.6" fill="#9c9c9c" rx="6.3"/><rect x="99.6" y="66.2" width="21.4" height="16.4" fill="none" stroke="#e6e6e6" stroke-width="1.5" rx="1"/><path d="M99.6 70.6L121 70.6" stroke="#e6e6e6" stroke-width="1.4" stroke-linecap="butt" fill="none"/><path d="M102.4 74.6L107 74.6" stroke="#e6e6e6" stroke-width="1.3" stroke-linecap="butt" fill="none"/><path d="M102.4 78.2L107 78.2" stroke="#e6e6e6" stroke-width="1.3" stroke-linecap="butt" fill="none"/><circle cx="114.6" cy="80" r="6" fill="#141414" stroke="#e6e6e6" stroke-width="1.5"/><circle cx="114.6" cy="80" r="2.4" fill="#e6e6e6"/><circle cx="155.8" cy="67.4" r="2.5" fill="none" stroke="#e6e6e6" stroke-width="1.4"/><path d="M147.6 71.4L155.8 73.4L164 71.4M155.8 73.4V79L150.6 86.4M155.8 79L158 82" fill="none" stroke="#e6e6e6" stroke-width="1.8" stroke-linecap="round" stroke-linejoin="round"/><path d="M159 78.6L166.6 86.2M166.6 78.6L159 86.2" fill="none" stroke="#e6e6e6" stroke-width="1.5" /><rect x="2444.8" y="58.4" width="60.6" height="32.2" fill="#2b2b2b"/><rect x="2464.4" y="65.2" width="19.4" height="17.6" fill="none" stroke="#f0f0f0" stroke-width="1.5"/><path d="M2470.9 65.2V82.8M2477.3 65.2V82.8M2464.4 71H2483.8M2464.4 76.9H2483.8" fill="none" stroke="#f0f0f0" stroke-width="1.4" /><rect x="2525" y="65.2" width="20.4" height="17.6" fill="none" stroke="#f0f0f0" stroke-width="1.5"/><rect x="2530" y="69" width="10.4" height="10" fill="none" stroke="#f0f0f0" stroke-width="1.3"/><path d="M2532.6 72.4L2537.8 72.4" stroke="#f0f0f0" stroke-width="1.1" stroke-linecap="butt" fill="none"/><path d="M2532.6 75.6L2537.8 75.6" stroke="#f0f0f0" stroke-width="1.1" stroke-linecap="butt" fill="none"/><rect x="2584" y="65.2" width="21.4" height="17.6" fill="none" stroke="#f0f0f0" stroke-width="1.5"/><path d="M2590.6 65.2V75.4H2598.6V65.2" fill="none" stroke="#f0f0f0" stroke-width="1.4" /><path d="M2633.4 74.4L2644 74.4" stroke="#d0d0d0" stroke-width="1.4" stroke-linecap="butt" fill="none"/><path d="M2653.6 74.4L2801.4 74.4" stroke="#9a9a9a" stroke-width="1.3" stroke-linecap="butt" fill="none"/><rect x="2722.8" y="65.4" width="7.6" height="18" fill="#d6d6d6" rx="1.5"/><path d="M2808.4 74.4H2819.6M2814 68.8V80" fill="none" stroke="#d0d0d0" stroke-width="1.4" /></svg>
</body></html>
